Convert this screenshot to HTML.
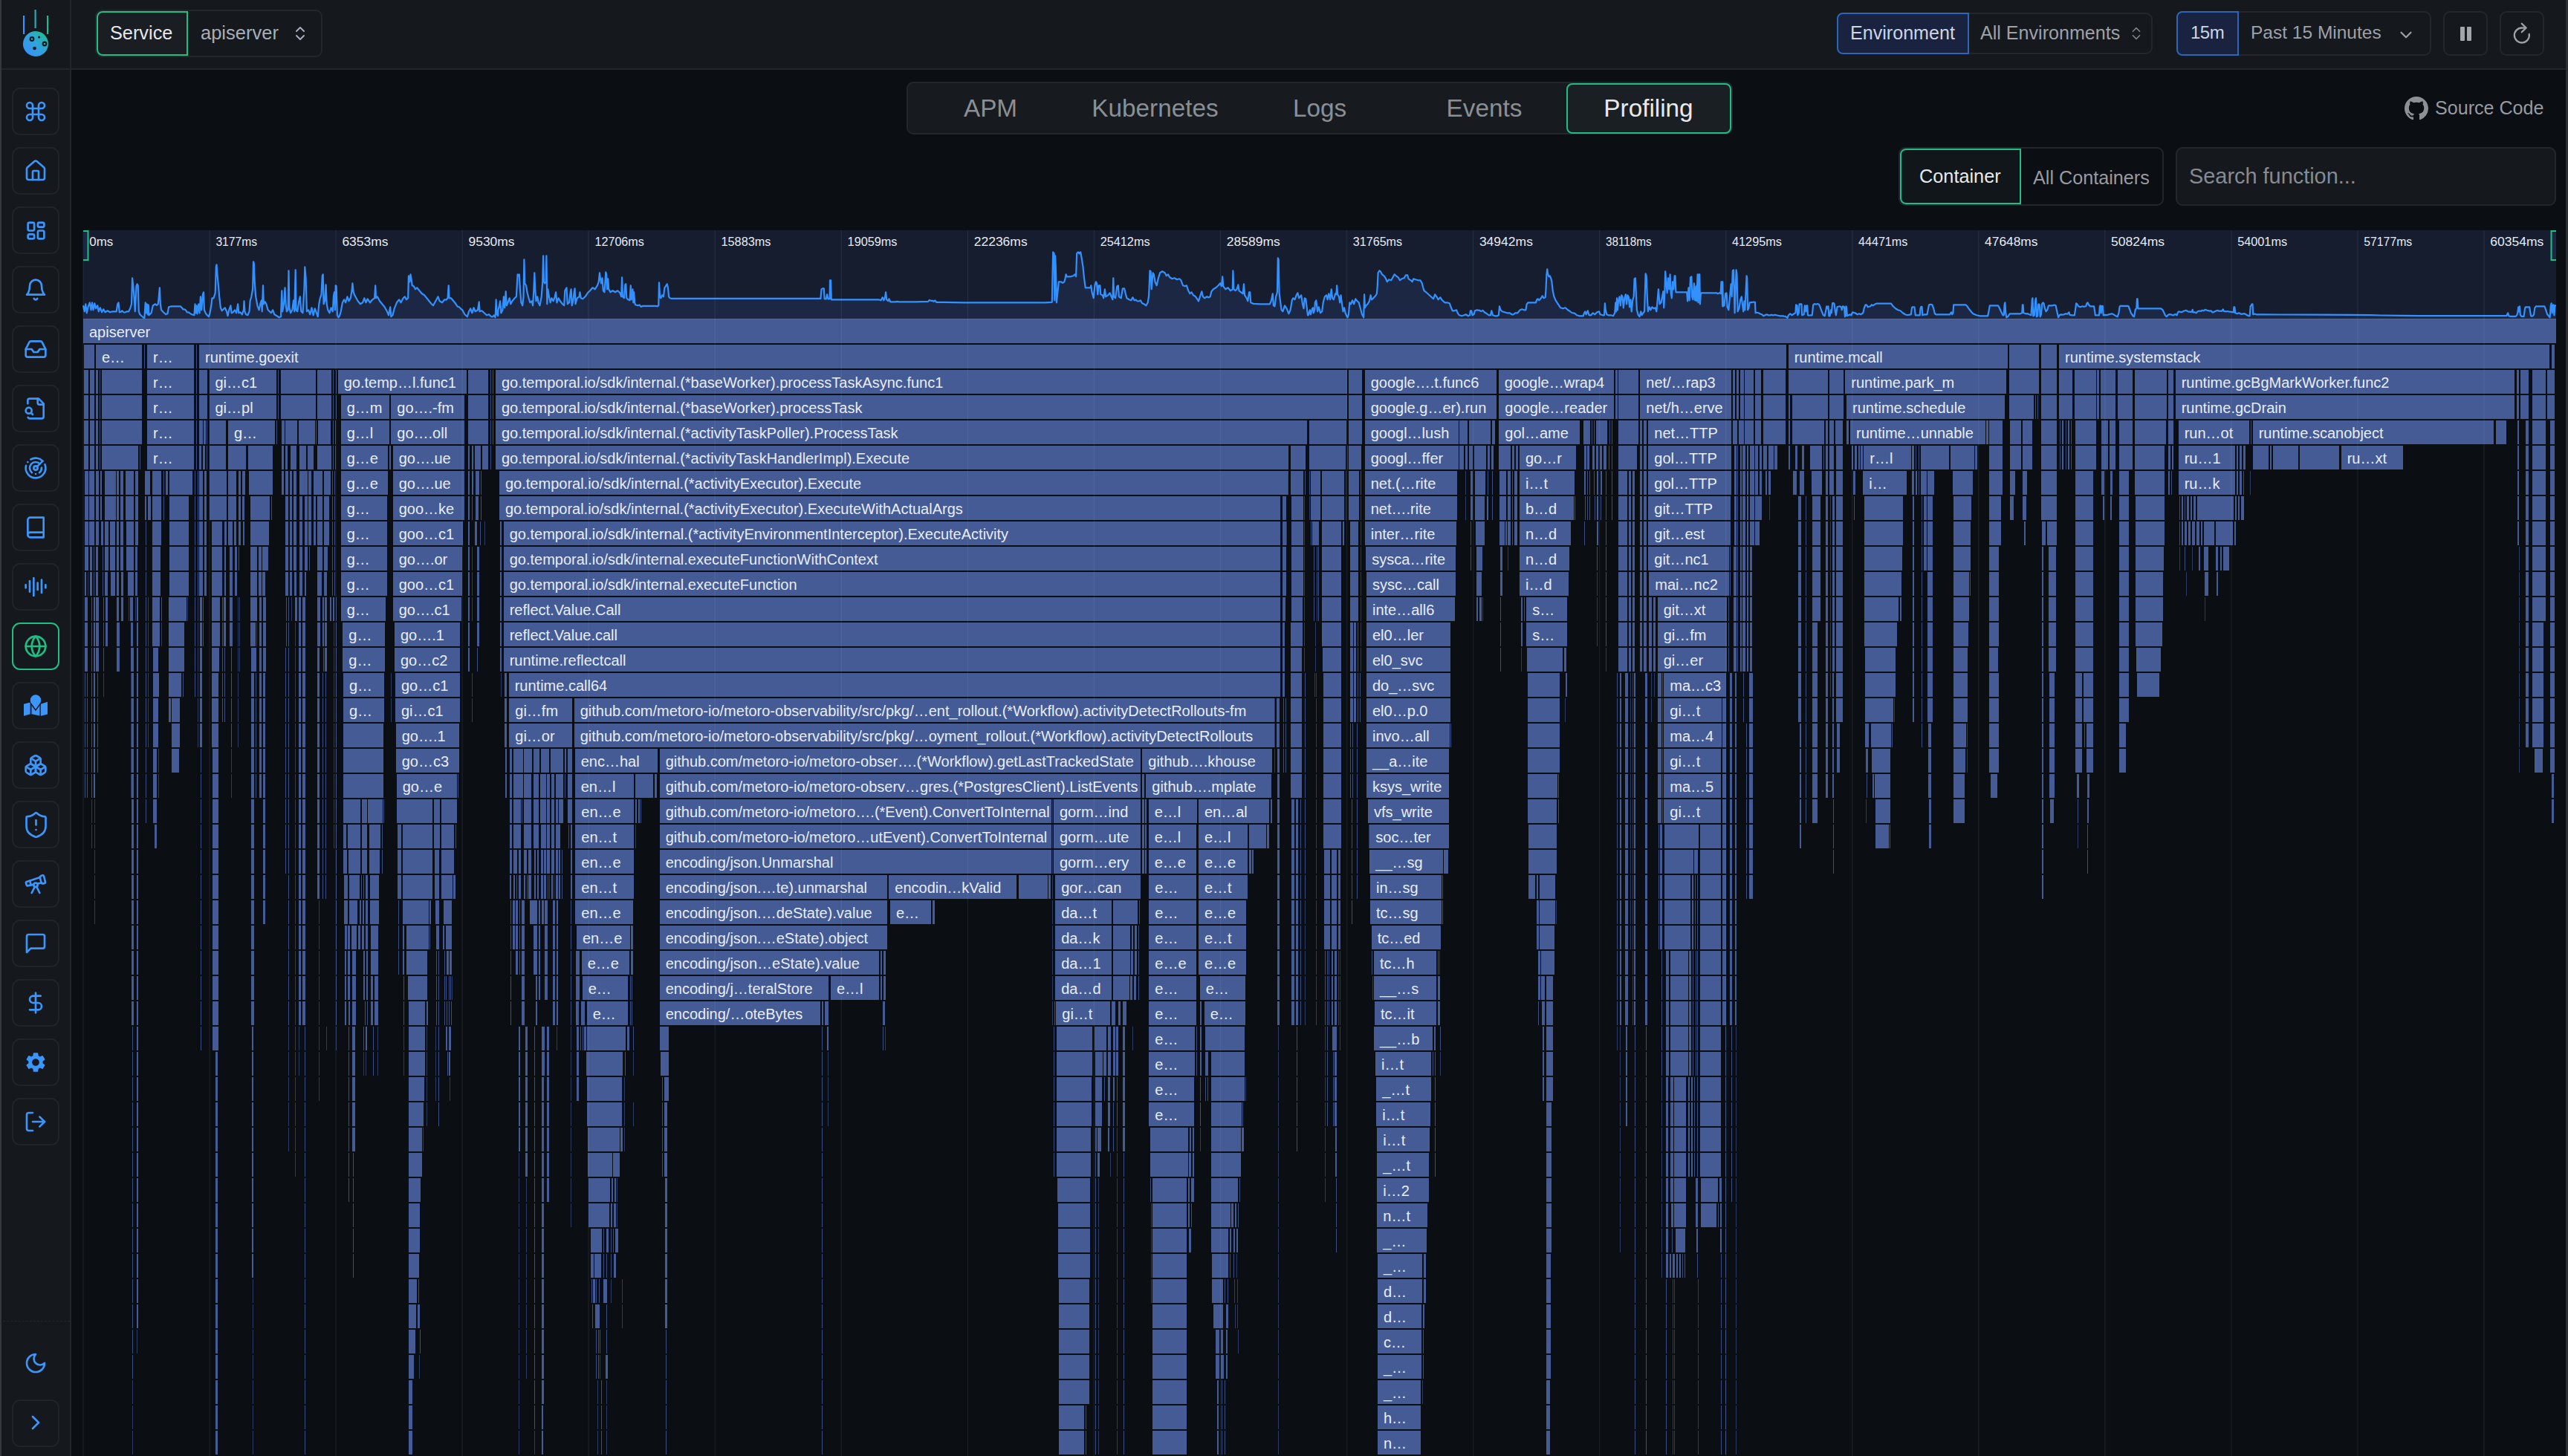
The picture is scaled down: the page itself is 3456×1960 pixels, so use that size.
<!DOCTYPE html><html><head><meta charset="utf-8"><title>Profiling</title><style>

*{box-sizing:border-box;margin:0;padding:0}
html,body{width:3456px;height:1960px;overflow:hidden;background:#0b0e12;font-family:"Liberation Sans",sans-serif;color:#e6e9ee}
#root{position:relative;width:3456px;height:1960px;overflow:hidden}
.ab{position:absolute}
.ic{position:absolute;overflow:visible}
#sb{position:absolute;left:0;top:0;width:96px;height:1960px;background:#15181d;border-right:2px solid #22252a}
#sbl{position:absolute;left:0;top:0;width:2px;height:1960px;background:#34373c}
#tb{position:absolute;left:96px;top:0;width:3360px;height:94px;background:#15181d;border-bottom:2px solid #22252a}
.sbb{position:absolute;left:16px;width:64px;height:64px;border:2px solid #202329;border-radius:11px;background:#15181d}
.sbb.act{border-color:#1fbe83}
.box{position:absolute;border:2px solid #23262c;border-radius:9px}
.t{position:absolute;white-space:nowrap;line-height:1}

</style></head><body><div id="root">
<svg class="ab" style="left:0;top:0" width="3456" height="1960" viewBox="0 0 3456 1960">
<rect x="112" y="310" width="3328" height="120" fill="#151d2f"/>
<path d="M112 411.3 L112 411.3 L113.7 419.3 L115.3 409.3 L116.8 421.3 L118.5 413.3 L120.7 407.3 L122.5 417.3 L124 407.3 L125.5 417.3 L127.3 408.3 L129 415.3 L131.2 411.3 L132.7 419.3 L134.9 414.3 L137.1 420.3 L139.3 416.3 L141.4 420.3 L144.7 418.3 L148 420.3 L151.2 419.3 L156.7 419.3 L158.2 409.3 L159.5 407.3 L160.8 420.3 L162.6 419.9 L164.3 418.3 L166.5 420.5 L168.7 420.3 L170.9 419.3 L173.1 419.3 L175.2 415.3 L177 409.3 L178.1 374.3 L179.2 384.3 L180.5 399.3 L181.8 419.3 L183.5 385.3 L184.6 382.3 L185.7 384.3 L186.8 419.3 L188.3 423.3 L191.6 426.3 L194.4 428.3 L195.7 407.3 L196.6 421.3 L197.7 409.3 L198.8 423.3 L199.7 410.3 L200.5 424.3 L203.6 421.3 L205.8 411.3 L209 409.3 L210.9 410.8 L212.7 409.3 L213.6 401.3 L214.9 387.3 L215.8 409.3 L217.1 417.3 L219.9 420.3 L223.2 423.3 L225.4 422.3 L227.1 413.3 L229 412.7 L230.8 412.3 L237.4 412.3 L242.8 412.3 L244.7 414.1 L246.5 416.5 L248.3 416.3 L250.1 417.6 L251.9 420.5 L253.7 420.3 L255.9 421.9 L258.1 423.3 L261.4 424.3 L262.5 409.3 L263.3 421.3 L264.6 411.3 L265.5 422.3 L267.3 409.3 L268.6 421.3 L269.9 399.3 L271.2 417.3 L272.9 396.3 L274 393.3 L274.9 417.3 L276.6 421.3 L278.8 424.3 L281 426.3 L282.5 421.3 L284.3 411.3 L285.4 401.3 L287.5 401.3 L289.7 394.3 L290.8 359.3 L291.5 356.3 L292.5 369.3 L293.9 384.3 L295.2 399.3 L296.9 414.3 L298.7 418.3 L300.6 416.3 L302.8 414.3 L305 419.3 L306.5 425.3 L308.2 417.3 L310.4 411.3 L311.7 421.3 L313.7 420.3 L315.9 417.3 L318.1 421.3 L320.2 409.3 L321.3 421.3 L323.5 420.3 L325.7 423.3 L327.9 417.3 L328.5 405.3 L329.4 419.3 L331.1 423.3 L333.3 424.3 L335.5 419.3 L336.6 405.3 L338.3 399.3 L340.1 389.3 L341 352.3 L341.8 354.3 L342.7 379.3 L344.2 399.3 L346.4 411.3 L348.6 417.3 L350.8 407.3 L351.9 404.3 L352.7 419.3 L354 384.3 L354.9 409.3 L356.7 406.3 L358.4 409.3 L360.6 417.3 L362.8 419.3 L364.9 421.3 L367.1 417.3 L369.3 423.3 L372.6 425.3 L375.8 427.3 L378 426.3 L379.3 391.3 L380.2 419.3 L382 409.3 L383.5 387.3 L384.6 409.3 L385.9 419.3 L387.6 417.3 L388.5 364.3 L389.4 414.3 L391.1 421.3 L393.3 417.3 L395 404.3 L396.3 419.3 L397.7 363.3 L398.5 417.3 L400.3 419.3 L402 407.3 L403.8 399.3 L405.3 419.3 L407.5 421.3 L409.4 389.3 L410.3 359.3 L411.6 374.3 L412.9 419.3 L415.1 417.3 L417.3 423.3 L419.5 414.3 L421.6 424.3 L423.8 415.3 L426 421.3 L427.7 426.3 L429.3 409.3 L430.8 401.3 L432.5 396.3 L433.8 371.3 L434.7 369.3 L435.6 409.3 L437.3 404.3 L438.6 383.3 L439.7 409.3 L441.3 417.3 L443.4 421.3 L445.6 414.3 L447.8 419.3 L448.9 399.3 L450 393.3 L450.9 417.3 L451.7 384.3 L452.6 385.3 L453.9 424.3 L455.4 427.3 L457 425.3 L458.7 419.3 L460.9 407.3 L463.1 403.3 L465.2 407.3 L467.4 399.3 L469.6 405.3 L471.8 401.3 L473.5 391.3 L474.4 381.3 L475.7 393.3 L477.2 397.3 L479.4 401.3 L481.6 405.3 L484.9 409.3 L488.1 407.3 L490.3 401.3 L492.5 407.3 L494.7 402.3 L498 407.3 L501.2 403.3 L504.1 401.3 L505.2 384.3 L506 401.3 L507.8 399.3 L511 405.3 L514.3 409.3 L517.6 413.3 L520.9 419.3 L523 424.3 L525.2 413.3 L526.3 426.3 L528.5 424.3 L530.7 415.3 L533.9 407.3 L537.2 403.3 L539.4 407.3 L542.7 401.3 L544.8 399.3 L547 403.3 L549.2 401.3 L549.9 371.3 L551.4 379.3 L552.5 369.3 L553.8 377.3 L554.7 384.3 L556.8 385.3 L559 389.3 L561.2 387.3 L564.5 391.3 L567.7 395.3 L571 397.3 L574.3 401.3 L577.5 405.3 L580.8 409.3 L583 411.3 L586.3 405.3 L589.5 399.3 L591.7 405.3 L595 407.3 L598.3 403.3 L600.4 403.8 L602.6 401.3 L603.7 384.3 L604.6 401.3 L607 401.3 L610.3 405.3 L613.5 409.3 L615.7 412.7 L617.9 413.3 L620.1 415.6 L622.2 417.3 L625.5 423.3 L628.8 426.3 L631 419.3 L633.2 415.3 L635.3 421.3 L637.5 414.3 L639.7 419.3 L643 417.3 L644.7 406.3 L645.6 419.3 L648.4 418.3 L651.7 421.3 L655 424.3 L658.2 423.3 L660 425.3 L661.5 426.3 L663.3 426.3 L664.8 424.3 L666.5 427.3 L666.9 421.3 L667.6 404.3 L667.6 403.3 L668.5 423.3 L668.5 421.3 L670.2 425.3 L670.5 417.3 L672 411.3 L673.1 405.3 L674.4 421.3 L676.4 417.3 L677.9 399.3 L679.2 414.3 L680.7 392.3 L681.8 411.3 L683.5 407.3 L685.7 401.3 L687.3 409.3 L689.4 405.3 L692.7 401.3 L694.9 399.3 L696.6 369.3 L697.5 371.3 L698.8 369.3 L699.9 389.3 L701.4 407.3 L703.2 411.3 L704.5 399.3 L705.4 349.3 L706.2 381.3 L708 384.3 L709.7 394.3 L711.5 401.3 L713.4 407.3 L715.6 405.3 L717.1 411.3 L718.4 389.3 L719.3 367.3 L720.2 389.3 L721.5 405.3 L723.2 399.3 L724.5 407.3 L726.5 411.3 L728.7 399.3 L730.2 379.3 L731.1 344.3 L732 379.3 L733.3 381.3 L734.6 379.3 L735.4 344.3 L736.3 409.3 L737.4 389.3 L738.5 397.3 L740.7 407.3 L742.4 401.3 L744.6 405.3 L746.8 399.3 L748.1 393.3 L749.4 407.3 L751.6 401.3 L753.8 405.3 L757 409.3 L759.2 411.3 L760.3 391.3 L762.5 387.3 L763.8 409.3 L766 407.3 L767.7 393.3 L768.6 389.3 L769.7 411.3 L771.2 405.3 L772.7 393.3 L773.6 388.3 L774.5 409.3 L776.7 401.3 L779.5 399.3 L780.4 393.3 L781.7 401.3 L784.3 402.3 L787.6 399.3 L790.8 394.3 L794.1 391.3 L797.4 387.3 L800.6 389.3 L803.9 384.3 L805.7 379.3 L807 367.3 L807.8 374.3 L809.1 381.3 L810.5 374.3 L811.8 391.3 L813.5 393.3 L815.3 366.3 L816.1 369.3 L817 389.3 L818.3 375.3 L819.2 389.3 L821.4 393.3 L824.6 391.3 L827.9 393.3 L831.2 391.3 L834.4 394.3 L836.2 399.3 L837.1 373.3 L837.9 399.3 L839.9 401.3 L841.4 383.3 L842.3 382.3 L843.2 401.3 L845.3 403.3 L847.5 404.3 L848.8 384.3 L849.7 403.3 L851.5 389.3 L852.3 407.3 L853.2 393.3 L854.1 407.3 L855.2 410.3 L858.4 411.3 L860.6 410.4 L862.8 412.9 L865 411.8 L873.7 411.8 L882.4 411.8 L884.4 412.5 L886.3 411.3 L887 380.3 L888.1 399.3 L889.4 401.3 L891.1 397.3 L892.9 399.3 L894.4 387.3 L895.9 385.3 L897.7 382.3 L899 387.3 L900.1 399.3 L901.6 401.3 L903.1 401.8 L965.3 401.8 L1052.5 401.8 L1104.4 401.8 L1105.5 389.3 L1107 388.3 L1108.8 388.3 L1109.6 402.3 L1111.8 402.3 L1113.1 396.3 L1114.4 402.3 L1116.6 402.3 L1117 377.3 L1118.1 377.3 L1118.8 403.3 L1139.7 403.3 L1161.5 403.3 L1182.2 403.3 L1185.5 404.3 L1187.7 400.3 L1189.4 404.3 L1191.2 399.3 L1192.1 393.3 L1193.1 403.3 L1195.3 405.3 L1196.4 402.3 L1198.2 406.3 L1205.1 406.3 L1207.6 405.9 L1210 406.3 L1220 406.3 L1231.8 406.3 L1249.2 405.8 L1251.1 403.9 L1252.9 404.9 L1254.7 404.8 L1256.5 405.8 L1258.3 404.5 L1260.2 406.8 L1297.2 407.3 L1362.6 407.3 L1406.2 407.3 L1415.8 406.8 L1416.5 369.3 L1417.2 339.3 L1418.7 341.3 L1419.3 404.3 L1420.2 344.3 L1421.1 369.3 L1421.9 407.3 L1423.3 394.3 L1424.8 379.3 L1428.1 379.3 L1430.2 380.8 L1432.4 379.3 L1433.7 374.3 L1434.6 369.3 L1435.7 372.3 L1441.1 372.3 L1444.4 371.3 L1446.6 369.3 L1448.1 372.3 L1449.2 341.3 L1451 339.3 L1452.5 341.3 L1454.2 339.3 L1456 349.3 L1457.5 359.3 L1459 374.3 L1460.8 387.3 L1464 387.3 L1467.3 387.3 L1468.4 384.3 L1469.5 393.3 L1471.7 401.3 L1473.4 384.3 L1474.9 379.3 L1476 381.3 L1477.3 396.3 L1478.6 384.3 L1480.4 384.3 L1481.3 396.3 L1483.7 397.3 L1485.2 401.3 L1486.9 389.3 L1488.2 399.3 L1491.3 397.3 L1493.5 394.3 L1495.7 399.3 L1497.4 403.3 L1498.3 374.3 L1499.1 399.3 L1501.1 401.3 L1503.3 385.3 L1504.8 384.3 L1505.9 399.3 L1508.7 401.3 L1510.9 388.3 L1513.1 388.3 L1514.8 395.3 L1516.4 401.3 L1519.6 403.3 L1522.3 404.3 L1524.4 400.3 L1526.6 404.3 L1528.6 403.6 L1530.5 405.3 L1532.7 405.5 L1534.9 404.3 L1537.1 408.3 L1539.7 409.3 L1542.5 411.3 L1544.7 407.3 L1546.2 397.3 L1547.5 364.3 L1548.6 365.3 L1549.7 389.3 L1551.5 367.3 L1552.8 369.3 L1554.5 379.3 L1556.7 384.3 L1558.9 374.3 L1561.1 367.3 L1564.3 365.3 L1567.6 367.3 L1569.8 371.3 L1572 369.3 L1574.2 373.3 L1577.4 375.3 L1580.7 374.3 L1584 376.3 L1587.2 375.3 L1589.4 377.3 L1592 384.3 L1594.9 385.3 L1597 384.3 L1599.2 391.3 L1601.4 395.3 L1603.6 393.3 L1605.8 397.3 L1609 399.3 L1611.7 403.3 L1613 405.3 L1615.6 397.3 L1617.3 392.3 L1618.9 399.3 L1621 401.3 L1624.3 399.3 L1626.5 400.5 L1628.7 399.3 L1630.4 392.3 L1633 389.3 L1636.3 387.3 L1639.6 384.3 L1642.2 381.3 L1643.9 385.3 L1645.2 372.3 L1646.3 385.3 L1649.4 389.3 L1652.7 387.3 L1655.9 391.3 L1658.8 389.3 L1659.4 364.3 L1660.3 389.3 L1662.5 391.3 L1664.6 389.3 L1666.4 383.3 L1667.5 391.3 L1670.1 393.3 L1672.7 395.3 L1674 382.3 L1675.1 397.3 L1677.7 401.3 L1679.3 405.3 L1681 393.3 L1682.3 393.3 L1683.2 407.3 L1686.5 408.8 L1696.3 409.3 L1708.9 409.3 L1710.7 405.3 L1712.8 395.3 L1713.9 411.3 L1715.5 412.3 L1717.2 399.3 L1718.9 393.3 L1719.8 347.3 L1720.7 349.3 L1721.6 394.3 L1722.9 404.3 L1724.6 417.3 L1726.4 419.3 L1729 411.3 L1731.6 415.3 L1734.4 422.3 L1736.6 417.3 L1738.8 404.3 L1740.3 401.3 L1742.5 403.3 L1744.7 397.3 L1746.4 394.3 L1748.2 401.3 L1749.7 399.3 L1751.2 397.3 L1753 409.3 L1754.5 415.3 L1755.8 401.3 L1757.3 402.3 L1759.1 417.3 L1760 424.3 L1760.8 424.3 L1762.2 419.3 L1762.8 417.3 L1763.9 423.3 L1764.9 419.3 L1766.1 415.3 L1767.1 414.3 L1767.6 421.3 L1769.3 417.3 L1769.8 407.3 L1771.3 404.3 L1773.1 419.3 L1774.8 413.3 L1777 421.3 L1779.2 419.3 L1780.7 407.3 L1782.9 399.3 L1785.1 397.3 L1786.6 403.3 L1788.3 395.3 L1790.1 403.3 L1791.8 389.3 L1793.1 401.3 L1794.9 403.3 L1797.1 395.3 L1798.4 396.3 L1799.2 384.3 L1800.1 396.3 L1801.9 399.3 L1803.2 407.3 L1804.5 397.3 L1805.8 407.3 L1807.5 419.3 L1809.1 414.3 L1810.6 421.3 L1812.3 425.3 L1813.6 427.3 L1814.9 423.3 L1816.3 407.3 L1818 409.3 L1820 404.3 L1822.1 409.3 L1824.3 402.3 L1826.5 405.3 L1828.7 407.3 L1830.9 415.3 L1833 423.3 L1835.2 427.3 L1836.1 396.3 L1837 414.3 L1838.5 411.3 L1840.7 409.3 L1842.9 405.3 L1844.6 397.3 L1845.9 403.3 L1848.3 401.3 L1851.1 398.3 L1852.9 395.3 L1853.8 384.3 L1854.6 367.3 L1856.4 364.3 L1857.7 365.3 L1859.9 369.3 L1862.5 371.3 L1864.7 374.3 L1866.8 379.3 L1869 376.3 L1872.3 377.3 L1874.5 373.3 L1876.7 369.3 L1878.8 371.3 L1881.7 373.3 L1883.9 377.3 L1886.5 375.3 L1889.7 374.3 L1891.9 370.3 L1894.1 370.3 L1895.6 375.3 L1898.5 377.3 L1900.6 379.3 L1902.2 375.3 L1905 376.3 L1908.3 377.3 L1911.5 377.3 L1913.7 381.3 L1915.3 387.3 L1916.6 391.3 L1919.2 393.3 L1922.5 396.3 L1925.7 399.3 L1929 402.3 L1931.2 396.3 L1933.4 399.3 L1935.5 403.3 L1938.4 400.3 L1941 404.3 L1944.3 407.3 L1947.5 407.3 L1950.8 408.3 L1953 414.3 L1954.7 418.3 L1957.3 418.3 L1960.2 417.3 L1961.7 421.3 L1963.9 424.3 L1967.2 425.3 L1970.4 424.3 L1972.6 423.3 L1975.9 425.3 L1978.1 424.3 L1978.9 418.3 L1980.2 418.3 L1981.5 424.3 L1983.5 423.3 L1985 418.3 L1987.9 417.3 L1991.1 417.8 L1993.3 419.1 L1995.5 417.8 L1997.7 420.3 L2001 422.3 L2003.8 424.3 L2006 424.3 L2007.3 418.3 L2009 424.3 L2011.9 425.3 L2015.1 425.3 L2016.9 424.3 L2018 412.3 L2019.5 417.3 L2021.7 419.3 L2024.9 420.3 L2028.2 421.3 L2031.5 421.3 L2034.7 423.3 L2036.9 423.3 L2039.1 421.3 L2042.4 421.3 L2045.7 417.3 L2048.3 416.3 L2051.1 417.3 L2053.3 417.3 L2054.8 409.3 L2056.6 407.3 L2062 407.3 L2067 407.3 L2068.3 403.3 L2069.6 402.3 L2071.4 404.3 L2074 401.3 L2075.7 398.3 L2077.5 401.3 L2079.7 400.3 L2080.5 389.3 L2081.4 369.3 L2082.3 362.3 L2083.2 369.3 L2084.5 372.3 L2085.8 371.3 L2087.1 374.3 L2088.4 379.3 L2089.7 391.3 L2091.4 399.3 L2093.6 404.3 L2096.9 409.3 L2100.2 414.3 L2103.4 415.3 L2106.7 414.3 L2110 417.3 L2113.2 419.3 L2115.4 421 L2117.6 421.3 L2119.8 422.2 L2122 424.3 L2125.2 425.3 L2130.7 425.3 L2132 421.3 L2133.3 419.3 L2134.6 423.3 L2136.8 418.3 L2138.5 424.3 L2141.2 424.3 L2143.8 421.3 L2146.4 423.3 L2149.2 420.3 L2152.1 419.3 L2153.6 423.3 L2156.9 424.3 L2159 424.3 L2159.9 408.3 L2160.8 417.3 L2162.3 423.3 L2164.5 424.3 L2167.8 424.3 L2171 425.3 L2173.2 421.3 L2174.3 407.3 L2175.2 419.3 L2176 401.3 L2176.9 417.3 L2178.2 404.3 L2179.5 399.3 L2180.8 411.3 L2182.2 397.3 L2183.5 399.3 L2184.8 414.3 L2186.3 401.3 L2187.8 396.3 L2189.1 409.3 L2190.4 397.3 L2191.7 399.3 L2193.1 413.3 L2194.4 403.3 L2195.7 419.3 L2197.2 404.3 L2198.7 399.3 L2199.6 375.3 L2200.9 374.3 L2202 399.3 L2202.9 417.3 L2204.8 424.3 L2206.6 426.3 L2208.3 419.3 L2209.6 424.3 L2211.4 421.3 L2213.1 419.3 L2214 389.3 L2214.6 368.3 L2215.7 371.3 L2216.8 399.3 L2217.9 419.3 L2219.7 413.3 L2221.4 417.3 L2223.4 413.3 L2225.5 415.3 L2227.7 414.3 L2229.3 419.3 L2230.6 404.3 L2231.9 389.3 L2232.7 399.3 L2233.6 409.3 L2235.4 407.3 L2237.1 399.3 L2238.4 392.3 L2239.3 414.3 L2240.4 393.3 L2241.2 365.3 L2242.3 379.3 L2243.6 394.3 L2245 374.3 L2246.3 389.3 L2247.6 369.3 L2248.7 394.3 L2249.8 401.3 L2251.1 379.3 L2252.4 389.3 L2253.7 371.3 L2254.5 371.3 L2255.4 393.3 L2257.2 393.3 L2270.2 393.3 L2271.1 405.3 L2272.4 387.3 L2273.7 404.3 L2275 373.3 L2276.4 372.3 L2277.2 399.3 L2278.5 403.3 L2279.8 381.3 L2281.2 404.3 L2282.5 385.3 L2283.3 405.3 L2284.6 369.3 L2285.5 407.3 L2286.4 369.3 L2287.3 369.3 L2287.9 409.3 L2289 394.3 L2300.8 394.3 L2310 394.3 L2311.9 395.4 L2313.9 394.3 L2314.8 394.3 L2315.6 395.3 L2316.5 379.3 L2316.5 391.3 L2317.3 381.3 L2317.4 379.3 L2318.2 412.3 L2318.3 379.3 L2318.9 412.3 L2320.5 411.3 L2322 395.3 L2323.5 394.3 L2324.6 413.3 L2326.4 417.3 L2328.5 394.3 L2329.6 382.3 L2330.7 399.3 L2331.8 364.3 L2333.1 363.3 L2334 399.3 L2334.6 421.3 L2335.7 389.3 L2336.6 363.3 L2337.5 369.3 L2338.6 419.3 L2340.5 415.3 L2342.3 403.3 L2343.8 399.3 L2344.9 409.3 L2346.2 419.3 L2347.5 405.3 L2348.4 417.3 L2349.7 389.3 L2350.6 371.3 L2351.2 374.3 L2352.1 417.3 L2353.2 415.3 L2354.7 407.3 L2358 406.8 L2359.9 406.5 L2361.9 406.8 L2362.6 421.3 L2364.6 420.8 L2366.7 421.3 L2368.9 422.5 L2371.1 423.3 L2373.2 425.3 L2375.4 424.2 L2377.6 423.3 L2379.8 424.3 L2382 424.4 L2384.1 423.8 L2386.3 424.5 L2388.5 423.8 L2390.7 424.3 L2392.9 424.8 L2395 425.3 L2397.2 425.3 L2399 425.3 L2400.9 425.7 L2402.7 425.8 L2405.5 427.8 L2407 424.3 L2409.2 422.3 L2411.4 424.3 L2414.2 422.3 L2416.4 421.3 L2417.1 410.3 L2418.6 411.3 L2419.2 424.3 L2420.8 421.3 L2421.6 409.3 L2424.5 409.3 L2425.1 424.3 L2427.7 423.3 L2428.8 411.3 L2430.4 419.3 L2431.2 411.3 L2432.3 411.3 L2433 424.3 L2434.7 424.7 L2436.5 424.3 L2438.7 424.3 L2440.2 410.3 L2442.1 409 L2444.1 409.7 L2446.1 409 L2448 409.7 L2449.6 413.3 L2451.7 419.3 L2453.9 424.3 L2455.7 425.3 L2457.4 417.3 L2458.3 412.3 L2459.6 415.3 L2460.5 412.3 L2461.3 425.3 L2462.6 425.3 L2463.7 417.3 L2464.8 421.3 L2466.1 408.3 L2467.4 407.8 L2468.7 409.3 L2469.8 419.3 L2470.9 424.3 L2472.5 413.3 L2475.7 412.3 L2477.9 413.3 L2478.8 417.3 L2480.1 412.3 L2482 413.3 L2482.9 426.3 L2484 424.3 L2484.4 412.3 L2485.1 413.3 L2485.8 425.3 L2487.7 424.3 L2489.9 423.3 L2491.4 424.3 L2493.2 420.3 L2496.4 421.3 L2499.7 423.3 L2501.9 422.3 L2504.1 423.3 L2507.3 421.3 L2508.9 414.3 L2510.6 410.3 L2511.9 410.3 L2513.9 413.3 L2517.2 412.3 L2518.9 410.3 L2520.6 411.3 L2523.7 409.3 L2525.9 408.6 L2536.8 408.6 L2545.1 408.6 L2547.7 412.3 L2551 415.3 L2554.2 417.3 L2557.5 418.3 L2560.8 421.3 L2564 423.3 L2566.2 424 L2568.4 423.8 L2571.7 423.3 L2573 414.3 L2573.8 413.3 L2576.5 413.3 L2577.8 424.3 L2580.4 424.3 L2583.7 424.3 L2584.5 415.3 L2585.4 412.8 L2586.5 412.8 L2587.4 424.3 L2590.2 423.3 L2593.5 423.3 L2595 415.3 L2596.1 410.3 L2598.3 409.7 L2600.4 410.3 L2602.2 415.3 L2603.9 422.3 L2605.5 423.3 L2615.3 423.3 L2624 423.3 L2625.3 421.3 L2626.2 420.3 L2627.1 423.3 L2628.4 421.3 L2629.2 410.3 L2637.1 410.3 L2645.4 410.3 L2647.5 412.3 L2650.2 416.3 L2653.4 420.3 L2656.3 422.8 L2658.1 423.4 L2660 424.3 L2662.2 424.8 L2664.3 425.3 L2669.8 425.3 L2675.2 425.3 L2676.8 417.3 L2677.9 411.3 L2683.3 411.3 L2689 411.3 L2690.7 414.3 L2692.9 419.3 L2695.5 424.3 L2696.8 424.3 L2697.7 409.3 L2698.4 407.3 L2699.2 421.3 L2700.3 427.3 L2702.1 426.3 L2704.7 422.3 L2711.2 422.3 L2718.9 422.3 L2721.3 421.3 L2721.9 410.3 L2722.6 410.3 L2723.2 421.3 L2726.5 422.3 L2728.7 422.1 L2730.8 423.3 L2733.5 424.3 L2734.8 403.3 L2735.4 401.3 L2736.3 425.3 L2737.8 424.3 L2739.4 403.3 L2740 401.3 L2740.9 426.3 L2742.2 425.3 L2743.1 410.3 L2743.9 409.3 L2744.8 410.3 L2745.7 426.3 L2747 423.3 L2748.1 409.3 L2749.4 407.3 L2750.5 408.3 L2751.8 414.3 L2753.5 419.3 L2755.3 417.3 L2756.6 412.3 L2757.4 411.3 L2762.5 411.3 L2764.5 410.5 L2766.6 411.3 L2767.9 417.3 L2769.2 423.3 L2770.1 427.3 L2771.8 424.3 L2773.4 423.3 L2775.5 423.7 L2777.7 423.3 L2779.9 422.2 L2782.1 422.8 L2783.6 421.3 L2784.5 420.3 L2785.4 423.8 L2788.6 424.3 L2791.9 424.3 L2793.2 415.3 L2794.1 408.3 L2795.4 409.3 L2797.1 412.3 L2799.5 413.3 L2802.4 412.3 L2805 412.8 L2807.2 412.3 L2808.5 408.3 L2809.6 407.3 L2811.1 410.3 L2812.8 412.3 L2815.5 412.3 L2818.1 412.3 L2819.2 419.3 L2819.8 424.3 L2822.4 424.3 L2825 424.3 L2825.9 412.3 L2826.8 411.3 L2827.7 421.3 L2828.5 412.3 L2829.8 411.8 L2830.7 424.3 L2833.3 423.8 L2835.5 424.2 L2837.7 423.3 L2839.9 422.9 L2842.1 422.3 L2845.3 423.8 L2847.5 425.3 L2849.7 426.3 L2851.4 421.3 L2852.5 413.3 L2853.4 411.8 L2859.5 411.8 L2862.3 411.8 L2863.9 411.8 L2864.6 412.3 L2865.6 415.3 L2866.5 417.3 L2867.8 421.3 L2868.4 422.3 L2870 424.3 L2870.2 425.3 L2872.1 426.3 L2873.2 420.3 L2873.9 416.3 L2875.3 415.3 L2876 402.3 L2876.7 402.3 L2877.4 415.3 L2887.9 415.3 L2899.5 415.3 L2908.3 415.3 L2910.6 417.3 L2912.5 421.3 L2913.8 424.3 L2915.7 426.3 L2918 423.8 L2919.8 423.1 L2921.5 423.3 L2923.8 424.3 L2925.6 424.2 L2927.3 422.8 L2929.6 424.3 L2931 420.3 L2932.4 419.3 L2935.4 420.3 L2937.2 419.6 L2938.9 418.8 L2941.7 417.8 L2944.7 419.3 L2947.7 419.8 L2950.1 419.3 L2950.7 416.8 L2951.4 420.3 L2954 420.3 L2955.7 421.4 L2957.5 419.3 L2959.8 418.5 L2962.1 418.8 L2963.9 417.7 L2965.6 418.3 L2967.7 416.8 L2970.2 417.8 L2972 418.1 L2973.7 418.8 L2975.5 418.3 L2977.2 420.3 L2978.9 420.4 L2980.7 419.3 L2983 418.3 L2984.7 417.9 L2986.5 418.8 L2988.2 418.5 L2990 418.8 L2991.8 416.3 L2992.8 418.8 L2995.8 419.3 L2997.5 419 L2999.3 419.3 L3001 419.7 L3002.7 419.8 L3005.8 420.3 L3006.4 413.3 L3007.4 413.3 L3008.1 421.3 L3010.9 422.3 L3013.2 421.3 L3016 422.8 L3019 422.3 L3020.7 422.2 L3022.5 423.3 L3025.2 424.8 L3027.6 425.3 L3028.7 412.3 L3029.7 411.3 L3030.6 409.3 L3031.5 409.3 L3032.2 423.3 L3034.3 422.5 L3036.4 423.3 L3068.9 423.5 L3115.3 423.7 L3161.7 423.9 L3189.6 424.1 L3203.5 424.5 L3231.3 424.8 L3254.6 425.1 L3301 425.1 L3347.4 425.1 L3373.4 425.1 L3374.5 422.3 L3375.2 421.3 L3376.2 425.3 L3378.7 425.8 L3385.7 425.8 L3387.3 424.3 L3388.2 421.3 L3389.2 413.3 L3390.1 419.3 L3391 412.3 L3391.9 424.3 L3393.3 425.8 L3396.6 425.8 L3398 415.3 L3398.9 413.3 L3404.2 413.3 L3405.4 421.3 L3406.1 425.3 L3407.3 425.8 L3408.7 425.3 L3410 423.3 L3411.4 414.3 L3412.8 412.3 L3419.3 412.3 L3424.4 412.3 L3426.3 417.3 L3428.2 423.3 L3430 425.3 L3431.6 427.3 L3432.8 411.3 L3433.7 408.3 L3434.7 421.3 L3435.6 411.3 L3436.5 410.3 L3437.4 424.3 L3438.4 411.3 L3439.3 411.3 L3440 411.3 L3440 430 L112 430 Z" fill="#1c2743" stroke="none"/>
<path d="M112 411.3 L112 411.3 L113.7 419.3 L115.3 409.3 L116.8 421.3 L118.5 413.3 L120.7 407.3 L122.5 417.3 L124 407.3 L125.5 417.3 L127.3 408.3 L129 415.3 L131.2 411.3 L132.7 419.3 L134.9 414.3 L137.1 420.3 L139.3 416.3 L141.4 420.3 L144.7 418.3 L148 420.3 L151.2 419.3 L156.7 419.3 L158.2 409.3 L159.5 407.3 L160.8 420.3 L162.6 419.9 L164.3 418.3 L166.5 420.5 L168.7 420.3 L170.9 419.3 L173.1 419.3 L175.2 415.3 L177 409.3 L178.1 374.3 L179.2 384.3 L180.5 399.3 L181.8 419.3 L183.5 385.3 L184.6 382.3 L185.7 384.3 L186.8 419.3 L188.3 423.3 L191.6 426.3 L194.4 428.3 L195.7 407.3 L196.6 421.3 L197.7 409.3 L198.8 423.3 L199.7 410.3 L200.5 424.3 L203.6 421.3 L205.8 411.3 L209 409.3 L210.9 410.8 L212.7 409.3 L213.6 401.3 L214.9 387.3 L215.8 409.3 L217.1 417.3 L219.9 420.3 L223.2 423.3 L225.4 422.3 L227.1 413.3 L229 412.7 L230.8 412.3 L237.4 412.3 L242.8 412.3 L244.7 414.1 L246.5 416.5 L248.3 416.3 L250.1 417.6 L251.9 420.5 L253.7 420.3 L255.9 421.9 L258.1 423.3 L261.4 424.3 L262.5 409.3 L263.3 421.3 L264.6 411.3 L265.5 422.3 L267.3 409.3 L268.6 421.3 L269.9 399.3 L271.2 417.3 L272.9 396.3 L274 393.3 L274.9 417.3 L276.6 421.3 L278.8 424.3 L281 426.3 L282.5 421.3 L284.3 411.3 L285.4 401.3 L287.5 401.3 L289.7 394.3 L290.8 359.3 L291.5 356.3 L292.5 369.3 L293.9 384.3 L295.2 399.3 L296.9 414.3 L298.7 418.3 L300.6 416.3 L302.8 414.3 L305 419.3 L306.5 425.3 L308.2 417.3 L310.4 411.3 L311.7 421.3 L313.7 420.3 L315.9 417.3 L318.1 421.3 L320.2 409.3 L321.3 421.3 L323.5 420.3 L325.7 423.3 L327.9 417.3 L328.5 405.3 L329.4 419.3 L331.1 423.3 L333.3 424.3 L335.5 419.3 L336.6 405.3 L338.3 399.3 L340.1 389.3 L341 352.3 L341.8 354.3 L342.7 379.3 L344.2 399.3 L346.4 411.3 L348.6 417.3 L350.8 407.3 L351.9 404.3 L352.7 419.3 L354 384.3 L354.9 409.3 L356.7 406.3 L358.4 409.3 L360.6 417.3 L362.8 419.3 L364.9 421.3 L367.1 417.3 L369.3 423.3 L372.6 425.3 L375.8 427.3 L378 426.3 L379.3 391.3 L380.2 419.3 L382 409.3 L383.5 387.3 L384.6 409.3 L385.9 419.3 L387.6 417.3 L388.5 364.3 L389.4 414.3 L391.1 421.3 L393.3 417.3 L395 404.3 L396.3 419.3 L397.7 363.3 L398.5 417.3 L400.3 419.3 L402 407.3 L403.8 399.3 L405.3 419.3 L407.5 421.3 L409.4 389.3 L410.3 359.3 L411.6 374.3 L412.9 419.3 L415.1 417.3 L417.3 423.3 L419.5 414.3 L421.6 424.3 L423.8 415.3 L426 421.3 L427.7 426.3 L429.3 409.3 L430.8 401.3 L432.5 396.3 L433.8 371.3 L434.7 369.3 L435.6 409.3 L437.3 404.3 L438.6 383.3 L439.7 409.3 L441.3 417.3 L443.4 421.3 L445.6 414.3 L447.8 419.3 L448.9 399.3 L450 393.3 L450.9 417.3 L451.7 384.3 L452.6 385.3 L453.9 424.3 L455.4 427.3 L457 425.3 L458.7 419.3 L460.9 407.3 L463.1 403.3 L465.2 407.3 L467.4 399.3 L469.6 405.3 L471.8 401.3 L473.5 391.3 L474.4 381.3 L475.7 393.3 L477.2 397.3 L479.4 401.3 L481.6 405.3 L484.9 409.3 L488.1 407.3 L490.3 401.3 L492.5 407.3 L494.7 402.3 L498 407.3 L501.2 403.3 L504.1 401.3 L505.2 384.3 L506 401.3 L507.8 399.3 L511 405.3 L514.3 409.3 L517.6 413.3 L520.9 419.3 L523 424.3 L525.2 413.3 L526.3 426.3 L528.5 424.3 L530.7 415.3 L533.9 407.3 L537.2 403.3 L539.4 407.3 L542.7 401.3 L544.8 399.3 L547 403.3 L549.2 401.3 L549.9 371.3 L551.4 379.3 L552.5 369.3 L553.8 377.3 L554.7 384.3 L556.8 385.3 L559 389.3 L561.2 387.3 L564.5 391.3 L567.7 395.3 L571 397.3 L574.3 401.3 L577.5 405.3 L580.8 409.3 L583 411.3 L586.3 405.3 L589.5 399.3 L591.7 405.3 L595 407.3 L598.3 403.3 L600.4 403.8 L602.6 401.3 L603.7 384.3 L604.6 401.3 L607 401.3 L610.3 405.3 L613.5 409.3 L615.7 412.7 L617.9 413.3 L620.1 415.6 L622.2 417.3 L625.5 423.3 L628.8 426.3 L631 419.3 L633.2 415.3 L635.3 421.3 L637.5 414.3 L639.7 419.3 L643 417.3 L644.7 406.3 L645.6 419.3 L648.4 418.3 L651.7 421.3 L655 424.3 L658.2 423.3 L660 425.3 L661.5 426.3 L663.3 426.3 L664.8 424.3 L666.5 427.3 L666.9 421.3 L667.6 404.3 L667.6 403.3 L668.5 423.3 L668.5 421.3 L670.2 425.3 L670.5 417.3 L672 411.3 L673.1 405.3 L674.4 421.3 L676.4 417.3 L677.9 399.3 L679.2 414.3 L680.7 392.3 L681.8 411.3 L683.5 407.3 L685.7 401.3 L687.3 409.3 L689.4 405.3 L692.7 401.3 L694.9 399.3 L696.6 369.3 L697.5 371.3 L698.8 369.3 L699.9 389.3 L701.4 407.3 L703.2 411.3 L704.5 399.3 L705.4 349.3 L706.2 381.3 L708 384.3 L709.7 394.3 L711.5 401.3 L713.4 407.3 L715.6 405.3 L717.1 411.3 L718.4 389.3 L719.3 367.3 L720.2 389.3 L721.5 405.3 L723.2 399.3 L724.5 407.3 L726.5 411.3 L728.7 399.3 L730.2 379.3 L731.1 344.3 L732 379.3 L733.3 381.3 L734.6 379.3 L735.4 344.3 L736.3 409.3 L737.4 389.3 L738.5 397.3 L740.7 407.3 L742.4 401.3 L744.6 405.3 L746.8 399.3 L748.1 393.3 L749.4 407.3 L751.6 401.3 L753.8 405.3 L757 409.3 L759.2 411.3 L760.3 391.3 L762.5 387.3 L763.8 409.3 L766 407.3 L767.7 393.3 L768.6 389.3 L769.7 411.3 L771.2 405.3 L772.7 393.3 L773.6 388.3 L774.5 409.3 L776.7 401.3 L779.5 399.3 L780.4 393.3 L781.7 401.3 L784.3 402.3 L787.6 399.3 L790.8 394.3 L794.1 391.3 L797.4 387.3 L800.6 389.3 L803.9 384.3 L805.7 379.3 L807 367.3 L807.8 374.3 L809.1 381.3 L810.5 374.3 L811.8 391.3 L813.5 393.3 L815.3 366.3 L816.1 369.3 L817 389.3 L818.3 375.3 L819.2 389.3 L821.4 393.3 L824.6 391.3 L827.9 393.3 L831.2 391.3 L834.4 394.3 L836.2 399.3 L837.1 373.3 L837.9 399.3 L839.9 401.3 L841.4 383.3 L842.3 382.3 L843.2 401.3 L845.3 403.3 L847.5 404.3 L848.8 384.3 L849.7 403.3 L851.5 389.3 L852.3 407.3 L853.2 393.3 L854.1 407.3 L855.2 410.3 L858.4 411.3 L860.6 410.4 L862.8 412.9 L865 411.8 L873.7 411.8 L882.4 411.8 L884.4 412.5 L886.3 411.3 L887 380.3 L888.1 399.3 L889.4 401.3 L891.1 397.3 L892.9 399.3 L894.4 387.3 L895.9 385.3 L897.7 382.3 L899 387.3 L900.1 399.3 L901.6 401.3 L903.1 401.8 L965.3 401.8 L1052.5 401.8 L1104.4 401.8 L1105.5 389.3 L1107 388.3 L1108.8 388.3 L1109.6 402.3 L1111.8 402.3 L1113.1 396.3 L1114.4 402.3 L1116.6 402.3 L1117 377.3 L1118.1 377.3 L1118.8 403.3 L1139.7 403.3 L1161.5 403.3 L1182.2 403.3 L1185.5 404.3 L1187.7 400.3 L1189.4 404.3 L1191.2 399.3 L1192.1 393.3 L1193.1 403.3 L1195.3 405.3 L1196.4 402.3 L1198.2 406.3 L1205.1 406.3 L1207.6 405.9 L1210 406.3 L1220 406.3 L1231.8 406.3 L1249.2 405.8 L1251.1 403.9 L1252.9 404.9 L1254.7 404.8 L1256.5 405.8 L1258.3 404.5 L1260.2 406.8 L1297.2 407.3 L1362.6 407.3 L1406.2 407.3 L1415.8 406.8 L1416.5 369.3 L1417.2 339.3 L1418.7 341.3 L1419.3 404.3 L1420.2 344.3 L1421.1 369.3 L1421.9 407.3 L1423.3 394.3 L1424.8 379.3 L1428.1 379.3 L1430.2 380.8 L1432.4 379.3 L1433.7 374.3 L1434.6 369.3 L1435.7 372.3 L1441.1 372.3 L1444.4 371.3 L1446.6 369.3 L1448.1 372.3 L1449.2 341.3 L1451 339.3 L1452.5 341.3 L1454.2 339.3 L1456 349.3 L1457.5 359.3 L1459 374.3 L1460.8 387.3 L1464 387.3 L1467.3 387.3 L1468.4 384.3 L1469.5 393.3 L1471.7 401.3 L1473.4 384.3 L1474.9 379.3 L1476 381.3 L1477.3 396.3 L1478.6 384.3 L1480.4 384.3 L1481.3 396.3 L1483.7 397.3 L1485.2 401.3 L1486.9 389.3 L1488.2 399.3 L1491.3 397.3 L1493.5 394.3 L1495.7 399.3 L1497.4 403.3 L1498.3 374.3 L1499.1 399.3 L1501.1 401.3 L1503.3 385.3 L1504.8 384.3 L1505.9 399.3 L1508.7 401.3 L1510.9 388.3 L1513.1 388.3 L1514.8 395.3 L1516.4 401.3 L1519.6 403.3 L1522.3 404.3 L1524.4 400.3 L1526.6 404.3 L1528.6 403.6 L1530.5 405.3 L1532.7 405.5 L1534.9 404.3 L1537.1 408.3 L1539.7 409.3 L1542.5 411.3 L1544.7 407.3 L1546.2 397.3 L1547.5 364.3 L1548.6 365.3 L1549.7 389.3 L1551.5 367.3 L1552.8 369.3 L1554.5 379.3 L1556.7 384.3 L1558.9 374.3 L1561.1 367.3 L1564.3 365.3 L1567.6 367.3 L1569.8 371.3 L1572 369.3 L1574.2 373.3 L1577.4 375.3 L1580.7 374.3 L1584 376.3 L1587.2 375.3 L1589.4 377.3 L1592 384.3 L1594.9 385.3 L1597 384.3 L1599.2 391.3 L1601.4 395.3 L1603.6 393.3 L1605.8 397.3 L1609 399.3 L1611.7 403.3 L1613 405.3 L1615.6 397.3 L1617.3 392.3 L1618.9 399.3 L1621 401.3 L1624.3 399.3 L1626.5 400.5 L1628.7 399.3 L1630.4 392.3 L1633 389.3 L1636.3 387.3 L1639.6 384.3 L1642.2 381.3 L1643.9 385.3 L1645.2 372.3 L1646.3 385.3 L1649.4 389.3 L1652.7 387.3 L1655.9 391.3 L1658.8 389.3 L1659.4 364.3 L1660.3 389.3 L1662.5 391.3 L1664.6 389.3 L1666.4 383.3 L1667.5 391.3 L1670.1 393.3 L1672.7 395.3 L1674 382.3 L1675.1 397.3 L1677.7 401.3 L1679.3 405.3 L1681 393.3 L1682.3 393.3 L1683.2 407.3 L1686.5 408.8 L1696.3 409.3 L1708.9 409.3 L1710.7 405.3 L1712.8 395.3 L1713.9 411.3 L1715.5 412.3 L1717.2 399.3 L1718.9 393.3 L1719.8 347.3 L1720.7 349.3 L1721.6 394.3 L1722.9 404.3 L1724.6 417.3 L1726.4 419.3 L1729 411.3 L1731.6 415.3 L1734.4 422.3 L1736.6 417.3 L1738.8 404.3 L1740.3 401.3 L1742.5 403.3 L1744.7 397.3 L1746.4 394.3 L1748.2 401.3 L1749.7 399.3 L1751.2 397.3 L1753 409.3 L1754.5 415.3 L1755.8 401.3 L1757.3 402.3 L1759.1 417.3 L1760 424.3 L1760.8 424.3 L1762.2 419.3 L1762.8 417.3 L1763.9 423.3 L1764.9 419.3 L1766.1 415.3 L1767.1 414.3 L1767.6 421.3 L1769.3 417.3 L1769.8 407.3 L1771.3 404.3 L1773.1 419.3 L1774.8 413.3 L1777 421.3 L1779.2 419.3 L1780.7 407.3 L1782.9 399.3 L1785.1 397.3 L1786.6 403.3 L1788.3 395.3 L1790.1 403.3 L1791.8 389.3 L1793.1 401.3 L1794.9 403.3 L1797.1 395.3 L1798.4 396.3 L1799.2 384.3 L1800.1 396.3 L1801.9 399.3 L1803.2 407.3 L1804.5 397.3 L1805.8 407.3 L1807.5 419.3 L1809.1 414.3 L1810.6 421.3 L1812.3 425.3 L1813.6 427.3 L1814.9 423.3 L1816.3 407.3 L1818 409.3 L1820 404.3 L1822.1 409.3 L1824.3 402.3 L1826.5 405.3 L1828.7 407.3 L1830.9 415.3 L1833 423.3 L1835.2 427.3 L1836.1 396.3 L1837 414.3 L1838.5 411.3 L1840.7 409.3 L1842.9 405.3 L1844.6 397.3 L1845.9 403.3 L1848.3 401.3 L1851.1 398.3 L1852.9 395.3 L1853.8 384.3 L1854.6 367.3 L1856.4 364.3 L1857.7 365.3 L1859.9 369.3 L1862.5 371.3 L1864.7 374.3 L1866.8 379.3 L1869 376.3 L1872.3 377.3 L1874.5 373.3 L1876.7 369.3 L1878.8 371.3 L1881.7 373.3 L1883.9 377.3 L1886.5 375.3 L1889.7 374.3 L1891.9 370.3 L1894.1 370.3 L1895.6 375.3 L1898.5 377.3 L1900.6 379.3 L1902.2 375.3 L1905 376.3 L1908.3 377.3 L1911.5 377.3 L1913.7 381.3 L1915.3 387.3 L1916.6 391.3 L1919.2 393.3 L1922.5 396.3 L1925.7 399.3 L1929 402.3 L1931.2 396.3 L1933.4 399.3 L1935.5 403.3 L1938.4 400.3 L1941 404.3 L1944.3 407.3 L1947.5 407.3 L1950.8 408.3 L1953 414.3 L1954.7 418.3 L1957.3 418.3 L1960.2 417.3 L1961.7 421.3 L1963.9 424.3 L1967.2 425.3 L1970.4 424.3 L1972.6 423.3 L1975.9 425.3 L1978.1 424.3 L1978.9 418.3 L1980.2 418.3 L1981.5 424.3 L1983.5 423.3 L1985 418.3 L1987.9 417.3 L1991.1 417.8 L1993.3 419.1 L1995.5 417.8 L1997.7 420.3 L2001 422.3 L2003.8 424.3 L2006 424.3 L2007.3 418.3 L2009 424.3 L2011.9 425.3 L2015.1 425.3 L2016.9 424.3 L2018 412.3 L2019.5 417.3 L2021.7 419.3 L2024.9 420.3 L2028.2 421.3 L2031.5 421.3 L2034.7 423.3 L2036.9 423.3 L2039.1 421.3 L2042.4 421.3 L2045.7 417.3 L2048.3 416.3 L2051.1 417.3 L2053.3 417.3 L2054.8 409.3 L2056.6 407.3 L2062 407.3 L2067 407.3 L2068.3 403.3 L2069.6 402.3 L2071.4 404.3 L2074 401.3 L2075.7 398.3 L2077.5 401.3 L2079.7 400.3 L2080.5 389.3 L2081.4 369.3 L2082.3 362.3 L2083.2 369.3 L2084.5 372.3 L2085.8 371.3 L2087.1 374.3 L2088.4 379.3 L2089.7 391.3 L2091.4 399.3 L2093.6 404.3 L2096.9 409.3 L2100.2 414.3 L2103.4 415.3 L2106.7 414.3 L2110 417.3 L2113.2 419.3 L2115.4 421 L2117.6 421.3 L2119.8 422.2 L2122 424.3 L2125.2 425.3 L2130.7 425.3 L2132 421.3 L2133.3 419.3 L2134.6 423.3 L2136.8 418.3 L2138.5 424.3 L2141.2 424.3 L2143.8 421.3 L2146.4 423.3 L2149.2 420.3 L2152.1 419.3 L2153.6 423.3 L2156.9 424.3 L2159 424.3 L2159.9 408.3 L2160.8 417.3 L2162.3 423.3 L2164.5 424.3 L2167.8 424.3 L2171 425.3 L2173.2 421.3 L2174.3 407.3 L2175.2 419.3 L2176 401.3 L2176.9 417.3 L2178.2 404.3 L2179.5 399.3 L2180.8 411.3 L2182.2 397.3 L2183.5 399.3 L2184.8 414.3 L2186.3 401.3 L2187.8 396.3 L2189.1 409.3 L2190.4 397.3 L2191.7 399.3 L2193.1 413.3 L2194.4 403.3 L2195.7 419.3 L2197.2 404.3 L2198.7 399.3 L2199.6 375.3 L2200.9 374.3 L2202 399.3 L2202.9 417.3 L2204.8 424.3 L2206.6 426.3 L2208.3 419.3 L2209.6 424.3 L2211.4 421.3 L2213.1 419.3 L2214 389.3 L2214.6 368.3 L2215.7 371.3 L2216.8 399.3 L2217.9 419.3 L2219.7 413.3 L2221.4 417.3 L2223.4 413.3 L2225.5 415.3 L2227.7 414.3 L2229.3 419.3 L2230.6 404.3 L2231.9 389.3 L2232.7 399.3 L2233.6 409.3 L2235.4 407.3 L2237.1 399.3 L2238.4 392.3 L2239.3 414.3 L2240.4 393.3 L2241.2 365.3 L2242.3 379.3 L2243.6 394.3 L2245 374.3 L2246.3 389.3 L2247.6 369.3 L2248.7 394.3 L2249.8 401.3 L2251.1 379.3 L2252.4 389.3 L2253.7 371.3 L2254.5 371.3 L2255.4 393.3 L2257.2 393.3 L2270.2 393.3 L2271.1 405.3 L2272.4 387.3 L2273.7 404.3 L2275 373.3 L2276.4 372.3 L2277.2 399.3 L2278.5 403.3 L2279.8 381.3 L2281.2 404.3 L2282.5 385.3 L2283.3 405.3 L2284.6 369.3 L2285.5 407.3 L2286.4 369.3 L2287.3 369.3 L2287.9 409.3 L2289 394.3 L2300.8 394.3 L2310 394.3 L2311.9 395.4 L2313.9 394.3 L2314.8 394.3 L2315.6 395.3 L2316.5 379.3 L2316.5 391.3 L2317.3 381.3 L2317.4 379.3 L2318.2 412.3 L2318.3 379.3 L2318.9 412.3 L2320.5 411.3 L2322 395.3 L2323.5 394.3 L2324.6 413.3 L2326.4 417.3 L2328.5 394.3 L2329.6 382.3 L2330.7 399.3 L2331.8 364.3 L2333.1 363.3 L2334 399.3 L2334.6 421.3 L2335.7 389.3 L2336.6 363.3 L2337.5 369.3 L2338.6 419.3 L2340.5 415.3 L2342.3 403.3 L2343.8 399.3 L2344.9 409.3 L2346.2 419.3 L2347.5 405.3 L2348.4 417.3 L2349.7 389.3 L2350.6 371.3 L2351.2 374.3 L2352.1 417.3 L2353.2 415.3 L2354.7 407.3 L2358 406.8 L2359.9 406.5 L2361.9 406.8 L2362.6 421.3 L2364.6 420.8 L2366.7 421.3 L2368.9 422.5 L2371.1 423.3 L2373.2 425.3 L2375.4 424.2 L2377.6 423.3 L2379.8 424.3 L2382 424.4 L2384.1 423.8 L2386.3 424.5 L2388.5 423.8 L2390.7 424.3 L2392.9 424.8 L2395 425.3 L2397.2 425.3 L2399 425.3 L2400.9 425.7 L2402.7 425.8 L2405.5 427.8 L2407 424.3 L2409.2 422.3 L2411.4 424.3 L2414.2 422.3 L2416.4 421.3 L2417.1 410.3 L2418.6 411.3 L2419.2 424.3 L2420.8 421.3 L2421.6 409.3 L2424.5 409.3 L2425.1 424.3 L2427.7 423.3 L2428.8 411.3 L2430.4 419.3 L2431.2 411.3 L2432.3 411.3 L2433 424.3 L2434.7 424.7 L2436.5 424.3 L2438.7 424.3 L2440.2 410.3 L2442.1 409 L2444.1 409.7 L2446.1 409 L2448 409.7 L2449.6 413.3 L2451.7 419.3 L2453.9 424.3 L2455.7 425.3 L2457.4 417.3 L2458.3 412.3 L2459.6 415.3 L2460.5 412.3 L2461.3 425.3 L2462.6 425.3 L2463.7 417.3 L2464.8 421.3 L2466.1 408.3 L2467.4 407.8 L2468.7 409.3 L2469.8 419.3 L2470.9 424.3 L2472.5 413.3 L2475.7 412.3 L2477.9 413.3 L2478.8 417.3 L2480.1 412.3 L2482 413.3 L2482.9 426.3 L2484 424.3 L2484.4 412.3 L2485.1 413.3 L2485.8 425.3 L2487.7 424.3 L2489.9 423.3 L2491.4 424.3 L2493.2 420.3 L2496.4 421.3 L2499.7 423.3 L2501.9 422.3 L2504.1 423.3 L2507.3 421.3 L2508.9 414.3 L2510.6 410.3 L2511.9 410.3 L2513.9 413.3 L2517.2 412.3 L2518.9 410.3 L2520.6 411.3 L2523.7 409.3 L2525.9 408.6 L2536.8 408.6 L2545.1 408.6 L2547.7 412.3 L2551 415.3 L2554.2 417.3 L2557.5 418.3 L2560.8 421.3 L2564 423.3 L2566.2 424 L2568.4 423.8 L2571.7 423.3 L2573 414.3 L2573.8 413.3 L2576.5 413.3 L2577.8 424.3 L2580.4 424.3 L2583.7 424.3 L2584.5 415.3 L2585.4 412.8 L2586.5 412.8 L2587.4 424.3 L2590.2 423.3 L2593.5 423.3 L2595 415.3 L2596.1 410.3 L2598.3 409.7 L2600.4 410.3 L2602.2 415.3 L2603.9 422.3 L2605.5 423.3 L2615.3 423.3 L2624 423.3 L2625.3 421.3 L2626.2 420.3 L2627.1 423.3 L2628.4 421.3 L2629.2 410.3 L2637.1 410.3 L2645.4 410.3 L2647.5 412.3 L2650.2 416.3 L2653.4 420.3 L2656.3 422.8 L2658.1 423.4 L2660 424.3 L2662.2 424.8 L2664.3 425.3 L2669.8 425.3 L2675.2 425.3 L2676.8 417.3 L2677.9 411.3 L2683.3 411.3 L2689 411.3 L2690.7 414.3 L2692.9 419.3 L2695.5 424.3 L2696.8 424.3 L2697.7 409.3 L2698.4 407.3 L2699.2 421.3 L2700.3 427.3 L2702.1 426.3 L2704.7 422.3 L2711.2 422.3 L2718.9 422.3 L2721.3 421.3 L2721.9 410.3 L2722.6 410.3 L2723.2 421.3 L2726.5 422.3 L2728.7 422.1 L2730.8 423.3 L2733.5 424.3 L2734.8 403.3 L2735.4 401.3 L2736.3 425.3 L2737.8 424.3 L2739.4 403.3 L2740 401.3 L2740.9 426.3 L2742.2 425.3 L2743.1 410.3 L2743.9 409.3 L2744.8 410.3 L2745.7 426.3 L2747 423.3 L2748.1 409.3 L2749.4 407.3 L2750.5 408.3 L2751.8 414.3 L2753.5 419.3 L2755.3 417.3 L2756.6 412.3 L2757.4 411.3 L2762.5 411.3 L2764.5 410.5 L2766.6 411.3 L2767.9 417.3 L2769.2 423.3 L2770.1 427.3 L2771.8 424.3 L2773.4 423.3 L2775.5 423.7 L2777.7 423.3 L2779.9 422.2 L2782.1 422.8 L2783.6 421.3 L2784.5 420.3 L2785.4 423.8 L2788.6 424.3 L2791.9 424.3 L2793.2 415.3 L2794.1 408.3 L2795.4 409.3 L2797.1 412.3 L2799.5 413.3 L2802.4 412.3 L2805 412.8 L2807.2 412.3 L2808.5 408.3 L2809.6 407.3 L2811.1 410.3 L2812.8 412.3 L2815.5 412.3 L2818.1 412.3 L2819.2 419.3 L2819.8 424.3 L2822.4 424.3 L2825 424.3 L2825.9 412.3 L2826.8 411.3 L2827.7 421.3 L2828.5 412.3 L2829.8 411.8 L2830.7 424.3 L2833.3 423.8 L2835.5 424.2 L2837.7 423.3 L2839.9 422.9 L2842.1 422.3 L2845.3 423.8 L2847.5 425.3 L2849.7 426.3 L2851.4 421.3 L2852.5 413.3 L2853.4 411.8 L2859.5 411.8 L2862.3 411.8 L2863.9 411.8 L2864.6 412.3 L2865.6 415.3 L2866.5 417.3 L2867.8 421.3 L2868.4 422.3 L2870 424.3 L2870.2 425.3 L2872.1 426.3 L2873.2 420.3 L2873.9 416.3 L2875.3 415.3 L2876 402.3 L2876.7 402.3 L2877.4 415.3 L2887.9 415.3 L2899.5 415.3 L2908.3 415.3 L2910.6 417.3 L2912.5 421.3 L2913.8 424.3 L2915.7 426.3 L2918 423.8 L2919.8 423.1 L2921.5 423.3 L2923.8 424.3 L2925.6 424.2 L2927.3 422.8 L2929.6 424.3 L2931 420.3 L2932.4 419.3 L2935.4 420.3 L2937.2 419.6 L2938.9 418.8 L2941.7 417.8 L2944.7 419.3 L2947.7 419.8 L2950.1 419.3 L2950.7 416.8 L2951.4 420.3 L2954 420.3 L2955.7 421.4 L2957.5 419.3 L2959.8 418.5 L2962.1 418.8 L2963.9 417.7 L2965.6 418.3 L2967.7 416.8 L2970.2 417.8 L2972 418.1 L2973.7 418.8 L2975.5 418.3 L2977.2 420.3 L2978.9 420.4 L2980.7 419.3 L2983 418.3 L2984.7 417.9 L2986.5 418.8 L2988.2 418.5 L2990 418.8 L2991.8 416.3 L2992.8 418.8 L2995.8 419.3 L2997.5 419 L2999.3 419.3 L3001 419.7 L3002.7 419.8 L3005.8 420.3 L3006.4 413.3 L3007.4 413.3 L3008.1 421.3 L3010.9 422.3 L3013.2 421.3 L3016 422.8 L3019 422.3 L3020.7 422.2 L3022.5 423.3 L3025.2 424.8 L3027.6 425.3 L3028.7 412.3 L3029.7 411.3 L3030.6 409.3 L3031.5 409.3 L3032.2 423.3 L3034.3 422.5 L3036.4 423.3 L3068.9 423.5 L3115.3 423.7 L3161.7 423.9 L3189.6 424.1 L3203.5 424.5 L3231.3 424.8 L3254.6 425.1 L3301 425.1 L3347.4 425.1 L3373.4 425.1 L3374.5 422.3 L3375.2 421.3 L3376.2 425.3 L3378.7 425.8 L3385.7 425.8 L3387.3 424.3 L3388.2 421.3 L3389.2 413.3 L3390.1 419.3 L3391 412.3 L3391.9 424.3 L3393.3 425.8 L3396.6 425.8 L3398 415.3 L3398.9 413.3 L3404.2 413.3 L3405.4 421.3 L3406.1 425.3 L3407.3 425.8 L3408.7 425.3 L3410 423.3 L3411.4 414.3 L3412.8 412.3 L3419.3 412.3 L3424.4 412.3 L3426.3 417.3 L3428.2 423.3 L3430 425.3 L3431.6 427.3 L3432.8 411.3 L3433.7 408.3 L3434.7 421.3 L3435.6 411.3 L3436.5 410.3 L3437.4 424.3 L3438.4 411.3 L3439.3 411.3 L3440 411.3" fill="none" stroke="#3391ff" stroke-width="2.2" stroke-linejoin="round"/>
<rect x="112" y="429" width="3328" height="1" fill="#2f74d0"/>
<g fill="#445b96" shape-rendering="crispEdges">
<path d="M112 430h3328v32h-3328z"/>
<path d="M113 464h14v32h-14zM129 464h62v32h-62zM198 464h63v32h-63zM268 464h2136v32h-2136zM2407 464h295v32h-295zM2704 464h40v32h-40zM2747 464h21v32h-21zM2771 464h660v32h-660zM3434 464h4v32h-4z"/>
<path d="M113 498h6v32h-6zM121 498h6v32h-6zM129 498h3v32h-3zM137 498h54v32h-54zM198 498h63v32h-63zM268 498h11v32h-11zM282 498h90v32h-90zM378 498h47v32h-47zM427 498h19v32h-19zM455 498h173v32h-173zM630 498h27v32h-27zM667 498h1146v32h-1146zM1815 498h18v32h-18zM1837 498h177v32h-177zM2017 498h155v32h-155zM2174 498h3v32h-3zM2178 498h27v32h-27zM2207 498h123v32h-123zM2332 498h3v32h-3zM2337 498h3v32h-3zM2342 498h5v32h-5zM2348 498h12v32h-12zM2362 498h8v32h-8zM2373 498h30v32h-30zM2407 498h53v32h-53zM2462 498h19v32h-19zM2483 498h217v32h-217zM2704 498h40v32h-40zM2747 498h21v32h-21zM2771 498h18v32h-18zM2792 498h29v32h-29zM2822 498h3v32h-3zM2827 498h20v32h-20zM2850 498h20v32h-20zM2873 498h43v32h-43zM2918 498h7v32h-7zM2928 498h456v32h-456zM3387 498h3v32h-3zM3392 498h11v32h-11zM3408 498h18v32h-18zM3428 498h10v32h-10z"/>
<path d="M113 532h6v32h-6zM121 532h6v32h-6zM129 532h3v32h-3zM137 532h54v32h-54zM198 532h63v32h-63zM268 532h11v32h-11zM282 532h90v32h-90zM378 532h47v32h-47zM427 532h19v32h-19zM459 532h65v32h-65zM526 532h99v32h-99zM630 532h27v32h-27zM667 532h1146v32h-1146zM1815 532h18v32h-18zM1837 532h177v32h-177zM2017 532h155v32h-155zM2174 532h3v32h-3zM2178 532h27v32h-27zM2207 532h123v32h-123zM2332 532h3v32h-3zM2337 532h3v32h-3zM2342 532h5v32h-5zM2348 532h12v32h-12zM2362 532h8v32h-8zM2373 532h30v32h-30zM2407 532h2v32h-2zM2412 532h48v32h-48zM2462 532h19v32h-19zM2485 532h213v32h-213zM2704 532h33v32h-33zM2747 532h21v32h-21zM2771 532h18v32h-18zM2792 532h29v32h-29zM2822 532h3v32h-3zM2827 532h20v32h-20zM2850 532h20v32h-20zM2873 532h43v32h-43zM2918 532h7v32h-7zM2928 532h456v32h-456zM3387 532h3v32h-3zM3392 532h11v32h-11zM3408 532h18v32h-18zM3428 532h10v32h-10z"/>
<path d="M113 566h6v32h-6zM121 566h6v32h-6zM129 566h3v32h-3zM137 566h54v32h-54zM198 566h63v32h-63zM268 566h5v32h-5zM274 566h3v32h-3zM282 566h22v32h-22zM307 566h63v32h-63zM379 566h4v32h-4zM384 566h16v32h-16zM402 566h22v32h-22zM428 566h17v32h-17zM459 566h65v32h-65zM526 566h99v32h-99zM630 566h27v32h-27zM667 566h1092v32h-1092zM1762 566h50v32h-50zM1815 566h18v32h-18zM1837 566h126v32h-126zM1964 566h11v32h-11zM1977 566h29v32h-29zM2008 566h4v32h-4zM2017 566h109v32h-109zM2131 566h9v32h-9zM2148 566h15v32h-15zM2178 566h27v32h-27zM2218 566h112v32h-112zM2207 566h3v32h-3zM2212 566h4v32h-4zM2332 566h6v32h-6zM2340 566h7v32h-7zM2348 566h12v32h-12zM2362 566h8v32h-8zM2373 566h30v32h-30zM2407 566h2v32h-2zM2412 566h43v32h-43zM2457 566h3v32h-3zM2462 566h6v32h-6zM2470 566h10v32h-10zM2485 566h3v32h-3zM2490 566h182v32h-182zM2673 566h3v32h-3zM2677 566h18v32h-18zM2705 566h15v32h-15zM2722 566h13v32h-13zM2747 566h21v32h-21zM2775 566h2v32h-2zM2783 566h2v32h-2zM2793 566h28v32h-28zM2828 566h9v32h-9zM2839 566h8v32h-8zM2852 566h18v32h-18zM2873 566h42v32h-42zM2918 566h7v32h-7zM2932 566h95v32h-95zM3032 566h324v32h-324zM3359 566h14v32h-14zM3388 566h2v32h-2zM3399 566h4v32h-4zM3408 566h18v32h-18zM3432 566h6v32h-6zM2830 566h2v32h-2z"/>
<path d="M113 600h6v32h-6zM121 600h6v32h-6zM129 600h3v32h-3zM137 600h49v32h-49zM198 600h63v32h-63zM268 600h3v32h-3zM273 600h3v32h-3zM282 600h22v32h-22zM307 600h24v32h-24zM334 600h33v32h-33zM379 600h3v32h-3zM384 600h3v32h-3zM391 600h8v32h-8zM403 600h9v32h-9zM414 600h8v32h-8zM427 600h19v32h-19zM459 600h63v32h-63zM524 600h2v32h-2zM529 600h96v32h-96zM630 600h2v32h-2zM635 600h2v32h-2zM639 600h8v32h-8zM649 600h8v32h-8zM667 600h1067v32h-1067zM1737 600h20v32h-20zM1762 600h49v32h-49zM1815 600h17v32h-17zM1837 600h126v32h-126zM1964 600h6v32h-6zM1972 600h3v32h-3zM1977 600h5v32h-5zM1984 600h16v32h-16zM2002 600h3v32h-3zM2007 600h3v32h-3zM2017 600h16v32h-16zM2035 600h3v32h-3zM2040 600h3v32h-3zM2045 600h76v32h-76zM2132 600h3v32h-3zM2136 600h3v32h-3zM2143 600h3v32h-3zM2148 600h3v32h-3zM2153 600h3v32h-3zM2158 600h4v32h-4zM2178 600h25v32h-25zM2218 600h112v32h-112zM2207 600h3v32h-3zM2212 600h4v32h-4zM2334 600h3v32h-3zM2342 600h2v32h-2zM2345 600h4v32h-4zM2351 600h2v32h-2zM2355 600h6v32h-6zM2362 600h4v32h-4zM2368 600h3v32h-3zM2373 600h5v32h-5zM2380 600h7v32h-7zM2388 600h4v32h-4zM2436 600h16v32h-16zM2457 600h3v32h-3zM2462 600h6v32h-6zM2471 600h9v32h-9zM2492 600h2v32h-2zM2496 600h3v32h-3zM2501 600h2v32h-2zM2504 600h3v32h-3zM2508 600h64v32h-64zM2573 600h3v32h-3zM2585 600h38v32h-38zM2625 600h32v32h-32zM2658 600h3v32h-3zM2677 600h18v32h-18zM2705 600h15v32h-15zM2722 600h13v32h-13zM2747 600h21v32h-21zM2407 600h2v32h-2zM2416 600h3v32h-3zM2425 600h3v32h-3zM2775 600h2v32h-2zM2783 600h2v32h-2zM2793 600h28v32h-28zM2828 600h9v32h-9zM2839 600h8v32h-8zM2852 600h18v32h-18zM2873 600h40v32h-40zM2918 600h3v32h-3zM2923 600h2v32h-2zM2932 600h76v32h-76zM3010 600h2v32h-2zM3014 600h3v32h-3zM3019 600h3v32h-3zM3032 600h21v32h-21zM3055 600h2v32h-2zM3059 600h34v32h-34zM3095 600h53v32h-53zM3151 600h83v32h-83zM3388 600h2v32h-2zM3399 600h4v32h-4zM3408 600h18v32h-18zM3432 600h6v32h-6zM2830 600h2v32h-2z"/>
<path d="M114 634h5v32h-5zM120 634h7v32h-7zM129 634h4v32h-4zM135 634h2v32h-2zM141 634h15v32h-15zM157 634h3v32h-3zM162 634h4v32h-4zM169 634h11v32h-11zM182 634h4v32h-4zM195 634h7v32h-7zM205 634h12v32h-12zM223 634h3v32h-3zM228 634h31v32h-31zM268 634h5v32h-5zM275 634h3v32h-3zM282 634h23v32h-23zM307 634h11v32h-11zM321 634h3v32h-3zM326 634h4v32h-4zM335 634h32v32h-32zM379 634h3v32h-3zM384 634h4v32h-4zM390 634h3v32h-3zM395 634h4v32h-4zM403 634h11v32h-11zM415 634h4v32h-4zM422 634h12v32h-12zM436 634h9v32h-9zM459 634h63v32h-63zM529 634h96v32h-96zM630 634h2v32h-2zM635 634h2v32h-2zM640 634h5v32h-5zM672 634h1061v32h-1061zM1737 634h17v32h-17zM1764 634h13v32h-13zM1779 634h30v32h-30zM1815 634h14v32h-14zM1837 634h124v32h-124zM1979 634h3v32h-3zM1985 634h14v32h-14zM2018 634h9v32h-9zM2029 634h4v32h-4zM2038 634h4v32h-4zM2045 634h74v32h-74zM2132 634h2v32h-2zM2149 634h2v32h-2zM2154 634h2v32h-2zM2178 634h12v32h-12zM2192 634h3v32h-3zM2197 634h3v32h-3zM2218 634h112v32h-112zM2207 634h3v32h-3zM2212 634h4v32h-4zM2334 634h3v32h-3zM2342 634h2v32h-2zM2345 634h4v32h-4zM2351 634h2v32h-2zM2355 634h6v32h-6zM2362 634h4v32h-4zM2368 634h3v32h-3zM2376 634h2v32h-2zM2380 634h3v32h-3zM2413 634h5v32h-5zM2422 634h6v32h-6zM2438 634h14v32h-14zM2457 634h3v32h-3zM2462 634h6v32h-6zM2471 634h9v32h-9zM2494 634h3v32h-3zM2507 634h59v32h-59zM2573 634h3v32h-3zM2578 634h2v32h-2zM2585 634h8v32h-8zM2594 634h9v32h-9zM2628 634h27v32h-27zM2677 634h18v32h-18zM2705 634h7v32h-7zM2722 634h6v32h-6zM2747 634h21v32h-21zM2793 634h24v32h-24zM2828 634h4v32h-4zM2840 634h3v32h-3zM2852 634h13v32h-13zM2873 634h40v32h-40zM2918 634h2v32h-2zM2932 634h76v32h-76zM3010 634h2v32h-2zM3014 634h3v32h-3zM2830 634h2v32h-2zM3388 634h2v32h-2zM3399 634h4v32h-4zM3408 634h18v32h-18zM3432 634h6v32h-6z"/>
<path d="M114 668h5v32h-5zM120 668h7v32h-7zM129 668h4v32h-4zM135 668h2v32h-2zM141 668h15v32h-15zM157 668h3v32h-3zM162 668h4v32h-4zM169 668h11v32h-11zM182 668h4v32h-4zM195 668h2v32h-2zM199 668h4v32h-4zM205 668h12v32h-12zM228 668h26v32h-26zM268 668h5v32h-5zM275 668h3v32h-3zM282 668h23v32h-23zM307 668h11v32h-11zM321 668h3v32h-3zM326 668h3v32h-3zM337 668h26v32h-26zM384 668h4v32h-4zM390 668h3v32h-3zM395 668h4v32h-4zM403 668h4v32h-4zM410 668h4v32h-4zM415 668h4v32h-4zM422 668h3v32h-3zM427 668h7v32h-7zM436 668h7v32h-7zM459 668h62v32h-62zM529 668h96v32h-96zM630 668h2v32h-2zM640 668h4v32h-4zM672 668h1051v32h-1051zM1726 668h5v32h-5zM1738 668h16v32h-16zM1764 668h13v32h-13zM1779 668h30v32h-30zM1815 668h14v32h-14zM1837 668h124v32h-124zM1979 668h3v32h-3zM1985 668h13v32h-13zM2001 668h2v32h-2zM2018 668h9v32h-9zM2029 668h4v32h-4zM2038 668h4v32h-4zM2045 668h73v32h-73zM2149 668h2v32h-2zM2178 668h12v32h-12zM2192 668h3v32h-3zM2197 668h3v32h-3zM2218 668h111v32h-111zM2207 668h3v32h-3zM2212 668h4v32h-4zM2334 668h3v32h-3zM2342 668h2v32h-2zM2345 668h4v32h-4zM2351 668h2v32h-2zM2355 668h6v32h-6zM2362 668h9v32h-9zM2420 668h4v32h-4zM2439 668h11v32h-11zM2457 668h3v32h-3zM2466 668h3v32h-3zM2471 668h9v32h-9zM2509 668h52v32h-52zM2574 668h2v32h-2zM2594 668h7v32h-7zM2589 668h4v32h-4zM2629 668h24v32h-24zM2677 668h16v32h-16zM2705 668h5v32h-5zM2722 668h5v32h-5zM2747 668h21v32h-21zM2793 668h24v32h-24zM2830 668h2v32h-2zM2840 668h2v32h-2zM2852 668h13v32h-13zM2874 668h39v32h-39zM2936 668h2v32h-2zM2943 668h3v32h-3zM2948 668h2v32h-2zM2952 668h3v32h-3zM2957 668h49v32h-49zM3008 668h2v32h-2zM3012 668h2v32h-2zM3016 668h4v32h-4zM3388 668h2v32h-2zM3399 668h4v32h-4zM3408 668h18v32h-18zM3432 668h6v32h-6z"/>
<path d="M114 702h5v32h-5zM120 702h7v32h-7zM129 702h4v32h-4zM136 702h3v32h-3zM141 702h5v32h-5zM148 702h7v32h-7zM157 702h3v32h-3zM162 702h4v32h-4zM170 702h10v32h-10zM182 702h4v32h-4zM205 702h12v32h-12zM228 702h26v32h-26zM268 702h5v32h-5zM275 702h3v32h-3zM285 702h14v32h-14zM302 702h3v32h-3zM307 702h6v32h-6zM315 702h3v32h-3zM321 702h3v32h-3zM327 702h2v32h-2zM337 702h25v32h-25zM384 702h4v32h-4zM390 702h3v32h-3zM395 702h4v32h-4zM403 702h4v32h-4zM410 702h4v32h-4zM415 702h4v32h-4zM422 702h3v32h-3zM427 702h7v32h-7zM436 702h7v32h-7zM459 702h62v32h-62zM529 702h94v32h-94zM630 702h2v32h-2zM639 702h3v32h-3zM678 702h1045v32h-1045zM673 702h2v32h-2zM1726 702h5v32h-5zM1738 702h16v32h-16zM1766 702h9v32h-9zM1779 702h26v32h-26zM1807 702h2v32h-2zM1817 702h11v32h-11zM1837 702h123v32h-123zM1986 702h12v32h-12zM2018 702h7v32h-7zM2026 702h2v32h-2zM2029 702h4v32h-4zM2038 702h4v32h-4zM2045 702h69v32h-69zM2149 702h2v32h-2zM2178 702h12v32h-12zM2192 702h3v32h-3zM2197 702h3v32h-3zM2218 702h111v32h-111zM2207 702h3v32h-3zM2212 702h4v32h-4zM2334 702h3v32h-3zM2342 702h2v32h-2zM2345 702h4v32h-4zM2351 702h2v32h-2zM2355 702h6v32h-6zM2362 702h6v32h-6zM2420 702h4v32h-4zM2439 702h11v32h-11zM2457 702h3v32h-3zM2466 702h3v32h-3zM2471 702h9v32h-9zM2509 702h52v32h-52zM2574 702h2v32h-2zM2594 702h7v32h-7zM2589 702h4v32h-4zM2629 702h23v32h-23zM2677 702h16v32h-16zM2724 702h2v32h-2zM2748 702h5v32h-5zM2755 702h13v32h-13zM2793 702h24v32h-24zM2852 702h13v32h-13zM2874 702h39v32h-39zM2936 702h2v32h-2zM2940 702h3v32h-3zM2945 702h3v32h-3zM2950 702h4v32h-4zM2956 702h4v32h-4zM2962 702h2v32h-2zM2966 702h14v32h-14zM2982 702h23v32h-23zM3007 702h2v32h-2zM3388 702h2v32h-2zM3399 702h4v32h-4zM3408 702h18v32h-18zM3432 702h6v32h-6z"/>
<path d="M114 736h5v32h-5zM121 736h3v32h-3zM129 736h3v32h-3zM141 736h5v32h-5zM148 736h7v32h-7zM157 736h3v32h-3zM162 736h4v32h-4zM170 736h10v32h-10zM182 736h3v32h-3zM205 736h11v32h-11zM228 736h26v32h-26zM268 736h5v32h-5zM275 736h3v32h-3zM285 736h14v32h-14zM302 736h2v32h-2zM309 736h4v32h-4zM316 736h3v32h-3zM337 736h9v32h-9zM348 736h4v32h-4zM353 736h8v32h-8zM384 736h4v32h-4zM390 736h3v32h-3zM395 736h4v32h-4zM403 736h4v32h-4zM410 736h4v32h-4zM427 736h7v32h-7zM436 736h5v32h-5zM459 736h62v32h-62zM529 736h93v32h-93zM630 736h2v32h-2zM642 736h3v32h-3zM678 736h1045v32h-1045zM673 736h2v32h-2zM1726 736h5v32h-5zM1738 736h16v32h-16zM1779 736h26v32h-26zM1817 736h11v32h-11zM1838 736h121v32h-121zM1987 736h8v32h-8zM2019 736h3v32h-3zM2045 736h67v32h-67zM2178 736h12v32h-12zM2192 736h3v32h-3zM2197 736h3v32h-3zM2218 736h109v32h-109zM2207 736h3v32h-3zM2212 736h4v32h-4zM2333 736h4v32h-4zM2342 736h2v32h-2zM2345 736h4v32h-4zM2351 736h2v32h-2zM2355 736h3v32h-3zM2420 736h4v32h-4zM2439 736h11v32h-11zM2457 736h3v32h-3zM2466 736h3v32h-3zM2471 736h9v32h-9zM2509 736h51v32h-51zM2574 736h2v32h-2zM2594 736h7v32h-7zM2589 736h4v32h-4zM2629 736h23v32h-23zM2677 736h13v32h-13zM2748 736h2v32h-2zM2757 736h10v32h-10zM2793 736h24v32h-24zM2852 736h13v32h-13zM2874 736h38v32h-38zM2959 736h2v32h-2zM2966 736h6v32h-6zM2982 736h3v32h-3zM2988 736h2v32h-2zM2992 736h8v32h-8zM3399 736h4v32h-4zM3408 736h18v32h-18zM3432 736h6v32h-6z"/>
<path d="M114 770h2v32h-2zM121 770h3v32h-3zM129 770h3v32h-3zM141 770h4v32h-4zM149 770h6v32h-6zM157 770h3v32h-3zM163 770h3v32h-3zM172 770h8v32h-8zM182 770h3v32h-3zM205 770h11v32h-11zM228 770h26v32h-26zM268 770h5v32h-5zM275 770h3v32h-3zM285 770h14v32h-14zM302 770h2v32h-2zM309 770h4v32h-4zM316 770h3v32h-3zM337 770h9v32h-9zM348 770h4v32h-4zM353 770h4v32h-4zM384 770h4v32h-4zM390 770h3v32h-3zM396 770h3v32h-3zM403 770h4v32h-4zM410 770h2v32h-2zM427 770h6v32h-6zM436 770h4v32h-4zM459 770h62v32h-62zM529 770h93v32h-93zM630 770h2v32h-2zM642 770h3v32h-3zM678 770h1045v32h-1045zM673 770h2v32h-2zM1726 770h5v32h-5zM1738 770h16v32h-16zM1779 770h26v32h-26zM1817 770h11v32h-11zM1839 770h120v32h-120zM1987 770h7v32h-7zM2019 770h3v32h-3zM2045 770h66v32h-66zM2178 770h12v32h-12zM2192 770h3v32h-3zM2197 770h3v32h-3zM2219 770h108v32h-108zM2207 770h3v32h-3zM2212 770h4v32h-4zM2333 770h4v32h-4zM2342 770h2v32h-2zM2345 770h4v32h-4zM2351 770h2v32h-2zM2355 770h3v32h-3zM2420 770h4v32h-4zM2439 770h11v32h-11zM2457 770h3v32h-3zM2466 770h3v32h-3zM2471 770h9v32h-9zM2509 770h50v32h-50zM2574 770h2v32h-2zM2594 770h7v32h-7zM2629 770h21v32h-21zM2677 770h13v32h-13zM2748 770h2v32h-2zM2757 770h10v32h-10zM2793 770h24v32h-24zM2852 770h13v32h-13zM2874 770h37v32h-37zM2967 770h5v32h-5zM2983 770h2v32h-2zM3399 770h4v32h-4zM3408 770h18v32h-18zM3432 770h6v32h-6z"/>
<path d="M114 804h4v32h-4zM126 804h2v32h-2zM129 804h4v32h-4zM142 804h3v32h-3zM157 804h3v32h-3zM163 804h3v32h-3zM175 804h4v32h-4zM184 804h2v32h-2zM205 804h10v32h-10zM227 804h24v32h-24zM269 804h3v32h-3zM285 804h11v32h-11zM301 804h3v32h-3zM309 804h4v32h-4zM337 804h9v32h-9zM349 804h3v32h-3zM354 804h4v32h-4zM397 804h3v32h-3zM402 804h3v32h-3zM407 804h4v32h-4zM427 804h4v32h-4zM434 804h2v32h-2zM437 804h3v32h-3zM444 804h2v32h-2zM448 804h2v32h-2zM459 804h60v32h-60zM529 804h92v32h-92zM630 804h2v32h-2zM642 804h3v32h-3zM678 804h1045v32h-1045zM673 804h2v32h-2zM1726 804h4v32h-4zM1738 804h15v32h-15zM1779 804h26v32h-26zM1817 804h11v32h-11zM1839 804h119v32h-119zM1987 804h2v32h-2zM1991 804h3v32h-3zM2047 804h2v32h-2zM2054 804h55v32h-55zM2178 804h12v32h-12zM2192 804h3v32h-3zM2197 804h3v32h-3zM2231 804h93v32h-93zM2207 804h3v32h-3zM2212 804h4v32h-4zM2219 804h4v32h-4zM2225 804h3v32h-3zM2333 804h4v32h-4zM2342 804h2v32h-2zM2345 804h4v32h-4zM2351 804h2v32h-2zM2355 804h3v32h-3zM2420 804h4v32h-4zM2439 804h11v32h-11zM2457 804h3v32h-3zM2466 804h3v32h-3zM2471 804h9v32h-9zM2509 804h46v32h-46zM2557 804h2v32h-2zM2574 804h2v32h-2zM2594 804h7v32h-7zM2629 804h21v32h-21zM2677 804h13v32h-13zM2748 804h2v32h-2zM2757 804h10v32h-10zM2793 804h24v32h-24zM2852 804h13v32h-13zM2874 804h37v32h-37zM3399 804h4v32h-4zM3408 804h18v32h-18zM3432 804h6v32h-6z"/>
<path d="M114 838h4v32h-4zM126 838h2v32h-2zM129 838h4v32h-4zM142 838h3v32h-3zM157 838h4v32h-4zM176 838h3v32h-3zM184 838h2v32h-2zM205 838h10v32h-10zM227 838h21v32h-21zM269 838h3v32h-3zM285 838h11v32h-11zM301 838h3v32h-3zM309 838h4v32h-4zM337 838h7v32h-7zM349 838h3v32h-3zM354 838h4v32h-4zM402 838h3v32h-3zM407 838h4v32h-4zM427 838h4v32h-4zM434 838h2v32h-2zM437 838h3v32h-3zM461 838h57v32h-57zM531 838h88v32h-88zM630 838h2v32h-2zM642 838h3v32h-3zM678 838h1045v32h-1045zM673 838h2v32h-2zM1726 838h3v32h-3zM1737 838h16v32h-16zM1779 838h26v32h-26zM1817 838h4v32h-4zM1822 838h3v32h-3zM1839 838h113v32h-113zM2047 838h2v32h-2zM2054 838h55v32h-55zM2178 838h12v32h-12zM2192 838h3v32h-3zM2197 838h3v32h-3zM2231 838h93v32h-93zM2207 838h3v32h-3zM2212 838h4v32h-4zM2219 838h4v32h-4zM2225 838h3v32h-3zM2333 838h4v32h-4zM2342 838h2v32h-2zM2345 838h4v32h-4zM2351 838h2v32h-2zM2355 838h3v32h-3zM2420 838h4v32h-4zM2439 838h7v32h-7zM2457 838h3v32h-3zM2466 838h3v32h-3zM2471 838h9v32h-9zM2509 838h44v32h-44zM2574 838h2v32h-2zM2594 838h7v32h-7zM2629 838h20v32h-20zM2677 838h13v32h-13zM2748 838h2v32h-2zM2757 838h10v32h-10zM2793 838h24v32h-24zM2852 838h13v32h-13zM2874 838h36v32h-36zM3399 838h4v32h-4zM3408 838h15v32h-15zM3432 838h6v32h-6z"/>
<path d="M114 872h4v32h-4zM126 872h2v32h-2zM129 872h4v32h-4zM157 872h4v32h-4zM176 872h4v32h-4zM184 872h2v32h-2zM206 872h7v32h-7zM227 872h21v32h-21zM269 872h3v32h-3zM285 872h10v32h-10zM338 872h7v32h-7zM349 872h3v32h-3zM354 872h4v32h-4zM402 872h3v32h-3zM407 872h4v32h-4zM427 872h3v32h-3zM437 872h3v32h-3zM461 872h57v32h-57zM531 872h88v32h-88zM630 872h2v32h-2zM678 872h1045v32h-1045zM673 872h2v32h-2zM1726 872h3v32h-3zM1737 872h15v32h-15zM1780 872h25v32h-25zM1817 872h4v32h-4zM1822 872h3v32h-3zM1839 872h113v32h-113zM2055 872h48v32h-48zM2105 872h3v32h-3zM2178 872h12v32h-12zM2192 872h3v32h-3zM2197 872h3v32h-3zM2231 872h93v32h-93zM2207 872h3v32h-3zM2212 872h4v32h-4zM2219 872h4v32h-4zM2225 872h3v32h-3zM2333 872h4v32h-4zM2342 872h2v32h-2zM2345 872h4v32h-4zM2351 872h2v32h-2zM2355 872h3v32h-3zM2420 872h4v32h-4zM2439 872h7v32h-7zM2457 872h3v32h-3zM2466 872h3v32h-3zM2471 872h9v32h-9zM2510 872h41v32h-41zM2574 872h2v32h-2zM2594 872h7v32h-7zM2629 872h19v32h-19zM2677 872h12v32h-12zM2748 872h2v32h-2zM2757 872h10v32h-10zM2793 872h24v32h-24zM2852 872h13v32h-13zM2875 872h33v32h-33zM3399 872h4v32h-4zM3408 872h15v32h-15zM3432 872h6v32h-6z"/>
<path d="M126 906h2v32h-2zM177 906h3v32h-3zM184 906h2v32h-2zM206 906h8v32h-8zM227 906h17v32h-17zM269 906h3v32h-3zM285 906h9v32h-9zM338 906h4v32h-4zM349 906h3v32h-3zM354 906h3v32h-3zM402 906h3v32h-3zM407 906h4v32h-4zM427 906h3v32h-3zM462 906h55v32h-55zM532 906h87v32h-87zM685 906h1038v32h-1038zM679 906h3v32h-3zM1726 906h3v32h-3zM1737 906h15v32h-15zM1781 906h24v32h-24zM1817 906h4v32h-4zM1822 906h3v32h-3zM1839 906h113v32h-113zM2056 906h43v32h-43zM2107 906h2v32h-2zM2180 906h2v32h-2zM2187 906h4v32h-4zM2199 906h2v32h-2zM2239 906h84v32h-84zM2214 906h3v32h-3zM2231 906h5v32h-5zM2328 906h3v32h-3zM2335 906h2v32h-2zM2354 906h5v32h-5zM2420 906h4v32h-4zM2439 906h7v32h-7zM2457 906h3v32h-3zM2466 906h2v32h-2zM2471 906h9v32h-9zM2510 906h41v32h-41zM2574 906h2v32h-2zM2594 906h7v32h-7zM2629 906h19v32h-19zM2677 906h13v32h-13zM2748 906h2v32h-2zM2758 906h7v32h-7zM2793 906h9v32h-9zM2804 906h13v32h-13zM2852 906h13v32h-13zM2876 906h30v32h-30zM3399 906h4v32h-4zM3408 906h15v32h-15zM3432 906h6v32h-6z"/>
<path d="M126 940h2v32h-2zM177 940h3v32h-3zM184 940h2v32h-2zM206 940h7v32h-7zM227 940h3v32h-3zM231 940h11v32h-11zM269 940h3v32h-3zM285 940h9v32h-9zM338 940h4v32h-4zM349 940h3v32h-3zM354 940h3v32h-3zM402 940h3v32h-3zM407 940h4v32h-4zM427 940h3v32h-3zM462 940h55v32h-55zM532 940h87v32h-87zM679 940h3v32h-3zM685 940h85v32h-85zM773 940h942v32h-942zM1718 940h4v32h-4zM1737 940h15v32h-15zM1781 940h24v32h-24zM1817 940h4v32h-4zM1822 940h3v32h-3zM1839 940h113v32h-113zM2056 940h43v32h-43zM2180 940h2v32h-2zM2187 940h4v32h-4zM2199 940h2v32h-2zM2239 940h78v32h-78zM2214 940h3v32h-3zM2231 940h5v32h-5zM2318 940h5v32h-5zM2328 940h3v32h-3zM2335 940h2v32h-2zM2354 940h5v32h-5zM2420 940h4v32h-4zM2439 940h7v32h-7zM2457 940h3v32h-3zM2466 940h2v32h-2zM2471 940h9v32h-9zM2510 940h38v32h-38zM2574 940h2v32h-2zM2594 940h7v32h-7zM2629 940h19v32h-19zM2677 940h13v32h-13zM2748 940h2v32h-2zM2758 940h7v32h-7zM2793 940h9v32h-9zM2804 940h13v32h-13zM2852 940h13v32h-13zM3399 940h4v32h-4zM3408 940h15v32h-15zM3432 940h6v32h-6z"/>
<path d="M126 974h2v32h-2zM177 974h3v32h-3zM184 974h2v32h-2zM206 974h7v32h-7zM231 974h11v32h-11zM269 974h3v32h-3zM285 974h9v32h-9zM338 974h4v32h-4zM349 974h3v32h-3zM354 974h3v32h-3zM402 974h3v32h-3zM407 974h4v32h-4zM427 974h3v32h-3zM462 974h54v32h-54zM533 974h85v32h-85zM679 974h3v32h-3zM685 974h85v32h-85zM773 974h942v32h-942zM1718 974h4v32h-4zM1737 974h15v32h-15zM1781 974h24v32h-24zM1839 974h112v32h-112zM2056 974h43v32h-43zM2180 974h2v32h-2zM2187 974h4v32h-4zM2199 974h2v32h-2zM2239 974h78v32h-78zM2214 974h3v32h-3zM2231 974h5v32h-5zM2318 974h5v32h-5zM2328 974h3v32h-3zM2335 974h2v32h-2zM2354 974h5v32h-5zM2422 974h2v32h-2zM2439 974h7v32h-7zM2457 974h3v32h-3zM2466 974h2v32h-2zM2472 974h4v32h-4zM2518 974h27v32h-27zM2510 974h5v32h-5zM2595 974h4v32h-4zM2629 974h17v32h-17zM2677 974h13v32h-13zM2748 974h2v32h-2zM2758 974h7v32h-7zM2793 974h9v32h-9zM2808 974h9v32h-9zM2852 974h9v32h-9zM3399 974h4v32h-4zM3408 974h15v32h-15zM3432 974h6v32h-6z"/>
<path d="M126 1008h2v32h-2zM177 1008h3v32h-3zM184 1008h2v32h-2zM206 1008h5v32h-5zM231 1008h10v32h-10zM286 1008h8v32h-8zM338 1008h4v32h-4zM349 1008h3v32h-3zM354 1008h3v32h-3zM402 1008h3v32h-3zM407 1008h4v32h-4zM427 1008h3v32h-3zM462 1008h54v32h-54zM533 1008h85v32h-85zM680 1008h2v32h-2zM686 1008h3v32h-3zM691 1008h13v32h-13zM705 1008h11v32h-11zM718 1008h8v32h-8zM728 1008h11v32h-11zM741 1008h17v32h-17zM760 1008h2v32h-2zM764 1008h6v32h-6zM774 1008h111v32h-111zM888 1008h647v32h-647zM1537 1008h175v32h-175zM1719 1008h3v32h-3zM1737 1008h15v32h-15zM1781 1008h24v32h-24zM1839 1008h111v32h-111zM2056 1008h43v32h-43zM2180 1008h2v32h-2zM2187 1008h4v32h-4zM2199 1008h2v32h-2zM2239 1008h77v32h-77zM2214 1008h3v32h-3zM2231 1008h5v32h-5zM2318 1008h5v32h-5zM2328 1008h3v32h-3zM2335 1008h2v32h-2zM2354 1008h5v32h-5zM2422 1008h2v32h-2zM2439 1008h7v32h-7zM2457 1008h3v32h-3zM2466 1008h2v32h-2zM2472 1008h4v32h-4zM2519 1008h25v32h-25zM2511 1008h3v32h-3zM2595 1008h4v32h-4zM2629 1008h16v32h-16zM2677 1008h13v32h-13zM2748 1008h2v32h-2zM2758 1008h7v32h-7zM2793 1008h9v32h-9zM2808 1008h9v32h-9zM2852 1008h9v32h-9zM3411 1008h11v32h-11zM3432 1008h6v32h-6z"/>
<path d="M126 1042h2v32h-2zM177 1042h3v32h-3zM184 1042h2v32h-2zM206 1042h5v32h-5zM286 1042h8v32h-8zM338 1042h4v32h-4zM349 1042h3v32h-3zM354 1042h3v32h-3zM402 1042h3v32h-3zM407 1042h4v32h-4zM427 1042h3v32h-3zM462 1042h54v32h-54zM534 1042h81v32h-81zM680 1042h2v32h-2zM774 1042h79v32h-79zM855 1042h24v32h-24zM881 1042h3v32h-3zM888 1042h647v32h-647zM1537 1042h3v32h-3zM1542 1042h169v32h-169zM686 1042h3v32h-3zM691 1042h13v32h-13zM705 1042h10v32h-10zM718 1042h7v32h-7zM727 1042h8v32h-8zM736 1042h4v32h-4zM742 1042h4v32h-4zM748 1042h10v32h-10zM764 1042h6v32h-6zM1719 1042h3v32h-3zM1737 1042h15v32h-15zM1781 1042h24v32h-24zM1839 1042h111v32h-111zM2056 1042h40v32h-40zM2180 1042h2v32h-2zM2187 1042h4v32h-4zM2199 1042h2v32h-2zM2239 1042h77v32h-77zM2214 1042h3v32h-3zM2231 1042h5v32h-5zM2318 1042h5v32h-5zM2328 1042h3v32h-3zM2335 1042h2v32h-2zM2354 1042h5v32h-5zM2422 1042h2v32h-2zM2439 1042h7v32h-7zM2457 1042h3v32h-3zM2466 1042h2v32h-2zM2523 1042h21v32h-21zM2520 1042h2v32h-2zM2595 1042h4v32h-4zM2629 1042h15v32h-15zM2679 1042h9v32h-9zM2748 1042h2v32h-2zM2758 1042h7v32h-7zM2795 1042h3v32h-3zM2809 1042h3v32h-3zM3434 1042h3v32h-3z"/>
<path d="M177 1076h3v32h-3zM184 1076h2v32h-2zM206 1076h5v32h-5zM286 1076h8v32h-8zM338 1076h4v32h-4zM354 1076h3v32h-3zM402 1076h3v32h-3zM407 1076h4v32h-4zM427 1076h3v32h-3zM462 1076h23v32h-23zM487 1076h7v32h-7zM495 1076h20v32h-20zM534 1076h48v32h-48zM584 1076h8v32h-8zM594 1076h21v32h-21zM774 1076h79v32h-79zM855 1076h2v32h-2zM859 1076h2v32h-2zM888 1076h527v32h-527zM1418 1076h117v32h-117zM1537 1076h3v32h-3zM1541 1076h2v32h-2zM1546 1076h65v32h-65zM1613 1076h95v32h-95zM1710 1076h2v32h-2zM686 1076h3v32h-3zM691 1076h10v32h-10zM705 1076h10v32h-10zM718 1076h7v32h-7zM727 1076h8v32h-8zM736 1076h4v32h-4zM742 1076h4v32h-4zM748 1076h3v32h-3zM752 1076h6v32h-6zM764 1076h6v32h-6zM1719 1076h3v32h-3zM1738 1076h4v32h-4zM1744 1076h3v32h-3zM1781 1076h24v32h-24zM1841 1076h109v32h-109zM2056 1076h39v32h-39zM2180 1076h2v32h-2zM2187 1076h4v32h-4zM2199 1076h2v32h-2zM2239 1076h77v32h-77zM2214 1076h3v32h-3zM2231 1076h5v32h-5zM2318 1076h5v32h-5zM2328 1076h3v32h-3zM2335 1076h2v32h-2zM2354 1076h5v32h-5zM2422 1076h2v32h-2zM2439 1076h7v32h-7zM2524 1076h20v32h-20zM2596 1076h3v32h-3zM2629 1076h15v32h-15zM2748 1076h2v32h-2zM2759 1076h5v32h-5zM2809 1076h2v32h-2zM3434 1076h3v32h-3z"/>
<path d="M177 1110h3v32h-3zM184 1110h2v32h-2zM208 1110h3v32h-3zM286 1110h8v32h-8zM338 1110h4v32h-4zM354 1110h3v32h-3zM402 1110h3v32h-3zM407 1110h4v32h-4zM427 1110h3v32h-3zM462 1110h4v32h-4zM468 1110h17v32h-17zM487 1110h7v32h-7zM497 1110h15v32h-15zM535 1110h5v32h-5zM542 1110h40v32h-40zM584 1110h8v32h-8zM594 1110h17v32h-17zM774 1110h79v32h-79zM888 1110h527v32h-527zM1418 1110h117v32h-117zM1537 1110h3v32h-3zM1541 1110h2v32h-2zM1546 1110h64v32h-64zM1613 1110h66v32h-66zM1681 1110h23v32h-23zM1705 1110h3v32h-3zM686 1110h3v32h-3zM691 1110h10v32h-10zM705 1110h10v32h-10zM718 1110h7v32h-7zM728 1110h7v32h-7zM736 1110h4v32h-4zM742 1110h4v32h-4zM748 1110h6v32h-6zM768 1110h2v32h-2zM1719 1110h3v32h-3zM1738 1110h4v32h-4zM1744 1110h3v32h-3zM1781 1110h24v32h-24zM1843 1110h107v32h-107zM2057 1110h38v32h-38zM2180 1110h2v32h-2zM2187 1110h4v32h-4zM2199 1110h2v32h-2zM2214 1110h3v32h-3zM2318 1110h5v32h-5zM2328 1110h3v32h-3zM2335 1110h2v32h-2zM2354 1110h5v32h-5zM2234 1110h3v32h-3zM2240 1110h46v32h-46zM2288 1110h28v32h-28zM2422 1110h2v32h-2zM2524 1110h18v32h-18zM2596 1110h3v32h-3zM2748 1110h2v32h-2z"/>
<path d="M177 1144h3v32h-3zM184 1144h2v32h-2zM286 1144h8v32h-8zM338 1144h4v32h-4zM354 1144h3v32h-3zM402 1144h3v32h-3zM407 1144h4v32h-4zM427 1144h3v32h-3zM462 1144h5v32h-5zM469 1144h16v32h-16zM487 1144h7v32h-7zM497 1144h14v32h-14zM535 1144h5v32h-5zM542 1144h40v32h-40zM585 1144h6v32h-6zM594 1144h17v32h-17zM774 1144h79v32h-79zM888 1144h527v32h-527zM1418 1144h117v32h-117zM1537 1144h3v32h-3zM1541 1144h2v32h-2zM1546 1144h64v32h-64zM1613 1144h66v32h-66zM1681 1144h3v32h-3zM1685 1144h2v32h-2zM686 1144h3v32h-3zM691 1144h5v32h-5zM698 1144h3v32h-3zM705 1144h4v32h-4zM711 1144h4v32h-4zM719 1144h2v32h-2zM723 1144h2v32h-2zM728 1144h3v32h-3zM732 1144h3v32h-3zM736 1144h4v32h-4zM742 1144h4v32h-4zM748 1144h3v32h-3zM752 1144h2v32h-2zM768 1144h2v32h-2zM1719 1144h3v32h-3zM1738 1144h4v32h-4zM1744 1144h3v32h-3zM1782 1144h8v32h-8zM1792 1144h7v32h-7zM1801 1144h3v32h-3zM1843 1144h99v32h-99zM1943 1144h6v32h-6zM2057 1144h38v32h-38zM2180 1144h2v32h-2zM2187 1144h4v32h-4zM2199 1144h2v32h-2zM2214 1144h3v32h-3zM2318 1144h5v32h-5zM2328 1144h3v32h-3zM2335 1144h2v32h-2zM2354 1144h5v32h-5zM2234 1144h3v32h-3zM2240 1144h39v32h-39zM2280 1144h5v32h-5zM2288 1144h28v32h-28zM2748 1144h2v32h-2z"/>
<path d="M177 1178h3v32h-3zM184 1178h2v32h-2zM286 1178h8v32h-8zM338 1178h4v32h-4zM354 1178h3v32h-3zM402 1178h3v32h-3zM407 1178h4v32h-4zM427 1178h3v32h-3zM463 1178h5v32h-5zM470 1178h14v32h-14zM492 1178h3v32h-3zM498 1178h12v32h-12zM535 1178h5v32h-5zM542 1178h40v32h-40zM585 1178h6v32h-6zM594 1178h15v32h-15zM610 1178h3v32h-3zM774 1178h79v32h-79zM888 1178h306v32h-306zM1196 1178h172v32h-172zM1371 1178h39v32h-39zM1411 1178h3v32h-3zM1420 1178h115v32h-115zM1546 1178h64v32h-64zM1613 1178h66v32h-66zM686 1178h2v32h-2zM691 1178h2v32h-2zM698 1178h3v32h-3zM705 1178h2v32h-2zM711 1178h4v32h-4zM719 1178h2v32h-2zM723 1178h2v32h-2zM728 1178h3v32h-3zM732 1178h3v32h-3zM742 1178h2v32h-2zM748 1178h3v32h-3zM752 1178h2v32h-2zM768 1178h2v32h-2zM1719 1178h3v32h-3zM1738 1178h4v32h-4zM1744 1178h3v32h-3zM1782 1178h8v32h-8zM1792 1178h7v32h-7zM1801 1178h3v32h-3zM1844 1178h96v32h-96zM2057 1178h9v32h-9zM2068 1178h2v32h-2zM2072 1178h21v32h-21zM2180 1178h2v32h-2zM2187 1178h4v32h-4zM2199 1178h2v32h-2zM2214 1178h3v32h-3zM2318 1178h5v32h-5zM2328 1178h3v32h-3zM2335 1178h2v32h-2zM2354 1178h5v32h-5zM2234 1178h3v32h-3zM2240 1178h35v32h-35zM2277 1178h2v32h-2zM2288 1178h28v32h-28zM2748 1178h2v32h-2z"/>
<path d="M177 1212h3v32h-3zM184 1212h2v32h-2zM286 1212h8v32h-8zM338 1212h4v32h-4zM354 1212h3v32h-3zM402 1212h3v32h-3zM407 1212h4v32h-4zM463 1212h5v32h-5zM470 1212h11v32h-11zM484 1212h2v32h-2zM488 1212h2v32h-2zM492 1212h3v32h-3zM498 1212h12v32h-12zM542 1212h35v32h-35zM578 1212h2v32h-2zM586 1212h5v32h-5zM597 1212h11v32h-11zM774 1212h78v32h-78zM888 1212h306v32h-306zM1198 1212h55v32h-55zM1255 1212h3v32h-3zM1420 1212h76v32h-76zM1498 1212h33v32h-33zM1546 1212h64v32h-64zM1613 1212h64v32h-64zM690 1212h3v32h-3zM694 1212h3v32h-3zM702 1212h4v32h-4zM713 1212h10v32h-10zM725 1212h2v32h-2zM729 1212h3v32h-3zM733 1212h4v32h-4zM744 1212h3v32h-3zM749 1212h2v32h-2zM1719 1212h3v32h-3zM1738 1212h4v32h-4zM1744 1212h3v32h-3zM1782 1212h8v32h-8zM1792 1212h7v32h-7zM1801 1212h3v32h-3zM1844 1212h96v32h-96zM2068 1212h3v32h-3zM2072 1212h21v32h-21zM2180 1212h2v32h-2zM2187 1212h4v32h-4zM2199 1212h2v32h-2zM2214 1212h3v32h-3zM2318 1212h5v32h-5zM2328 1212h3v32h-3zM2335 1212h2v32h-2zM2234 1212h3v32h-3zM2240 1212h35v32h-35zM2277 1212h2v32h-2zM2288 1212h28v32h-28z"/>
<path d="M177 1246h3v32h-3zM184 1246h2v32h-2zM286 1246h8v32h-8zM338 1246h4v32h-4zM402 1246h3v32h-3zM407 1246h4v32h-4zM464 1246h3v32h-3zM468 1246h3v32h-3zM473 1246h7v32h-7zM482 1246h3v32h-3zM487 1246h3v32h-3zM492 1246h3v32h-3zM499 1246h10v32h-10zM542 1246h2v32h-2zM547 1246h30v32h-30zM587 1246h4v32h-4zM596 1246h2v32h-2zM600 1246h8v32h-8zM776 1246h72v32h-72zM849 1246h3v32h-3zM888 1246h306v32h-306zM1420 1246h76v32h-76zM1498 1246h23v32h-23zM1523 1246h2v32h-2zM1527 1246h3v32h-3zM1546 1246h64v32h-64zM1613 1246h64v32h-64zM690 1246h3v32h-3zM694 1246h3v32h-3zM702 1246h4v32h-4zM718 1246h5v32h-5zM725 1246h2v32h-2zM733 1246h4v32h-4zM744 1246h3v32h-3zM749 1246h2v32h-2zM1719 1246h3v32h-3zM1738 1246h4v32h-4zM1744 1246h3v32h-3zM1782 1246h8v32h-8zM1792 1246h7v32h-7zM1801 1246h3v32h-3zM1846 1246h93v32h-93zM2068 1246h3v32h-3zM2072 1246h20v32h-20zM2180 1246h2v32h-2zM2187 1246h4v32h-4zM2199 1246h2v32h-2zM2214 1246h3v32h-3zM2318 1246h5v32h-5zM2328 1246h3v32h-3zM2335 1246h2v32h-2zM2234 1246h3v32h-3zM2240 1246h35v32h-35zM2277 1246h2v32h-2zM2288 1246h28v32h-28z"/>
<path d="M177 1280h3v32h-3zM184 1280h2v32h-2zM286 1280h8v32h-8zM338 1280h4v32h-4zM402 1280h3v32h-3zM407 1280h4v32h-4zM464 1280h2v32h-2zM468 1280h3v32h-3zM474 1280h5v32h-5zM489 1280h2v32h-2zM493 1280h2v32h-2zM499 1280h10v32h-10zM542 1280h2v32h-2zM547 1280h28v32h-28zM601 1280h3v32h-3zM605 1280h3v32h-3zM775 1280h5v32h-5zM783 1280h64v32h-64zM849 1280h3v32h-3zM888 1280h295v32h-295zM1185 1280h2v32h-2zM1189 1280h3v32h-3zM1420 1280h76v32h-76zM1498 1280h23v32h-23zM1522 1280h3v32h-3zM1527 1280h3v32h-3zM1546 1280h64v32h-64zM1613 1280h64v32h-64zM694 1280h3v32h-3zM702 1280h4v32h-4zM718 1280h5v32h-5zM725 1280h2v32h-2zM733 1280h4v32h-4zM744 1280h3v32h-3zM749 1280h2v32h-2zM1719 1280h3v32h-3zM1738 1280h4v32h-4zM1744 1280h3v32h-3zM1792 1280h2v32h-2zM1796 1280h3v32h-3zM1849 1280h84v32h-84zM2070 1280h3v32h-3zM2074 1280h18v32h-18zM2180 1280h2v32h-2zM2187 1280h4v32h-4zM2199 1280h2v32h-2zM2214 1280h3v32h-3zM2318 1280h5v32h-5zM2328 1280h3v32h-3zM2335 1280h2v32h-2zM2242 1280h4v32h-4zM2248 1280h24v32h-24zM2273 1280h3v32h-3zM2288 1280h28v32h-28z"/>
<path d="M177 1314h3v32h-3zM184 1314h2v32h-2zM286 1314h8v32h-8zM338 1314h4v32h-4zM402 1314h3v32h-3zM407 1314h4v32h-4zM464 1314h2v32h-2zM468 1314h3v32h-3zM474 1314h5v32h-5zM489 1314h2v32h-2zM493 1314h2v32h-2zM499 1314h3v32h-3zM504 1314h5v32h-5zM549 1314h26v32h-26zM775 1314h5v32h-5zM784 1314h61v32h-61zM888 1314h227v32h-227zM1118 1314h65v32h-65zM1185 1314h2v32h-2zM1189 1314h3v32h-3zM1420 1314h76v32h-76zM1498 1314h22v32h-22zM1521 1314h3v32h-3zM1526 1314h3v32h-3zM1546 1314h64v32h-64zM1615 1314h61v32h-61zM702 1314h4v32h-4zM721 1314h2v32h-2zM725 1314h2v32h-2zM733 1314h4v32h-4zM744 1314h3v32h-3zM749 1314h2v32h-2zM1719 1314h3v32h-3zM1738 1314h4v32h-4zM1744 1314h3v32h-3zM1792 1314h2v32h-2zM1796 1314h3v32h-3zM1849 1314h84v32h-84zM1935 1314h3v32h-3zM2070 1314h3v32h-3zM2074 1314h5v32h-5zM2081 1314h9v32h-9zM2180 1314h2v32h-2zM2187 1314h4v32h-4zM2199 1314h2v32h-2zM2214 1314h3v32h-3zM2318 1314h5v32h-5zM2328 1314h3v32h-3zM2335 1314h2v32h-2zM2242 1314h4v32h-4zM2248 1314h24v32h-24zM2273 1314h3v32h-3zM2288 1314h28v32h-28z"/>
<path d="M177 1348h3v32h-3zM184 1348h2v32h-2zM286 1348h8v32h-8zM338 1348h4v32h-4zM402 1348h3v32h-3zM407 1348h4v32h-4zM464 1348h2v32h-2zM469 1348h2v32h-2zM474 1348h5v32h-5zM499 1348h3v32h-3zM504 1348h5v32h-5zM550 1348h22v32h-22zM574 1348h2v32h-2zM775 1348h4v32h-4zM782 1348h5v32h-5zM790 1348h55v32h-55zM888 1348h216v32h-216zM1106 1348h2v32h-2zM1110 1348h5v32h-5zM1188 1348h3v32h-3zM1421 1348h73v32h-73zM1496 1348h5v32h-5zM1505 1348h3v32h-3zM1511 1348h5v32h-5zM1546 1348h64v32h-64zM1615 1348h2v32h-2zM1621 1348h55v32h-55zM702 1348h4v32h-4zM721 1348h2v32h-2zM744 1348h3v32h-3zM749 1348h2v32h-2zM1719 1348h3v32h-3zM1738 1348h4v32h-4zM1744 1348h3v32h-3zM1792 1348h2v32h-2zM1796 1348h3v32h-3zM1850 1348h83v32h-83zM1935 1348h3v32h-3zM2075 1348h4v32h-4zM2081 1348h9v32h-9zM2180 1348h2v32h-2zM2187 1348h4v32h-4zM2199 1348h2v32h-2zM2214 1348h3v32h-3zM2318 1348h5v32h-5zM2328 1348h3v32h-3zM2335 1348h2v32h-2zM2242 1348h4v32h-4zM2248 1348h24v32h-24zM2273 1348h3v32h-3zM2288 1348h28v32h-28z"/>
<path d="M184 1382h2v32h-2zM286 1382h8v32h-8zM339 1382h2v32h-2zM474 1382h4v32h-4zM492 1382h2v32h-2zM550 1382h22v32h-22zM600 1382h2v32h-2zM604 1382h3v32h-3zM698 1382h2v32h-2zM707 1382h3v32h-3zM729 1382h4v32h-4zM736 1382h3v32h-3zM776 1382h3v32h-3zM786 1382h3v32h-3zM790 1382h52v32h-52zM844 1382h3v32h-3zM889 1382h11v32h-11zM888 1382h12v32h-12zM1113 1382h2v32h-2zM1422 1382h48v32h-48zM1473 1382h16v32h-16zM1491 1382h4v32h-4zM1498 1382h3v32h-3zM1502 1382h3v32h-3zM1511 1382h3v32h-3zM1546 1382h62v32h-62zM1615 1382h2v32h-2zM1622 1382h53v32h-53zM1793 1382h6v32h-6zM1849 1382h79v32h-79zM1930 1382h2v32h-2zM2076 1382h2v32h-2zM2081 1382h9v32h-9zM2188 1382h2v32h-2zM2242 1382h4v32h-4zM2248 1382h24v32h-24zM2273 1382h3v32h-3zM2288 1382h28v32h-28z"/>
<path d="M184 1416h2v32h-2zM290 1416h3v32h-3zM339 1416h2v32h-2zM474 1416h4v32h-4zM550 1416h22v32h-22zM604 1416h2v32h-2zM698 1416h2v32h-2zM707 1416h3v32h-3zM729 1416h4v32h-4zM736 1416h3v32h-3zM776 1416h3v32h-3zM789 1416h49v32h-49zM889 1416h11v32h-11zM1422 1416h48v32h-48zM1474 1416h10v32h-10zM1485 1416h4v32h-4zM1491 1416h4v32h-4zM1498 1416h3v32h-3zM1502 1416h3v32h-3zM1511 1416h3v32h-3zM1546 1416h62v32h-62zM1615 1416h2v32h-2zM1622 1416h4v32h-4zM1630 1416h45v32h-45zM1796 1416h3v32h-3zM1851 1416h75v32h-75zM2076 1416h2v32h-2zM2081 1416h9v32h-9zM2188 1416h2v32h-2zM2242 1416h4v32h-4zM2248 1416h24v32h-24zM2273 1416h3v32h-3zM2288 1416h28v32h-28z"/>
<path d="M184 1450h2v32h-2zM290 1450h3v32h-3zM339 1450h2v32h-2zM474 1450h4v32h-4zM550 1450h21v32h-21zM698 1450h2v32h-2zM707 1450h3v32h-3zM729 1450h3v32h-3zM736 1450h3v32h-3zM776 1450h3v32h-3zM790 1450h47v32h-47zM894 1450h6v32h-6zM1422 1450h47v32h-47zM1474 1450h9v32h-9zM1491 1450h3v32h-3zM1498 1450h2v32h-2zM1511 1450h3v32h-3zM1546 1450h61v32h-61zM1630 1450h45v32h-45zM1796 1450h3v32h-3zM1852 1450h74v32h-74zM2076 1450h2v32h-2zM2081 1450h9v32h-9zM2188 1450h2v32h-2zM2242 1450h3v32h-3zM2248 1450h4v32h-4zM2253 1450h16v32h-16zM2272 1450h2v32h-2zM2276 1450h2v32h-2zM2288 1450h28v32h-28z"/>
<path d="M184 1484h2v32h-2zM290 1484h3v32h-3zM339 1484h2v32h-2zM474 1484h4v32h-4zM550 1484h20v32h-20zM698 1484h2v32h-2zM707 1484h3v32h-3zM729 1484h3v32h-3zM736 1484h3v32h-3zM790 1484h47v32h-47zM894 1484h4v32h-4zM1422 1484h47v32h-47zM1474 1484h9v32h-9zM1491 1484h3v32h-3zM1511 1484h3v32h-3zM1546 1484h61v32h-61zM1630 1484h41v32h-41zM1796 1484h3v32h-3zM1852 1484h73v32h-73zM2081 1484h7v32h-7zM2188 1484h2v32h-2zM2242 1484h3v32h-3zM2248 1484h4v32h-4zM2253 1484h16v32h-16zM2272 1484h2v32h-2zM2276 1484h2v32h-2zM2288 1484h28v32h-28z"/>
<path d="M184 1518h2v32h-2zM290 1518h3v32h-3zM339 1518h2v32h-2zM474 1518h4v32h-4zM550 1518h18v32h-18zM698 1518h2v32h-2zM707 1518h3v32h-3zM729 1518h3v32h-3zM736 1518h3v32h-3zM791 1518h43v32h-43zM835 1518h3v32h-3zM894 1518h4v32h-4zM1422 1518h46v32h-46zM1474 1518h2v32h-2zM1477 1518h5v32h-5zM1491 1518h2v32h-2zM1511 1518h3v32h-3zM1548 1518h51v32h-51zM1601 1518h2v32h-2zM1605 1518h2v32h-2zM1630 1518h40v32h-40zM1671 1518h3v32h-3zM1797 1518h2v32h-2zM1853 1518h71v32h-71zM2081 1518h7v32h-7zM2242 1518h3v32h-3zM2248 1518h4v32h-4zM2253 1518h16v32h-16zM2272 1518h2v32h-2zM2276 1518h2v32h-2zM2288 1518h28v32h-28z"/>
<path d="M184 1552h2v32h-2zM290 1552h3v32h-3zM339 1552h2v32h-2zM550 1552h18v32h-18zM707 1552h3v32h-3zM729 1552h3v32h-3zM736 1552h3v32h-3zM791 1552h33v32h-33zM825 1552h9v32h-9zM894 1552h4v32h-4zM1422 1552h46v32h-46zM1477 1552h3v32h-3zM1548 1552h51v32h-51zM1600 1552h3v32h-3zM1605 1552h2v32h-2zM1630 1552h40v32h-40zM1797 1552h2v32h-2zM1853 1552h70v32h-70zM2081 1552h7v32h-7zM2242 1552h3v32h-3zM2248 1552h4v32h-4zM2253 1552h16v32h-16zM2272 1552h2v32h-2zM2276 1552h2v32h-2zM2288 1552h28v32h-28z"/>
<path d="M184 1586h2v32h-2zM290 1586h3v32h-3zM339 1586h2v32h-2zM550 1586h16v32h-16zM729 1586h3v32h-3zM736 1586h3v32h-3zM792 1586h29v32h-29zM823 1586h2v32h-2zM827 1586h2v32h-2zM895 1586h3v32h-3zM1423 1586h44v32h-44zM1551 1586h46v32h-46zM1599 1586h2v32h-2zM1603 1586h4v32h-4zM1630 1586h36v32h-36zM1853 1586h70v32h-70zM2081 1586h7v32h-7zM2242 1586h3v32h-3zM2248 1586h4v32h-4zM2253 1586h16v32h-16zM2282 1586h3v32h-3zM2289 1586h23v32h-23zM2314 1586h3v32h-3z"/>
<path d="M184 1620h2v32h-2zM290 1620h3v32h-3zM339 1620h2v32h-2zM550 1620h15v32h-15zM729 1620h3v32h-3zM792 1620h28v32h-28zM822 1620h2v32h-2zM826 1620h3v32h-3zM895 1620h3v32h-3zM1424 1620h43v32h-43zM1551 1620h46v32h-46zM1599 1620h2v32h-2zM1630 1620h26v32h-26zM1657 1620h3v32h-3zM1662 1620h2v32h-2zM1853 1620h68v32h-68zM2081 1620h7v32h-7zM2242 1620h3v32h-3zM2249 1620h3v32h-3zM2253 1620h16v32h-16zM2282 1620h3v32h-3zM2289 1620h21v32h-21zM2315 1620h2v32h-2z"/>
<path d="M184 1654h2v32h-2zM290 1654h3v32h-3zM339 1654h2v32h-2zM550 1654h15v32h-15zM729 1654h3v32h-3zM795 1654h15v32h-15zM816 1654h3v32h-3zM828 1654h4v32h-4zM895 1654h3v32h-3zM1424 1654h43v32h-43zM1551 1654h46v32h-46zM1600 1654h3v32h-3zM1630 1654h23v32h-23zM1655 1654h2v32h-2zM1660 1654h2v32h-2zM1664 1654h2v32h-2zM1853 1654h67v32h-67zM2081 1654h7v32h-7zM2242 1654h3v32h-3zM2255 1654h13v32h-13zM2283 1654h2v32h-2zM2315 1654h2v32h-2z"/>
<path d="M184 1688h2v32h-2zM290 1688h3v32h-3zM339 1688h2v32h-2zM550 1688h14v32h-14zM729 1688h3v32h-3zM795 1688h4v32h-4zM800 1688h9v32h-9zM826 1688h3v32h-3zM895 1688h3v32h-3zM1424 1688h43v32h-43zM1551 1688h46v32h-46zM1631 1688h22v32h-22zM1854 1688h60v32h-60zM1916 1688h3v32h-3zM2081 1688h6v32h-6zM2242 1688h3v32h-3zM2247 1688h2v32h-2zM2251 1688h3v32h-3zM2256 1688h2v32h-2zM2260 1688h2v32h-2z"/>
<path d="M184 1722h2v32h-2zM290 1722h3v32h-3zM550 1722h11v32h-11zM729 1722h3v32h-3zM798 1722h3v32h-3zM812 1722h5v32h-5zM895 1722h3v32h-3zM1425 1722h41v32h-41zM1551 1722h46v32h-46zM1631 1722h15v32h-15zM1854 1722h60v32h-60zM1916 1722h3v32h-3zM2081 1722h6v32h-6z"/>
<path d="M184 1756h2v32h-2zM290 1756h3v32h-3zM550 1756h10v32h-10zM562 1756h3v32h-3zM729 1756h3v32h-3zM801 1756h6v32h-6zM895 1756h3v32h-3zM1425 1756h41v32h-41zM1551 1756h46v32h-46zM1633 1756h13v32h-13zM1650 1756h3v32h-3zM1854 1756h59v32h-59zM1915 1756h2v32h-2zM2081 1756h6v32h-6z"/>
<path d="M290 1790h3v32h-3zM550 1790h9v32h-9zM729 1790h3v32h-3zM1425 1790h41v32h-41zM1551 1790h46v32h-46zM1636 1790h5v32h-5zM1643 1790h3v32h-3zM1650 1790h2v32h-2zM1854 1790h59v32h-59zM2081 1790h6v32h-6z"/>
<path d="M290 1824h3v32h-3zM550 1824h7v32h-7zM729 1824h3v32h-3zM815 1824h3v32h-3zM1425 1824h41v32h-41zM1551 1824h46v32h-46zM1636 1824h5v32h-5zM1643 1824h4v32h-4zM1650 1824h2v32h-2zM1854 1824h59v32h-59zM2081 1824h6v32h-6z"/>
<path d="M290 1858h3v32h-3zM550 1858h5v32h-5zM729 1858h3v32h-3zM1425 1858h41v32h-41zM1551 1858h46v32h-46zM1638 1858h2v32h-2zM1854 1858h58v32h-58zM2081 1858h5v32h-5z"/>
<path d="M290 1892h3v32h-3zM550 1892h5v32h-5zM729 1892h2v32h-2zM1425 1892h23v32h-23zM1425 1892h34v32h-34zM1551 1892h46v32h-46zM1638 1892h2v32h-2zM1854 1892h58v32h-58zM2081 1892h5v32h-5z"/>
<path d="M290 1926h3v32h-3zM550 1926h5v32h-5zM729 1926h2v32h-2zM1425 1926h23v32h-23zM1425 1926h34v32h-34zM1551 1926h46v32h-46zM1638 1926h2v32h-2zM1551 1926h4v32h-4zM1854 1926h58v32h-58zM2081 1926h5v32h-5z"/>
</g>
<g fill="#3a4e84" shape-rendering="crispEdges">
<path d="M194 464h1v32h-1zM264 464h1v32h-1z"/>
<path d="M134 498h1v32h-1zM264 498h1v32h-1zM374 498h1v32h-1zM448 498h1v32h-1zM452 498h1v32h-1zM660 498h1v32h-1zM663 498h1v32h-1z"/>
<path d="M134 532h1v32h-1zM264 532h1v32h-1zM374 532h1v32h-1zM448 532h1v32h-1zM452 532h1v32h-1zM660 532h1v32h-1zM663 532h1v32h-1zM2739 532h1v32h-1zM2742 532h1v32h-1z"/>
<path d="M134 566h1v32h-1zM264 566h1v32h-1zM278 566h1v32h-1zM372 566h1v32h-1zM425 566h1v32h-1zM448 566h1v32h-1zM451 566h1v32h-1zM660 566h1v32h-1zM663 566h1v32h-1zM2142 566h1v32h-1zM2145 566h1v32h-1zM2166 566h1v32h-1zM2169 566h1v32h-1zM2772 566h1v32h-1zM2780 566h1v32h-1zM2787 566h1v32h-1zM3029 566h1v32h-1z"/>
<path d="M134 600h1v32h-1zM188 600h1v32h-1zM264 600h1v32h-1zM278 600h1v32h-1zM448 600h1v32h-1zM451 600h1v32h-1zM660 600h1v32h-1zM2165 600h1v32h-1zM2169 600h1v32h-1zM2338 600h1v32h-1zM2454 600h1v32h-1zM2578 600h1v32h-1zM2582 600h1v32h-1zM2772 600h1v32h-1zM2780 600h1v32h-1zM2787 600h1v32h-1z"/>
<path d="M220 634h1v32h-1zM262 634h1v32h-1zM266 634h1v32h-1zM447 634h1v32h-1zM450 634h1v32h-1zM647 634h1v32h-1zM1733 634h1v32h-1zM1756 634h1v32h-1zM1762 634h1v32h-1zM1831 634h1v32h-1zM2002 634h1v32h-1zM2008 634h1v32h-1zM2035 634h1v32h-1zM2136 634h1v32h-1zM2139 634h1v32h-1zM2145 634h1v32h-1zM2161 634h1v32h-1zM2169 634h1v32h-1zM2338 634h1v32h-1zM2582 634h1v32h-1zM2922 634h1v32h-1zM3019 634h1v32h-1z"/>
<path d="M220 668h1v32h-1zM262 668h1v32h-1zM266 668h1v32h-1zM365 668h1v32h-1zM447 668h1v32h-1zM450 668h1v32h-1zM635 668h1v32h-1zM647 668h1v32h-1zM2008 668h1v32h-1zM2035 668h1v32h-1zM2119 668h1v32h-1zM2133 668h1v32h-1zM2136 668h1v32h-1zM2139 668h1v32h-1zM2146 668h1v32h-1zM2154 668h1v32h-1zM2161 668h1v32h-1zM2169 668h1v32h-1zM2338 668h1v32h-1zM2430 668h1v32h-1zM2495 668h1v32h-1zM2586 668h1v32h-1zM2933 668h1v32h-1zM2940 668h1v32h-1z"/>
<path d="M196 702h1v32h-1zM262 702h1v32h-1zM266 702h1v32h-1zM447 702h1v32h-1zM450 702h1v32h-1zM646 702h1v32h-1zM1764 702h1v32h-1zM1979 702h1v32h-1zM2035 702h1v32h-1zM2132 702h1v32h-1zM2161 702h1v32h-1zM2338 702h1v32h-1zM2430 702h1v32h-1zM2586 702h1v32h-1zM2933 702h1v32h-1z"/>
<path d="M126 736h1v32h-1zM138 736h1v32h-1zM196 736h1v32h-1zM262 736h1v32h-1zM266 736h1v32h-1zM321 736h1v32h-1zM416 736h1v32h-1zM447 736h1v32h-1zM450 736h1v32h-1zM1768 736h1v32h-1zM1772 736h1v32h-1zM1774 736h1v32h-1zM1979 736h1v32h-1zM2149 736h1v32h-1zM2161 736h1v32h-1zM2328 736h1v32h-1zM2338 736h1v32h-1zM2430 736h1v32h-1zM2586 736h1v32h-1zM2940 736h1v32h-1z"/>
<path d="M126 770h1v32h-1zM138 770h1v32h-1zM196 770h1v32h-1zM262 770h1v32h-1zM266 770h1v32h-1zM447 770h1v32h-1zM450 770h1v32h-1zM1768 770h1v32h-1zM1772 770h1v32h-1zM1774 770h1v32h-1zM2161 770h1v32h-1zM2328 770h1v32h-1zM2338 770h1v32h-1zM2430 770h1v32h-1zM2586 770h1v32h-1zM2651 770h1v32h-1z"/>
<path d="M123 804h1v32h-1zM139 804h1v32h-1zM196 804h1v32h-1zM217 804h1v32h-1zM262 804h1v32h-1zM273 804h1v32h-1zM299 804h1v32h-1zM385 804h1v32h-1zM388 804h1v32h-1zM452 804h1v32h-1zM1768 804h1v32h-1zM1774 804h1v32h-1zM2019 804h1v32h-1zM2051 804h1v32h-1zM2161 804h1v32h-1zM2326 804h1v32h-1zM2338 804h1v32h-1zM2430 804h1v32h-1zM2586 804h1v32h-1z"/>
<path d="M123 838h1v32h-1zM139 838h1v32h-1zM196 838h1v32h-1zM262 838h1v32h-1zM273 838h1v32h-1zM299 838h1v32h-1zM385 838h1v32h-1zM388 838h1v32h-1zM452 838h1v32h-1zM1827 838h1v32h-1zM2019 838h1v32h-1zM2161 838h1v32h-1zM2326 838h1v32h-1zM2338 838h1v32h-1zM2430 838h1v32h-1zM2586 838h1v32h-1z"/>
<path d="M123 872h1v32h-1zM139 872h1v32h-1zM196 872h1v32h-1zM262 872h1v32h-1zM299 872h1v32h-1zM302 872h1v32h-1zM311 872h1v32h-1zM384 872h1v32h-1zM388 872h1v32h-1zM435 872h1v32h-1zM452 872h1v32h-1zM642 872h1v32h-1zM1827 872h1v32h-1zM2019 872h1v32h-1zM2326 872h1v32h-1zM2338 872h1v32h-1zM2430 872h1v32h-1zM2586 872h1v32h-1z"/>
<path d="M114 906h1v32h-1zM117 906h1v32h-1zM123 906h1v32h-1zM131 906h1v32h-1zM196 906h1v32h-1zM246 906h1v32h-1zM262 906h1v32h-1zM299 906h1v32h-1zM302 906h1v32h-1zM311 906h1v32h-1zM344 906h1v32h-1zM384 906h1v32h-1zM388 906h1v32h-1zM434 906h1v32h-1zM438 906h1v32h-1zM452 906h1v32h-1zM1756 906h1v32h-1zM1827 906h1v32h-1zM1830 906h1v32h-1zM2176 906h1v32h-1zM2237 906h1v32h-1zM2346 906h1v32h-1zM2430 906h1v32h-1zM2586 906h1v32h-1z"/>
<path d="M114 940h1v32h-1zM117 940h1v32h-1zM123 940h1v32h-1zM131 940h1v32h-1zM196 940h1v32h-1zM299 940h1v32h-1zM302 940h1v32h-1zM311 940h1v32h-1zM344 940h1v32h-1zM384 940h1v32h-1zM388 940h1v32h-1zM434 940h1v32h-1zM438 940h1v32h-1zM452 940h1v32h-1zM1727 940h1v32h-1zM1730 940h1v32h-1zM1756 940h1v32h-1zM1827 940h1v32h-1zM1830 940h1v32h-1zM2176 940h1v32h-1zM2237 940h1v32h-1zM2346 940h1v32h-1zM2430 940h1v32h-1zM2586 940h1v32h-1z"/>
<path d="M114 974h1v32h-1zM117 974h1v32h-1zM123 974h1v32h-1zM131 974h1v32h-1zM196 974h1v32h-1zM311 974h1v32h-1zM344 974h1v32h-1zM384 974h1v32h-1zM388 974h1v32h-1zM434 974h1v32h-1zM438 974h1v32h-1zM452 974h1v32h-1zM1727 974h1v32h-1zM1730 974h1v32h-1zM1756 974h1v32h-1zM1817 974h1v32h-1zM1820 974h1v32h-1zM1826 974h1v32h-1zM1952 974h1v32h-1zM2176 974h1v32h-1zM2237 974h1v32h-1zM2350 974h1v32h-1zM2430 974h1v32h-1zM2546 974h1v32h-1zM2586 974h1v32h-1zM2805 974h1v32h-1z"/>
<path d="M114 1008h1v32h-1zM117 1008h1v32h-1zM123 1008h1v32h-1zM131 1008h1v32h-1zM196 1008h1v32h-1zM270 1008h1v32h-1zM344 1008h1v32h-1zM384 1008h1v32h-1zM388 1008h1v32h-1zM434 1008h1v32h-1zM438 1008h1v32h-1zM452 1008h1v32h-1zM1727 1008h1v32h-1zM1730 1008h1v32h-1zM1756 1008h1v32h-1zM1817 1008h1v32h-1zM1820 1008h1v32h-1zM1826 1008h1v32h-1zM2176 1008h1v32h-1zM2237 1008h1v32h-1zM2350 1008h1v32h-1zM2430 1008h1v32h-1z"/>
<path d="M114 1042h1v32h-1zM117 1042h1v32h-1zM123 1042h1v32h-1zM196 1042h1v32h-1zM270 1042h1v32h-1zM344 1042h1v32h-1zM384 1042h1v32h-1zM388 1042h1v32h-1zM434 1042h1v32h-1zM438 1042h1v32h-1zM452 1042h1v32h-1zM616 1042h1v32h-1zM760 1042h1v32h-1zM1756 1042h1v32h-1zM1817 1042h1v32h-1zM1820 1042h1v32h-1zM1826 1042h1v32h-1zM2097 1042h1v32h-1zM2176 1042h1v32h-1zM2237 1042h1v32h-1zM2350 1042h1v32h-1zM2430 1042h1v32h-1zM2512 1042h1v32h-1z"/>
<path d="M196 1076h1v32h-1zM270 1076h1v32h-1zM384 1076h1v32h-1zM388 1076h1v32h-1zM434 1076h1v32h-1zM438 1076h1v32h-1zM452 1076h1v32h-1zM516 1076h1v32h-1zM862 1076h1v32h-1zM702 1076h1v32h-1zM1750 1076h1v32h-1zM1756 1076h1v32h-1zM1819 1076h1v32h-1zM1826 1076h1v32h-1zM2097 1076h1v32h-1zM2176 1076h1v32h-1zM2237 1076h1v32h-1zM2350 1076h1v32h-1zM2430 1076h1v32h-1zM2467 1076h1v32h-1zM2796 1076h1v32h-1z"/>
<path d="M270 1110h1v32h-1zM384 1110h1v32h-1zM388 1110h1v32h-1zM434 1110h1v32h-1zM438 1110h1v32h-1zM452 1110h1v32h-1zM514 1110h1v32h-1zM613 1110h1v32h-1zM765 1110h1v32h-1zM1750 1110h1v32h-1zM1756 1110h1v32h-1zM1819 1110h1v32h-1zM1826 1110h1v32h-1zM2176 1110h1v32h-1zM2350 1110h1v32h-1zM2232 1110h1v32h-1zM2467 1110h1v32h-1zM2543 1110h1v32h-1zM2809 1110h1v32h-1z"/>
<path d="M270 1144h1v32h-1zM384 1144h1v32h-1zM388 1144h1v32h-1zM434 1144h1v32h-1zM438 1144h1v32h-1zM452 1144h1v32h-1zM514 1144h1v32h-1zM756 1144h1v32h-1zM1750 1144h1v32h-1zM1756 1144h1v32h-1zM1819 1144h1v32h-1zM1826 1144h1v32h-1zM2176 1144h1v32h-1zM2350 1144h1v32h-1zM2232 1144h1v32h-1zM2467 1144h1v32h-1zM2809 1144h1v32h-1z"/>
<path d="M270 1178h1v32h-1zM388 1178h1v32h-1zM434 1178h1v32h-1zM438 1178h1v32h-1zM452 1178h1v32h-1zM486 1178h1v32h-1zM489 1178h1v32h-1zM695 1178h1v32h-1zM709 1178h1v32h-1zM737 1178h1v32h-1zM756 1178h1v32h-1zM1750 1178h1v32h-1zM1756 1178h1v32h-1zM1819 1178h1v32h-1zM1826 1178h1v32h-1zM1941 1178h1v32h-1zM2176 1178h1v32h-1zM2350 1178h1v32h-1zM2232 1178h1v32h-1zM2281 1178h1v32h-1zM2284 1178h1v32h-1z"/>
<path d="M270 1212h1v32h-1zM388 1212h1v32h-1zM452 1212h1v32h-1zM536 1212h1v32h-1zM1533 1212h1v32h-1zM699 1212h1v32h-1zM687 1212h1v32h-1zM768 1212h1v32h-1zM1750 1212h1v32h-1zM1819 1212h1v32h-1zM1941 1212h1v32h-1zM2176 1212h1v32h-1zM2232 1212h1v32h-1zM2281 1212h1v32h-1zM2284 1212h1v32h-1z"/>
<path d="M270 1246h1v32h-1zM388 1246h1v32h-1zM452 1246h1v32h-1zM536 1246h1v32h-1zM578 1246h1v32h-1zM1532 1246h1v32h-1zM699 1246h1v32h-1zM687 1246h1v32h-1zM768 1246h1v32h-1zM1750 1246h1v32h-1zM2176 1246h1v32h-1zM2232 1246h1v32h-1zM2281 1246h1v32h-1zM2284 1246h1v32h-1z"/>
<path d="M270 1280h1v32h-1zM388 1280h1v32h-1zM452 1280h1v32h-1zM536 1280h1v32h-1zM587 1280h1v32h-1zM590 1280h1v32h-1zM598 1280h1v32h-1zM1532 1280h1v32h-1zM699 1280h1v32h-1zM687 1280h1v32h-1zM768 1280h1v32h-1zM1750 1280h1v32h-1zM1783 1280h1v32h-1zM1786 1280h1v32h-1zM1788 1280h1v32h-1zM1846 1280h1v32h-1zM1935 1280h1v32h-1zM2176 1280h1v32h-1zM2236 1280h1v32h-1zM2278 1280h1v32h-1zM2282 1280h1v32h-1zM2284 1280h1v32h-1z"/>
<path d="M270 1314h1v32h-1zM388 1314h1v32h-1zM452 1314h1v32h-1zM543 1314h1v32h-1zM587 1314h1v32h-1zM590 1314h1v32h-1zM598 1314h1v32h-1zM600 1314h1v32h-1zM604 1314h1v32h-1zM606 1314h1v32h-1zM848 1314h1v32h-1zM850 1314h1v32h-1zM1532 1314h1v32h-1zM687 1314h1v32h-1zM768 1314h1v32h-1zM1750 1314h1v32h-1zM1783 1314h1v32h-1zM1786 1314h1v32h-1zM1788 1314h1v32h-1zM2176 1314h1v32h-1zM2236 1314h1v32h-1zM2278 1314h1v32h-1zM2282 1314h1v32h-1zM2284 1314h1v32h-1z"/>
<path d="M270 1348h1v32h-1zM388 1348h1v32h-1zM452 1348h1v32h-1zM491 1348h1v32h-1zM494 1348h1v32h-1zM543 1348h1v32h-1zM587 1348h1v32h-1zM590 1348h1v32h-1zM598 1348h1v32h-1zM601 1348h1v32h-1zM604 1348h1v32h-1zM607 1348h1v32h-1zM848 1348h1v32h-1zM850 1348h1v32h-1zM1419 1348h1v32h-1zM687 1348h1v32h-1zM768 1348h1v32h-1zM1750 1348h1v32h-1zM1783 1348h1v32h-1zM1786 1348h1v32h-1zM1788 1348h1v32h-1zM2070 1348h1v32h-1zM2176 1348h1v32h-1zM2236 1348h1v32h-1zM2278 1348h1v32h-1zM2282 1348h1v32h-1zM2284 1348h1v32h-1z"/>
<path d="M178 1382h1v32h-1zM270 1382h1v32h-1zM410 1382h1v32h-1zM469 1382h1v32h-1zM489 1382h1v32h-1zM502 1382h1v32h-1zM590 1382h1v32h-1zM719 1382h1v32h-1zM781 1382h1v32h-1zM784 1382h1v32h-1zM852 1382h1v32h-1zM1106 1382h1v32h-1zM1188 1382h1v32h-1zM1418 1382h1v32h-1zM1610 1382h1v32h-1zM1745 1382h1v32h-1zM1786 1382h1v32h-1zM1938 1382h1v32h-1zM2200 1382h1v32h-1zM2215 1382h1v32h-1zM2322 1382h1v32h-1zM2330 1382h1v32h-1zM2236 1382h1v32h-1zM2278 1382h1v32h-1zM2282 1382h1v32h-1zM2284 1382h1v32h-1z"/>
<path d="M178 1416h1v32h-1zM410 1416h1v32h-1zM469 1416h1v32h-1zM502 1416h1v32h-1zM590 1416h1v32h-1zM602 1416h1v32h-1zM719 1416h1v32h-1zM841 1416h1v32h-1zM1106 1416h1v32h-1zM1418 1416h1v32h-1zM1610 1416h1v32h-1zM1745 1416h1v32h-1zM1786 1416h1v32h-1zM1794 1416h1v32h-1zM1928 1416h1v32h-1zM1931 1416h1v32h-1zM2200 1416h1v32h-1zM2215 1416h1v32h-1zM2322 1416h1v32h-1zM2330 1416h1v32h-1zM2236 1416h1v32h-1zM2278 1416h1v32h-1zM2282 1416h1v32h-1zM2284 1416h1v32h-1z"/>
<path d="M178 1450h1v32h-1zM410 1450h1v32h-1zM469 1450h1v32h-1zM590 1450h1v32h-1zM719 1450h1v32h-1zM891 1450h1v32h-1zM1106 1450h1v32h-1zM1418 1450h1v32h-1zM1486 1450h1v32h-1zM1503 1450h1v32h-1zM1615 1450h1v32h-1zM1622 1450h1v32h-1zM1625 1450h1v32h-1zM1745 1450h1v32h-1zM1786 1450h1v32h-1zM1794 1450h1v32h-1zM1931 1450h1v32h-1zM2200 1450h1v32h-1zM2215 1450h1v32h-1zM2322 1450h1v32h-1zM2330 1450h1v32h-1zM2280 1450h1v32h-1zM2284 1450h1v32h-1z"/>
<path d="M178 1484h1v32h-1zM410 1484h1v32h-1zM469 1484h1v32h-1zM590 1484h1v32h-1zM719 1484h1v32h-1zM891 1484h1v32h-1zM1106 1484h1v32h-1zM1418 1484h1v32h-1zM1498 1484h1v32h-1zM1503 1484h1v32h-1zM1615 1484h1v32h-1zM1672 1484h1v32h-1zM1745 1484h1v32h-1zM1786 1484h1v32h-1zM1794 1484h1v32h-1zM1931 1484h1v32h-1zM2200 1484h1v32h-1zM2215 1484h1v32h-1zM2322 1484h1v32h-1zM2330 1484h1v32h-1zM2280 1484h1v32h-1zM2284 1484h1v32h-1z"/>
<path d="M178 1518h1v32h-1zM410 1518h1v32h-1zM469 1518h1v32h-1zM719 1518h1v32h-1zM891 1518h1v32h-1zM1106 1518h1v32h-1zM1418 1518h1v32h-1zM1498 1518h1v32h-1zM1745 1518h1v32h-1zM1931 1518h1v32h-1zM2200 1518h1v32h-1zM2215 1518h1v32h-1zM2322 1518h1v32h-1zM2330 1518h1v32h-1zM2280 1518h1v32h-1zM2284 1518h1v32h-1z"/>
<path d="M178 1552h1v32h-1zM410 1552h1v32h-1zM469 1552h1v32h-1zM475 1552h1v32h-1zM719 1552h1v32h-1zM891 1552h1v32h-1zM1106 1552h1v32h-1zM1418 1552h1v32h-1zM1474 1552h1v32h-1zM1512 1552h1v32h-1zM1931 1552h1v32h-1zM2200 1552h1v32h-1zM2215 1552h1v32h-1zM2322 1552h1v32h-1zM2330 1552h1v32h-1zM2280 1552h1v32h-1zM2284 1552h1v32h-1z"/>
<path d="M178 1586h1v32h-1zM410 1586h1v32h-1zM469 1586h1v32h-1zM475 1586h1v32h-1zM719 1586h1v32h-1zM1106 1586h1v32h-1zM1474 1586h1v32h-1zM1512 1586h1v32h-1zM1548 1586h1v32h-1zM1668 1586h1v32h-1zM1798 1586h1v32h-1zM2200 1586h1v32h-1zM2215 1586h1v32h-1zM2322 1586h1v32h-1zM2330 1586h1v32h-1z"/>
<path d="M178 1620h1v32h-1zM410 1620h1v32h-1zM475 1620h1v32h-1zM719 1620h1v32h-1zM1106 1620h1v32h-1zM1474 1620h1v32h-1zM1512 1620h1v32h-1zM1603 1620h1v32h-1zM1666 1620h1v32h-1zM1798 1620h1v32h-1zM2200 1620h1v32h-1zM2215 1620h1v32h-1zM2322 1620h1v32h-1zM2312 1620h1v32h-1z"/>
<path d="M178 1654h1v32h-1zM410 1654h1v32h-1zM475 1654h1v32h-1zM719 1654h1v32h-1zM812 1654h1v32h-1zM822 1654h1v32h-1zM825 1654h1v32h-1zM1106 1654h1v32h-1zM1474 1654h1v32h-1zM1512 1654h1v32h-1zM1798 1654h1v32h-1zM2200 1654h1v32h-1zM2215 1654h1v32h-1zM2322 1654h1v32h-1zM2250 1654h1v32h-1z"/>
<path d="M178 1688h1v32h-1zM410 1688h1v32h-1zM475 1688h1v32h-1zM719 1688h1v32h-1zM812 1688h1v32h-1zM816 1688h1v32h-1zM822 1688h1v32h-1zM1106 1688h1v32h-1zM1474 1688h1v32h-1zM1512 1688h1v32h-1zM1655 1688h1v32h-1zM1660 1688h1v32h-1zM2200 1688h1v32h-1zM2215 1688h1v32h-1zM2322 1688h1v32h-1zM2264 1688h1v32h-1zM2267 1688h1v32h-1zM2284 1688h1v32h-1zM2316 1688h1v32h-1z"/>
<path d="M178 1722h1v32h-1zM410 1722h1v32h-1zM563 1722h1v32h-1zM719 1722h1v32h-1zM796 1722h1v32h-1zM802 1722h1v32h-1zM806 1722h1v32h-1zM1106 1722h1v32h-1zM1474 1722h1v32h-1zM1512 1722h1v32h-1zM1648 1722h1v32h-1zM1652 1722h1v32h-1zM2200 1722h1v32h-1zM2215 1722h1v32h-1zM2322 1722h1v32h-1zM2242 1722h1v32h-1zM2316 1722h1v32h-1z"/>
<path d="M178 1756h1v32h-1zM410 1756h1v32h-1zM719 1756h1v32h-1zM797 1756h1v32h-1zM816 1756h1v32h-1zM1106 1756h1v32h-1zM1474 1756h1v32h-1zM1512 1756h1v32h-1zM2200 1756h1v32h-1zM2215 1756h1v32h-1zM2322 1756h1v32h-1zM2242 1756h1v32h-1zM2316 1756h1v32h-1z"/>
<path d="M178 1790h1v32h-1zM410 1790h1v32h-1zM565 1790h1v32h-1zM719 1790h1v32h-1zM802 1790h1v32h-1zM805 1790h1v32h-1zM807 1790h1v32h-1zM816 1790h1v32h-1zM896 1790h1v32h-1zM1106 1790h1v32h-1zM1474 1790h1v32h-1zM1512 1790h1v32h-1zM1915 1790h1v32h-1zM2200 1790h1v32h-1zM2215 1790h1v32h-1zM2322 1790h1v32h-1zM2242 1790h1v32h-1zM2316 1790h1v32h-1z"/>
<path d="M178 1824h1v32h-1zM410 1824h1v32h-1zM719 1824h1v32h-1zM802 1824h1v32h-1zM805 1824h1v32h-1zM896 1824h1v32h-1zM1106 1824h1v32h-1zM1474 1824h1v32h-1zM1512 1824h1v32h-1zM1915 1824h1v32h-1zM2200 1824h1v32h-1zM2215 1824h1v32h-1zM2322 1824h1v32h-1zM2242 1824h1v32h-1zM2316 1824h1v32h-1z"/>
<path d="M410 1858h1v32h-1zM719 1858h1v32h-1zM809 1858h1v32h-1zM896 1858h1v32h-1zM1106 1858h1v32h-1zM1474 1858h1v32h-1zM1512 1858h1v32h-1zM1644 1858h1v32h-1zM1648 1858h1v32h-1zM2200 1858h1v32h-1zM2215 1858h1v32h-1zM2322 1858h1v32h-1zM2242 1858h1v32h-1zM2316 1858h1v32h-1z"/>
<path d="M410 1892h1v32h-1zM719 1892h1v32h-1zM809 1892h1v32h-1zM896 1892h1v32h-1zM1106 1892h1v32h-1zM1461 1892h1v32h-1zM1474 1892h1v32h-1zM1512 1892h1v32h-1zM1644 1892h1v32h-1zM1648 1892h1v32h-1zM2200 1892h1v32h-1zM2215 1892h1v32h-1zM2322 1892h1v32h-1zM2242 1892h1v32h-1zM2316 1892h1v32h-1z"/>
<path d="M410 1926h1v32h-1zM809 1926h1v32h-1zM896 1926h1v32h-1zM1106 1926h1v32h-1zM1461 1926h1v32h-1zM1474 1926h1v32h-1zM1512 1926h1v32h-1zM1644 1926h1v32h-1zM1648 1926h1v32h-1zM2200 1926h1v32h-1zM2215 1926h1v32h-1zM2322 1926h1v32h-1zM2242 1926h1v32h-1zM2316 1926h1v32h-1z"/>
</g>
<g fill="#2b3a62" shape-rendering="crispEdges">
<path d="M1813 600h1v32h-1z"/>
<path d="M1811 634h1v32h-1zM1972 634h1v32h-1zM3028 634h1v32h-1z"/>
<path d="M1755 668h1v32h-1zM1762 668h1v32h-1zM1811 668h1v32h-1zM1831 668h1v32h-1zM1972 668h1v32h-1zM2381 668h1v32h-1zM2463 668h1v32h-1z"/>
<path d="M652 702h1v32h-1zM1731 702h1v32h-1zM1755 702h1v32h-1zM1831 702h1v32h-1zM2463 702h1v32h-1z"/>
<path d="M635 736h1v32h-1zM1755 736h1v32h-1zM1831 736h1v32h-1zM2029 736h1v32h-1zM2463 736h1v32h-1zM2933 736h1v32h-1zM2950 736h1v32h-1zM3390 736h1v32h-1z"/>
<path d="M118 770h1v32h-1zM635 770h1v32h-1zM1755 770h1v32h-1zM1831 770h1v32h-1zM2149 770h1v32h-1zM2463 770h1v32h-1zM2942 770h1v32h-1zM3390 770h1v32h-1z"/>
<path d="M173 804h1v32h-1zM182 804h1v32h-1zM199 804h1v32h-1zM252 804h1v32h-1zM266 804h1v32h-1zM320 804h1v32h-1zM322 804h1v32h-1zM392 804h1v32h-1zM635 804h1v32h-1zM1755 804h1v32h-1zM1772 804h1v32h-1zM1831 804h1v32h-1zM1995 804h1v32h-1zM2149 804h1v32h-1zM2463 804h1v32h-1zM2967 804h1v32h-1zM3390 804h1v32h-1z"/>
<path d="M199 838h1v32h-1zM217 838h1v32h-1zM266 838h1v32h-1zM320 838h1v32h-1zM322 838h1v32h-1zM345 838h1v32h-1zM397 838h1v32h-1zM449 838h1v32h-1zM1755 838h1v32h-1zM1770 838h1v32h-1zM1831 838h1v32h-1zM2149 838h1v32h-1zM2463 838h1v32h-1zM3390 838h1v32h-1z"/>
<path d="M199 872h1v32h-1zM266 872h1v32h-1zM320 872h1v32h-1zM322 872h1v32h-1zM397 872h1v32h-1zM449 872h1v32h-1zM1755 872h1v32h-1zM1770 872h1v32h-1zM1831 872h1v32h-1zM2047 872h1v32h-1zM2161 872h1v32h-1zM2463 872h1v32h-1zM3390 872h1v32h-1z"/>
<path d="M176 906h1v32h-1zM139 906h1v32h-1zM199 906h1v32h-1zM266 906h1v32h-1zM320 906h1v32h-1zM397 906h1v32h-1zM449 906h1v32h-1zM526 906h1v32h-1zM635 906h1v32h-1zM674 906h1v32h-1zM1771 906h1v32h-1zM1769 906h1v32h-1zM2197 906h1v32h-1zM2194 906h1v32h-1zM2222 906h1v32h-1zM2226 906h1v32h-1zM2463 906h1v32h-1zM3390 906h1v32h-1z"/>
<path d="M176 940h1v32h-1zM199 940h1v32h-1zM266 940h1v32h-1zM320 940h1v32h-1zM397 940h1v32h-1zM449 940h1v32h-1zM526 940h1v32h-1zM635 940h1v32h-1zM1715 940h1v32h-1zM1771 940h1v32h-1zM2106 940h1v32h-1zM2197 940h1v32h-1zM2194 940h1v32h-1zM2222 940h1v32h-1zM2549 940h1v32h-1zM3390 940h1v32h-1z"/>
<path d="M176 974h1v32h-1zM199 974h1v32h-1zM266 974h1v32h-1zM320 974h1v32h-1zM397 974h1v32h-1zM449 974h1v32h-1zM1715 974h1v32h-1zM1771 974h1v32h-1zM2197 974h1v32h-1zM2194 974h1v32h-1zM2647 974h1v32h-1zM3390 974h1v32h-1z"/>
<path d="M176 1008h1v32h-1zM213 1008h1v32h-1zM311 1008h1v32h-1zM397 1008h1v32h-1zM449 1008h1v32h-1zM1715 1008h1v32h-1zM1771 1008h1v32h-1zM2197 1008h1v32h-1zM2194 1008h1v32h-1zM2647 1008h1v32h-1zM3390 1008h1v32h-1z"/>
<path d="M176 1042h1v32h-1zM213 1042h1v32h-1zM311 1042h1v32h-1zM397 1042h1v32h-1zM449 1042h1v32h-1zM1771 1042h1v32h-1zM2197 1042h1v32h-1zM2194 1042h1v32h-1z"/>
<path d="M123 1076h1v32h-1zM127 1076h1v32h-1zM397 1076h1v32h-1zM449 1076h1v32h-1zM1416 1076h1v32h-1zM1771 1076h1v32h-1zM2197 1076h1v32h-1zM2194 1076h1v32h-1zM2511 1076h1v32h-1z"/>
<path d="M123 1110h1v32h-1zM127 1110h1v32h-1zM397 1110h1v32h-1zM449 1110h1v32h-1zM855 1110h1v32h-1zM1416 1110h1v32h-1zM1771 1110h1v32h-1zM1842 1110h1v32h-1zM2197 1110h1v32h-1zM2194 1110h1v32h-1zM2796 1110h1v32h-1z"/>
<path d="M127 1144h1v32h-1zM397 1144h1v32h-1zM1416 1144h1v32h-1zM1771 1144h1v32h-1zM2197 1144h1v32h-1zM2194 1144h1v32h-1z"/>
<path d="M127 1178h1v32h-1zM397 1178h1v32h-1zM1416 1178h1v32h-1zM739 1178h1v32h-1zM745 1178h1v32h-1zM1771 1178h1v32h-1zM2197 1178h1v32h-1zM2194 1178h1v32h-1z"/>
<path d="M127 1212h1v32h-1zM397 1212h1v32h-1zM429 1212h1v32h-1zM1416 1212h1v32h-1zM1756 1212h1v32h-1zM1771 1212h1v32h-1zM2094 1212h1v32h-1zM2197 1212h1v32h-1zM2194 1212h1v32h-1z"/>
<path d="M397 1246h1v32h-1zM429 1246h1v32h-1zM1416 1246h1v32h-1zM1756 1246h1v32h-1zM1771 1246h1v32h-1zM2197 1246h1v32h-1zM2194 1246h1v32h-1z"/>
<path d="M397 1280h1v32h-1zM429 1280h1v32h-1zM1416 1280h1v32h-1zM1756 1280h1v32h-1zM1771 1280h1v32h-1zM1801 1280h1v32h-1zM1803 1280h1v32h-1zM1937 1280h1v32h-1zM2197 1280h1v32h-1z"/>
<path d="M397 1314h1v32h-1zM429 1314h1v32h-1zM608 1314h1v32h-1zM1416 1314h1v32h-1zM1756 1314h1v32h-1zM1771 1314h1v32h-1zM1801 1314h1v32h-1zM1803 1314h1v32h-1zM1847 1314h1v32h-1zM2197 1314h1v32h-1z"/>
<path d="M397 1348h1v32h-1zM429 1348h1v32h-1zM1416 1348h1v32h-1zM1756 1348h1v32h-1zM1771 1348h1v32h-1zM1801 1348h1v32h-1zM1803 1348h1v32h-1zM2197 1348h1v32h-1z"/>
<path d="M388 1382h1v32h-1zM397 1382h1v32h-1zM402 1382h1v32h-1zM429 1382h1v32h-1zM452 1382h1v32h-1zM439 1382h1v32h-1zM508 1382h1v32h-1zM543 1382h1v32h-1zM574 1382h1v32h-1zM586 1382h1v32h-1zM749 1382h1v32h-1zM768 1382h1v32h-1zM1191 1382h1v32h-1zM1524 1382h1v32h-1zM1720 1382h1v32h-1zM1783 1382h1v32h-1zM1803 1382h1v32h-1zM2176 1382h1v32h-1zM2180 1382h1v32h-1zM2336 1382h1v32h-1z"/>
<path d="M388 1416h1v32h-1zM397 1416h1v32h-1zM402 1416h1v32h-1zM429 1416h1v32h-1zM489 1416h1v32h-1zM492 1416h1v32h-1zM508 1416h1v32h-1zM543 1416h1v32h-1zM574 1416h1v32h-1zM586 1416h1v32h-1zM768 1416h1v32h-1zM852 1416h1v32h-1zM1114 1416h1v32h-1zM1720 1416h1v32h-1zM1783 1416h1v32h-1zM1938 1416h1v32h-1zM2180 1416h1v32h-1zM2336 1416h1v32h-1z"/>
<path d="M388 1450h1v32h-1zM397 1450h1v32h-1zM429 1450h1v32h-1zM574 1450h1v32h-1zM586 1450h1v32h-1zM605 1450h1v32h-1zM768 1450h1v32h-1zM840 1450h1v32h-1zM1114 1450h1v32h-1zM1676 1450h1v32h-1zM1720 1450h1v32h-1zM1783 1450h1v32h-1zM2180 1450h1v32h-1zM2336 1450h1v32h-1zM2236 1450h1v32h-1z"/>
<path d="M388 1484h1v32h-1zM397 1484h1v32h-1zM574 1484h1v32h-1zM768 1484h1v32h-1zM840 1484h1v32h-1zM852 1484h1v32h-1zM1114 1484h1v32h-1zM1720 1484h1v32h-1zM1783 1484h1v32h-1zM2180 1484h1v32h-1zM2336 1484h1v32h-1zM2236 1484h1v32h-1z"/>
<path d="M388 1518h1v32h-1zM397 1518h1v32h-1zM569 1518h1v32h-1zM768 1518h1v32h-1zM840 1518h1v32h-1zM1503 1518h1v32h-1zM1615 1518h1v32h-1zM1720 1518h1v32h-1zM1783 1518h1v32h-1zM2180 1518h1v32h-1zM2336 1518h1v32h-1zM2236 1518h1v32h-1z"/>
<path d="M397 1552h1v32h-1zM698 1552h1v32h-1zM768 1552h1v32h-1zM1494 1552h1v32h-1zM1503 1552h1v32h-1zM1720 1552h1v32h-1zM1783 1552h1v32h-1zM2180 1552h1v32h-1zM2336 1552h1v32h-1zM2236 1552h1v32h-1z"/>
<path d="M698 1586h1v32h-1zM708 1586h1v32h-1zM768 1586h1v32h-1zM830 1586h1v32h-1zM1478 1586h1v32h-1zM1503 1586h1v32h-1zM1720 1586h1v32h-1zM1783 1586h1v32h-1zM2180 1586h1v32h-1zM2336 1586h1v32h-1zM2236 1586h1v32h-1z"/>
<path d="M698 1620h1v32h-1zM708 1620h1v32h-1zM768 1620h1v32h-1zM830 1620h1v32h-1zM1478 1620h1v32h-1zM1503 1620h1v32h-1zM1549 1620h1v32h-1zM1720 1620h1v32h-1zM2180 1620h1v32h-1zM2336 1620h1v32h-1zM2236 1620h1v32h-1z"/>
<path d="M698 1654h1v32h-1zM708 1654h1v32h-1zM1478 1654h1v32h-1zM1503 1654h1v32h-1zM1549 1654h1v32h-1zM1720 1654h1v32h-1zM2180 1654h1v32h-1zM2336 1654h1v32h-1zM2236 1654h1v32h-1z"/>
<path d="M698 1688h1v32h-1zM708 1688h1v32h-1zM1478 1688h1v32h-1zM1503 1688h1v32h-1zM1549 1688h1v32h-1zM1664 1688h1v32h-1zM1720 1688h1v32h-1zM2336 1688h1v32h-1zM2236 1688h1v32h-1z"/>
<path d="M340 1722h1v32h-1zM698 1722h1v32h-1zM708 1722h1v32h-1zM822 1722h1v32h-1zM837 1722h1v32h-1zM1478 1722h1v32h-1zM1503 1722h1v32h-1zM1549 1722h1v32h-1zM1661 1722h1v32h-1zM1665 1722h1v32h-1zM1720 1722h1v32h-1zM2336 1722h1v32h-1zM2251 1722h1v32h-1zM2253 1722h1v32h-1zM2285 1722h1v32h-1z"/>
<path d="M340 1756h1v32h-1zM698 1756h1v32h-1zM708 1756h1v32h-1zM837 1756h1v32h-1zM1478 1756h1v32h-1zM1503 1756h1v32h-1zM1662 1756h1v32h-1zM1665 1756h1v32h-1zM1720 1756h1v32h-1zM2336 1756h1v32h-1zM2251 1756h1v32h-1zM2253 1756h1v32h-1zM2285 1756h1v32h-1z"/>
<path d="M184 1790h1v32h-1zM340 1790h1v32h-1zM698 1790h1v32h-1zM708 1790h1v32h-1zM1478 1790h1v32h-1zM1503 1790h1v32h-1zM1666 1790h1v32h-1zM1720 1790h1v32h-1zM2336 1790h1v32h-1zM2251 1790h1v32h-1zM2253 1790h1v32h-1zM2285 1790h1v32h-1z"/>
<path d="M340 1824h1v32h-1zM564 1824h1v32h-1zM698 1824h1v32h-1zM708 1824h1v32h-1zM807 1824h1v32h-1zM1478 1824h1v32h-1zM1503 1824h1v32h-1zM1720 1824h1v32h-1zM2336 1824h1v32h-1zM2251 1824h1v32h-1zM2253 1824h1v32h-1zM2285 1824h1v32h-1z"/>
<path d="M178 1858h1v32h-1zM340 1858h1v32h-1zM698 1858h1v32h-1zM804 1858h1v32h-1zM816 1858h1v32h-1zM1478 1858h1v32h-1zM1503 1858h1v32h-1zM1720 1858h1v32h-1zM1914 1858h1v32h-1zM2336 1858h1v32h-1zM2251 1858h1v32h-1zM2253 1858h1v32h-1zM2285 1858h1v32h-1z"/>
<path d="M178 1892h1v32h-1zM340 1892h1v32h-1zM698 1892h1v32h-1zM804 1892h1v32h-1zM816 1892h1v32h-1zM1478 1892h1v32h-1zM1503 1892h1v32h-1zM1720 1892h1v32h-1zM2336 1892h1v32h-1zM2251 1892h1v32h-1zM2253 1892h1v32h-1zM2285 1892h1v32h-1z"/>
<path d="M178 1926h1v32h-1zM340 1926h1v32h-1zM698 1926h1v32h-1zM719 1926h1v32h-1zM804 1926h1v32h-1zM816 1926h1v32h-1zM1478 1926h1v32h-1zM1503 1926h1v32h-1zM1720 1926h1v32h-1zM2336 1926h1v32h-1zM2251 1926h1v32h-1zM2253 1926h1v32h-1zM2285 1926h1v32h-1z"/>
</g>
<path d="M112 310V1960M282.1 310V1960M452.1 310V1960M622.2 310V1960M792.2 310V1960M962.2 310V1960M1132.3 310V1960M1302.4 310V1960M1472.4 310V1960M1642.5 310V1960M1812.5 310V1960M1982.6 310V1960M2152.6 310V1960M2322.7 310V1960M2492.7 310V1960M2662.8 310V1960M2832.8 310V1960M3002.9 310V1960M3172.9 310V1960M3343 310V1960" stroke="rgba(160,175,210,0.10)" stroke-width="1.4" fill="none"/>
<g font-family="Liberation Sans, sans-serif" font-size="17" fill="#e6eaf2">
<text x="120.3" y="330.7" textLength="32" lengthAdjust="spacingAndGlyphs">0ms</text>
<text x="290.4" y="330.7" textLength="55.7" lengthAdjust="spacingAndGlyphs">3177ms</text>
<text x="460.4" y="330.7" textLength="62" lengthAdjust="spacingAndGlyphs">6353ms</text>
<text x="630.5" y="330.7" textLength="62" lengthAdjust="spacingAndGlyphs">9530ms</text>
<text x="800.5" y="330.7" textLength="66.3" lengthAdjust="spacingAndGlyphs">12706ms</text>
<text x="970.5" y="330.7" textLength="66.9" lengthAdjust="spacingAndGlyphs">15883ms</text>
<text x="1140.6" y="330.7" textLength="66.9" lengthAdjust="spacingAndGlyphs">19059ms</text>
<text x="1310.7" y="330.7" textLength="72" lengthAdjust="spacingAndGlyphs">22236ms</text>
<text x="1480.7" y="330.7" textLength="66.9" lengthAdjust="spacingAndGlyphs">25412ms</text>
<text x="1650.8" y="330.7" textLength="72" lengthAdjust="spacingAndGlyphs">28589ms</text>
<text x="1820.8" y="330.7" textLength="66.3" lengthAdjust="spacingAndGlyphs">31765ms</text>
<text x="1990.9" y="330.7" textLength="72" lengthAdjust="spacingAndGlyphs">34942ms</text>
<text x="2160.9" y="330.7" textLength="61.8" lengthAdjust="spacingAndGlyphs">38118ms</text>
<text x="2331" y="330.7" textLength="66.9" lengthAdjust="spacingAndGlyphs">41295ms</text>
<text x="2501" y="330.7" textLength="66.3" lengthAdjust="spacingAndGlyphs">44471ms</text>
<text x="2671.1" y="330.7" textLength="71.4" lengthAdjust="spacingAndGlyphs">47648ms</text>
<text x="2841.1" y="330.7" textLength="72" lengthAdjust="spacingAndGlyphs">50824ms</text>
<text x="3011.2" y="330.7" textLength="66.9" lengthAdjust="spacingAndGlyphs">54001ms</text>
<text x="3181.2" y="330.7" textLength="65.1" lengthAdjust="spacingAndGlyphs">57177ms</text>
<text x="3351.3" y="330.7" textLength="72" lengthAdjust="spacingAndGlyphs">60354ms</text>
</g>
<path d="M112 310h7v40h-7z" fill="#1c2743"/><path d="M112 311h6.5v39h-6.5" fill="none" stroke="#1fbe83" stroke-width="2"/>
<path d="M3433 310h7v40h-7z" fill="#1c2743"/><path d="M3440 311h-6.5v39h6.5" fill="none" stroke="#1fbe83" stroke-width="2"/>
<g font-family="Liberation Sans, sans-serif" font-size="20" fill="#e9edf5">
<text x="120" y="453.5">apiserver</text>
<text x="137" y="487.5">e…</text>
<text x="206" y="487.5">r…</text>
<text x="276" y="487.5">runtime.goexit</text>
<text x="2414.7" y="487.5">runtime.mcall</text>
<text x="2779" y="487.5">runtime.systemstack</text>
<text x="206" y="521.5">r…</text>
<text x="206" y="555.5">r…</text>
<text x="206" y="589.5">r…</text>
<text x="206" y="623.5">r…</text>
<text x="289.5" y="521.5">gi…c1</text>
<text x="289.5" y="555.5">gi…pl</text>
<text x="315" y="589.5">g…</text>
<text x="462.7" y="521.5">go.temp…l.func1</text>
<text x="466.7" y="555.5">g…m</text>
<text x="534.3" y="555.5">go….-fm</text>
<text x="466.7" y="589.5">g…l</text>
<text x="534.3" y="589.5">go….oll</text>
<text x="466.7" y="623.5">g…e</text>
<text x="536.7" y="623.5">go….ue</text>
<text x="466.7" y="657.5">g…e</text>
<text x="536.7" y="657.5">go….ue</text>
<text x="466.7" y="691.5">g…</text>
<text x="536.7" y="691.5">goo…ke</text>
<text x="466.7" y="725.5">g…</text>
<text x="536.7" y="725.5">goo…c1</text>
<text x="466.7" y="759.5">g…</text>
<text x="536.7" y="759.5">go….or</text>
<text x="466.7" y="793.5">g…</text>
<text x="536.7" y="793.5">goo…c1</text>
<text x="466.7" y="827.5">g…</text>
<text x="536.7" y="827.5">go….c1</text>
<text x="469.3" y="861.5">g…</text>
<text x="539" y="861.5">go….1</text>
<text x="469.3" y="895.5">g…</text>
<text x="539" y="895.5">go…c2</text>
<text x="470" y="929.5">g…</text>
<text x="540" y="929.5">go…c1</text>
<text x="470" y="963.5">g…</text>
<text x="540" y="963.5">gi…c1</text>
<text x="540.7" y="997.5">go….1</text>
<text x="540.7" y="1031.5">go…c3</text>
<text x="541.7" y="1065.5">go…e</text>
<text x="675" y="521.5">go.temporal.io/sdk/internal.(*baseWorker).processTaskAsync.func1</text>
<text x="675" y="555.5">go.temporal.io/sdk/internal.(*baseWorker).processTask</text>
<text x="675" y="589.5">go.temporal.io/sdk/internal.(*activityTaskPoller).ProcessTask</text>
<text x="675" y="623.5">go.temporal.io/sdk/internal.(*activityTaskHandlerImpl).Execute</text>
<text x="680" y="657.5">go.temporal.io/sdk/internal.(*activityExecutor).Execute</text>
<text x="680" y="691.5">go.temporal.io/sdk/internal.(*activityExecutor).ExecuteWithActualArgs</text>
<text x="685.7" y="725.5">go.temporal.io/sdk/internal.(*activityEnvironmentInterceptor).ExecuteActivity</text>
<text x="685.7" y="759.5">go.temporal.io/sdk/internal.executeFunctionWithContext</text>
<text x="685.7" y="793.5">go.temporal.io/sdk/internal.executeFunction</text>
<text x="685.7" y="827.5">reflect.Value.Call</text>
<text x="685.7" y="861.5">reflect.Value.call</text>
<text x="685.7" y="895.5">runtime.reflectcall</text>
<text x="692.7" y="929.5">runtime.call64</text>
<text x="693.3" y="963.5">gi…fm</text>
<text x="780.7" y="963.5">github.com/metoro-io/metoro-observability/src/pkg/…ent_rollout.(*Workflow).activityDetectRollouts-fm</text>
<text x="693.3" y="997.5">gi…or</text>
<text x="780.7" y="997.5">github.com/metoro-io/metoro-observability/src/pkg/…oyment_rollout.(*Workflow).activityDetectRollouts</text>
<text x="781.7" y="1031.5">enc…hal</text>
<text x="895.7" y="1031.5">github.com/metoro-io/metoro-obser….(*Workflow).getLastTrackedState</text>
<text x="1545.3" y="1031.5">github….khouse</text>
<text x="781.7" y="1065.5">en…l</text>
<text x="895.7" y="1065.5">github.com/metoro-io/metoro-observ…gres.(*PostgresClient).ListEvents</text>
<text x="1550.3" y="1065.5">github….mplate</text>
<text x="782.3" y="1099.5">en…e</text>
<text x="895.7" y="1099.5">github.com/metoro-io/metoro….(*Event).ConvertToInternal</text>
<text x="1426" y="1099.5">gorm…ind</text>
<text x="1553.7" y="1099.5">e…l</text>
<text x="1621" y="1099.5">en…al</text>
<text x="782.3" y="1133.5">en…t</text>
<text x="895.7" y="1133.5">github.com/metoro-io/metoro…utEvent).ConvertToInternal</text>
<text x="1426" y="1133.5">gorm…ute</text>
<text x="1553.7" y="1133.5">e…l</text>
<text x="1621" y="1133.5">e…l</text>
<text x="782.3" y="1167.5">en…e</text>
<text x="895.7" y="1167.5">encoding/json.Unmarshal</text>
<text x="1426" y="1167.5">gorm…ery</text>
<text x="1553.7" y="1167.5">e…e</text>
<text x="1621" y="1167.5">e…e</text>
<text x="782.3" y="1201.5">en…t</text>
<text x="895.7" y="1201.5">encoding/json.…te).unmarshal</text>
<text x="1204.3" y="1201.5">encodin…kValid</text>
<text x="1428.2" y="1201.5">gor…can</text>
<text x="1554.3" y="1201.5">e…</text>
<text x="1621" y="1201.5">e…t</text>
<text x="782.3" y="1235.5">en…e</text>
<text x="895.7" y="1235.5">encoding/json.…deState).value</text>
<text x="1206" y="1235.5">e…</text>
<text x="1428.2" y="1235.5">da…t</text>
<text x="1554.3" y="1235.5">e…</text>
<text x="1621" y="1235.5">e…e</text>
<text x="784" y="1269.5">en…e</text>
<text x="895.7" y="1269.5">encoding/json.…eState).object</text>
<text x="1428.2" y="1269.5">da…k</text>
<text x="1554.3" y="1269.5">e…</text>
<text x="1621" y="1269.5">e…t</text>
<text x="790.7" y="1303.5">e…e</text>
<text x="895.7" y="1303.5">encoding/json…eState).value</text>
<text x="1428.2" y="1303.5">da…1</text>
<text x="1554.3" y="1303.5">e…e</text>
<text x="1621" y="1303.5">e…e</text>
<text x="791.7" y="1337.5">e…</text>
<text x="895.7" y="1337.5">encoding/j…teralStore</text>
<text x="1126" y="1337.5">e…l</text>
<text x="1428.2" y="1337.5">da…d</text>
<text x="1554.3" y="1337.5">e…</text>
<text x="1622.7" y="1337.5">e…</text>
<text x="797.7" y="1371.5">e…</text>
<text x="895.7" y="1371.5">encoding/…oteBytes</text>
<text x="1429.3" y="1371.5">gi…t</text>
<text x="1554.3" y="1371.5">e…</text>
<text x="1628.7" y="1371.5">e…</text>
<text x="1554.3" y="1405.5">e…</text>
<text x="1554.3" y="1439.5">e…</text>
<text x="1554.3" y="1473.5">e…</text>
<text x="1554.3" y="1507.5">e…</text>
<text x="1844.7" y="521.5">google….t.func6</text>
<text x="1844.7" y="555.5">google.g…er).run</text>
<text x="1844.7" y="589.5">googl…lush</text>
<text x="1844.7" y="623.5">googl…ffer</text>
<text x="1844.7" y="657.5">net.(…rite</text>
<text x="1844.7" y="691.5">net….rite</text>
<text x="1844.7" y="725.5">inter…rite</text>
<text x="1846.3" y="759.5">sysca…rite</text>
<text x="1847" y="793.5">sysc…call</text>
<text x="1847" y="827.5">inte…all6</text>
<text x="1847" y="861.5">el0…ler</text>
<text x="1847" y="895.5">el0_svc</text>
<text x="1847" y="929.5">do_…svc</text>
<text x="1847" y="963.5">el0…p.0</text>
<text x="1847" y="997.5">invo…all</text>
<text x="1847" y="1031.5">__a…ite</text>
<text x="1847" y="1065.5">ksys_write</text>
<text x="1849" y="1099.5">vfs_write</text>
<text x="1851.3" y="1133.5">soc…ter</text>
<text x="1851.3" y="1167.5">__…sg</text>
<text x="1852" y="1201.5">in…sg</text>
<text x="1852" y="1235.5">tc…sg</text>
<text x="1853.7" y="1269.5">tc…ed</text>
<text x="1857" y="1303.5">tc…h</text>
<text x="1857" y="1337.5">__…s</text>
<text x="1858" y="1371.5">tc…it</text>
<text x="1857" y="1405.5">__…b</text>
<text x="1859" y="1439.5">i…t</text>
<text x="1860.3" y="1473.5">_…t</text>
<text x="1860.3" y="1507.5">i…t</text>
<text x="1861.3" y="1541.5">i…t</text>
<text x="1861.3" y="1575.5">_…t</text>
<text x="1861.3" y="1609.5">i…2</text>
<text x="1861.3" y="1643.5">n…t</text>
<text x="1861.3" y="1677.5">_…</text>
<text x="1862" y="1711.5">_…</text>
<text x="1862" y="1745.5">d…</text>
<text x="1862" y="1779.5">d…</text>
<text x="1862" y="1813.5">c…</text>
<text x="1862" y="1847.5">_…</text>
<text x="1862" y="1881.5">_…</text>
<text x="1862" y="1915.5">h…</text>
<text x="1862" y="1949.5">n…</text>
<text x="2024.7" y="521.5">google…wrap4</text>
<text x="2025.3" y="555.5">google…reader</text>
<text x="2025.3" y="589.5">gol…ame</text>
<text x="2053" y="623.5">go…r</text>
<text x="2053" y="657.5">i…t</text>
<text x="2053" y="691.5">b…d</text>
<text x="2053" y="725.5">n…d</text>
<text x="2053" y="759.5">n…d</text>
<text x="2053" y="793.5">i…d</text>
<text x="2062.3" y="827.5">s…</text>
<text x="2062.3" y="861.5">s…</text>
<text x="2215.3" y="521.5">net/…rap3</text>
<text x="2215.3" y="555.5">net/h…erve</text>
<text x="2226.3" y="589.5">net…TTP</text>
<text x="2226.3" y="623.5">gol…TTP</text>
<text x="2226.3" y="657.5">gol…TTP</text>
<text x="2226.3" y="691.5">git…TTP</text>
<text x="2226.3" y="725.5">git…est</text>
<text x="2226.3" y="759.5">git…nc1</text>
<text x="2227.3" y="793.5">mai…nc2</text>
<text x="2238.7" y="827.5">git…xt</text>
<text x="2238.7" y="861.5">gi…fm</text>
<text x="2238.7" y="895.5">gi…er</text>
<text x="2247.3" y="929.5">ma…c3</text>
<text x="2247.3" y="963.5">gi…t</text>
<text x="2247.3" y="997.5">ma…4</text>
<text x="2247.3" y="1031.5">gi…t</text>
<text x="2247.3" y="1065.5">ma…5</text>
<text x="2247.3" y="1099.5">gi…t</text>
<text x="2491.3" y="521.5">runtime.park_m</text>
<text x="2493" y="555.5">runtime.schedule</text>
<text x="2498" y="589.5">runtime…unnable</text>
<text x="2516.3" y="623.5">r…l</text>
<text x="2515.3" y="657.5">i…</text>
<text x="2935.7" y="521.5">runtime.gcBgMarkWorker.func2</text>
<text x="2935.7" y="555.5">runtime.gcDrain</text>
<text x="2939.7" y="589.5">run…ot</text>
<text x="3039.7" y="589.5">runtime.scanobject</text>
<text x="2939.7" y="623.5">ru…1</text>
<text x="3158.7" y="623.5">ru…xt</text>
<text x="2939.7" y="657.5">ru…k</text>
</g>
</svg>
<div id="sb">
<svg class="ic" style="left:26px;top:10px;width:44px;height:70px" viewBox="0 0 44 70">
<defs><linearGradient id="lg" x1="0" y1="1" x2="1" y2="0"><stop offset="0" stop-color="#3b8cff"/><stop offset="0.55" stop-color="#2fa5d8"/><stop offset="1" stop-color="#1fc27f"/></linearGradient></defs>
<rect x="5" y="11" width="2.200" height="25" fill="#3b8fff"/><rect x="20.500" y="3" width="2.200" height="25" fill="#2aa8b8"/><rect x="37" y="11" width="2.200" height="25" fill="#22b98a"/>
<path d="M22 32a17 17 0 1 1-9.500 31.100C8 60 4.500 54 5 48.500 5.500 39 13 32 22 32z" fill="url(#lg)"/>
<circle cx="17" cy="42.500" r="3.400" fill="#14171c"/><circle cx="17" cy="42.500" r="1.300" fill="#2f9ee0"/>
<circle cx="34" cy="49" r="3.400" fill="#14171c"/><circle cx="34" cy="49" r="1.300" fill="#27b0a8"/>
<circle cx="20.500" cy="55" r="2.300" fill="#14171c"/><circle cx="26.500" cy="40" r="1.600" fill="#14171c"/>
</svg>
<div class="sbb" style="top:118px"></div>
<svg class="ic" style="left:32px;top:134px;width:32px;height:32px" viewBox="0 0 24 24" fill="none" stroke="#3b95fb" stroke-width="2" stroke-linecap="round" stroke-linejoin="round"><path d="M15 6v12a3 3 0 1 0 3-3H6a3 3 0 1 0 3 3V6a3 3 0 1 0-3 3h12a3 3 0 1 0-3-3"/></svg>
<div class="sbb" style="top:198px"></div>
<svg class="ic" style="left:32px;top:214px;width:32px;height:32px" viewBox="0 0 24 24" fill="none" stroke="#3b95fb" stroke-width="2" stroke-linecap="round" stroke-linejoin="round"><path d="M15 21v-8a1 1 0 0 0-1-1h-4a1 1 0 0 0-1 1v8"/><path d="M3 10a2 2 0 0 1 .709-1.528l7-5.999a2 2 0 0 1 2.582 0l7 5.999A2 2 0 0 1 21 10v9a2 2 0 0 1-2 2H5a2 2 0 0 1-2-2z"/></svg>
<div class="sbb" style="top:278px"></div>
<svg class="ic" style="left:33.5px;top:295.5px;width:29px;height:29px" viewBox="0 0 24 24" fill="none" stroke="#3b95fb" stroke-width="2.200" stroke-linecap="round" stroke-linejoin="round"><rect width="7" height="9" x="3" y="3" rx="1.600"/><rect width="7" height="5" x="14" y="3" rx="1.600"/><rect width="7" height="9" x="14" y="12" rx="1.600"/><rect width="7" height="5" x="3" y="16" rx="1.600"/></svg>
<div class="sbb" style="top:358px"></div>
<svg class="ic" style="left:32px;top:374px;width:32px;height:32px" viewBox="0 0 24 24" fill="none" stroke="#3b95fb" stroke-width="2" stroke-linecap="round" stroke-linejoin="round"><path d="M6 8a6 6 0 0 1 12 0c0 7 3 9 3 9H3s3-2 3-9"/><path d="M10.3 21a1.94 1.94 0 0 0 3.4 0"/></svg>
<div class="sbb" style="top:438px"></div>
<svg class="ic" style="left:32px;top:454px;width:32px;height:32px" viewBox="0 0 24 24" fill="none" stroke="#3b95fb" stroke-width="2" stroke-linecap="round" stroke-linejoin="round"><polyline points="22 12 16 12 14 15 10 15 8 12 2 12"/><path d="M5.45 5.11 2 12v6a2 2 0 0 0 2 2h16a2 2 0 0 0 2-2v-6l-3.45-6.89A2 2 0 0 0 16.76 4H7.24a2 2 0 0 0-1.79 1.11z"/></svg>
<div class="sbb" style="top:518px"></div>
<svg class="ic" style="left:32px;top:534px;width:32px;height:32px" viewBox="0 0 24 24" fill="none" stroke="#3b95fb" stroke-width="2" stroke-linecap="round" stroke-linejoin="round"><path d="M14 2v4a2 2 0 0 0 2 2h4"/><path d="M4.268 21a2 2 0 0 0 1.727 1H18a2 2 0 0 0 2-2V7l-5-5H6a2 2 0 0 0-2 2v3"/><path d="m9 18-1.500-1.500"/><circle cx="5" cy="14" r="3"/></svg>
<div class="sbb" style="top:598px"></div>
<svg class="ic" style="left:32px;top:614px;width:32px;height:32px" viewBox="0 0 24 24" fill="none" stroke="#3b95fb" stroke-width="2" stroke-linecap="round" stroke-linejoin="round"><path d="M19.07 4.93A10 10 0 0 0 6.99 3.34"/><path d="M4 6h.01"/><path d="M2.29 9.62A10 10 0 1 0 21.31 8.35"/><path d="M16.24 7.76A6 6 0 1 0 8.23 16.67"/><path d="M12 18h.01"/><path d="M17.99 11.66A6 6 0 0 1 15.77 16.67"/><circle cx="12" cy="12" r="2"/><path d="m13.41 10.59 5.66-5.66"/></svg>
<div class="sbb" style="top:678px"></div>
<svg class="ic" style="left:32px;top:694px;width:32px;height:32px" viewBox="0 0 24 24" fill="none" stroke="#3b95fb" stroke-width="2" stroke-linecap="round" stroke-linejoin="round"><path d="M4 19.5v-15A2.500 2.500 0 0 1 6.500 2H20v20H6.500a2.500 2.500 0 0 1 0-5H20"/></svg>
<div class="sbb" style="top:758px"></div>
<svg class="ic" style="left:32px;top:774px;width:32px;height:32px" viewBox="0 0 24 24" fill="none" stroke="#3b95fb" stroke-width="2" stroke-linecap="round" stroke-linejoin="round"><path d="M2 10v3"/><path d="M6 6v11"/><path d="M10 3v18"/><path d="M14 8v7"/><path d="M18 5v13"/><path d="M22 10v3"/></svg>
<div class="sbb act" style="top:838px"></div>
<svg class="ic" style="left:32px;top:854px;width:32px;height:32px" viewBox="0 0 24 24" fill="none" stroke="#1fbe83" stroke-width="2" stroke-linecap="round" stroke-linejoin="round"><circle cx="12" cy="12" r="10"/><path d="M12 2a14.500 14.500 0 0 0 0 20 14.500 14.500 0 0 0 0-20"/><path d="M2 12h20"/></svg>
<div class="sbb" style="top:918px"></div>
<svg class="ic" style="left:32px;top:934px;width:32px;height:32px" viewBox="0 0 24 24" fill="#3b95fb" stroke="none"><path d="M0 10.300 6.500 8.600V20.500L0 22.400z"/><path d="M7.900 8.800 16.100 10.500V22.100L7.900 20.500z"/><path d="M17.100 10.300 24 8V20.700L17.100 22.400z"/><path d="M12 16.300 7.600 10.200A5.460 5.460 0 1 1 16.400 10.200z" stroke="#15181d" stroke-width="1.400"/><path d="M12 15.500 8.300 10.400A5.460 5.460 0 1 1 15.700 10.400z"/></svg>
<div class="sbb" style="top:998px"></div>
<svg class="ic" style="left:32px;top:1014px;width:32px;height:32px" viewBox="0 0 24 24" fill="none" stroke="#3b95fb" stroke-width="2" stroke-linecap="round" stroke-linejoin="round"><path d="M2.970 12.920A2 2 0 0 0 2 14.630v3.240a2 2 0 0 0 .970 1.710l3 1.800a2 2 0 0 0 2.060 0L12 19v-5.500l-5-3-4.030 2.420Z"/><path d="m7 16.500-4.740-2.850"/><path d="m7 16.500 5-3"/><path d="M7 16.500v5.170"/><path d="M12 13.500V19l3.970 2.380a2 2 0 0 0 2.060 0l3-1.800a2 2 0 0 0 .970-1.710v-3.240a2 2 0 0 0-.970-1.710L17 10.500l-5 3Z"/><path d="m17 16.500-5-3"/><path d="m17 16.500 4.740-2.850"/><path d="M17 16.500v5.170"/><path d="M7.970 4.420A2 2 0 0 0 7 6.130v4.370l5 3 5-3V6.130a2 2 0 0 0-.970-1.710l-3-1.800a2 2 0 0 0-2.060 0l-3 1.800Z"/><path d="M12 8 7.260 5.150"/><path d="m12 8 4.740-2.850"/><path d="M12 13.500V8"/></svg>
<div class="sbb" style="top:1078px"></div>
<svg class="ic" style="left:28.5px;top:1090.5px;width:39px;height:39px" viewBox="0 0 24 24" fill="none" stroke="#3b95fb" stroke-width="1.650" stroke-linecap="round" stroke-linejoin="round"><path d="M20 13c0 5-3.500 7.500-7.660 8.950a1 1 0 0 1-.670-.010C7.500 20.500 4 18 4 13V6a1 1 0 0 1 1-1c2 0 4.500-1.200 6.240-2.720a1.170 1.170 0 0 1 1.520 0C14.510 3.810 17 5 19 5a1 1 0 0 1 1 1z"/><path d="M12 8v4"/><path d="M12 16h.01"/></svg>
<div class="sbb" style="top:1158px"></div>
<svg class="ic" style="left:32px;top:1174px;width:32px;height:32px" viewBox="0 0 24 24" fill="none" stroke="#3b95fb" stroke-width="2" stroke-linecap="round" stroke-linejoin="round"><path d="m10.065 12.493-6.180 1.318a.934.934 0 0 1-1.108-.702l-.537-2.150a1.070 1.070 0 0 1 .691-1.265l13.504-4.440"/><path d="m13.560 11.747 4.332-.924"/><path d="m16 21-3.105-6.210"/><path d="M16.485 5.940a2 2 0 0 1 1.455-2.425l1.090-.272a1 1 0 0 1 1.212.727l1.515 6.060a1 1 0 0 1-.727 1.213l-1.090.272a2 2 0 0 1-2.425-1.455z"/><path d="m6.158 8.633 1.114 4.456"/><path d="m8 21 3.105-6.210"/><circle cx="12" cy="13" r="2"/></svg>
<div class="sbb" style="top:1238px"></div>
<svg class="ic" style="left:32px;top:1254px;width:32px;height:32px" viewBox="0 0 24 24" fill="none" stroke="#3b95fb" stroke-width="2" stroke-linecap="round" stroke-linejoin="round"><path d="M21 15a2 2 0 0 1-2 2H7l-4 4V5a2 2 0 0 1 2-2h14a2 2 0 0 1 2 2z"/></svg>
<div class="sbb" style="top:1318px"></div>
<svg class="ic" style="left:32px;top:1334px;width:32px;height:32px" viewBox="0 0 24 24" fill="none" stroke="#3b95fb" stroke-width="2" stroke-linecap="round" stroke-linejoin="round"><line x1="12" x2="12" y1="2" y2="22"/><path d="M17 5H9.500a3.500 3.500 0 0 0 0 7h5a3.500 3.500 0 0 1 0 7H6"/></svg>
<div class="sbb" style="top:1398px"></div>
<svg class="ic" style="left:32px;top:1414px;width:32px;height:32px" viewBox="0 0 24 24" fill="#3b95fb" stroke="none"><path d="M19.14 12.94c.04-.3.06-.61.06-.94 0-.32-.02-.64-.07-.94l2.030-1.580a.490.490 0 0 0 .12-.61l-1.920-3.320a.488.488 0 0 0-.59-.22l-2.390.96c-.5-.38-1.030-.7-1.620-.94l-.36-2.540a.484.484 0 0 0-.48-.41h-3.840c-.24 0-.43.17-.47.41l-.36 2.540c-.59.24-1.130.57-1.620.94l-2.390-.96c-.22-.08-.47 0-.59.22L2.740 8.870c-.12.21-.08.47.12.61l2.030 1.580c-.05.3-.09.63-.09.94s.02.64.07.94l-2.030 1.580a.490.490 0 0 0-.12.61l1.920 3.320c.12.22.37.29.59.22l2.390-.96c.5.38 1.030.7 1.620.94l.36 2.540c.05.24.24.41.48.41h3.840c.24 0 .44-.17.47-.41l.36-2.540c.59-.24 1.130-.56 1.620-.94l2.390.96c.22.08.47 0 .59-.22l1.920-3.320c.12-.22.07-.47-.12-.61l-2.010-1.580zM12 15.600c-1.980 0-3.600-1.620-3.600-3.600s1.620-3.600 3.600-3.600 3.600 1.620 3.600 3.600-1.620 3.600-3.600 3.600z"/></svg>
<div class="sbb" style="top:1478px"></div>
<svg class="ic" style="left:32px;top:1494px;width:32px;height:32px" viewBox="0 0 24 24" fill="none" stroke="#3b95fb" stroke-width="2" stroke-linecap="round" stroke-linejoin="round"><path d="M9 21H5a2 2 0 0 1-2-2V5a2 2 0 0 1 2-2h4"/><polyline points="16 17 21 12 16 7"/><line x1="21" x2="9" y1="12" y2="12"/></svg>
<div style="position:absolute;left:4px;top:1778px;width:90px;height:0;border-top:1px dashed #24282e"></div>
<svg class="ic" style="left:32px;top:1819px;width:32px;height:32px" viewBox="0 0 24 24" fill="none" stroke="#3b95fb" stroke-width="2" stroke-linecap="round" stroke-linejoin="round"><path d="M12 3a6 6 0 0 0 9 9 9 9 0 1 1-9-9Z"/></svg>
<div class="sbb" style="top:1884px"></div>
<svg class="ic" style="left:32px;top:1899px;width:32px;height:32px" viewBox="0 0 24 24" fill="none" stroke="#3b95fb" stroke-width="2" stroke-linecap="round" stroke-linejoin="round"><path d="m9 18 6-6-6-6"/></svg>
<div style="position:absolute;left:2px;top:92px;width:94px;height:2px;background:#22252a"></div>
</div>
<div id="sbl"></div>
<div id="tb"></div>
<div class="box" style="left:128px;top:13px;width:306px;height:64px"></div>
<div class="box" style="left:130px;top:15px;width:123px;height:60px;border-color:#1fbe83;background:#1a1e23;border-radius:8px 0 0 8px"></div>
<div class="t" style="left:148px;top:32px;font-size:25.300px;color:#e4e7ec">Service</div>
<div class="t" style="left:270px;top:32px;font-size:25.500px;color:#a7aebb">apiserver</div>
<svg class="ic" style="left:392px;top:33px;width:24px;height:24px" viewBox="0 0 24 24" fill="none" stroke="#a7aebb" stroke-width="2" stroke-linecap="round" stroke-linejoin="round"><path d="m7 15 5 5 5-5"/><path d="m7 9 5-5 5 5"/></svg>
<div class="box" style="left:2472px;top:17px;width:425px;height:56px"></div>
<div class="box" style="left:2472px;top:17px;width:178px;height:56px;border-color:#2b66b8;background:#192340;border-radius:8px 0 0 8px"></div>
<div class="t" style="left:2490px;top:32px;font-size:25.100px;color:#cdd5e4">Environment</div>
<div class="t" style="left:2665px;top:32px;font-size:25.100px;color:#9da1a8">All Environments</div>
<svg class="ic" style="left:2864px;top:34px;width:22px;height:22px" viewBox="0 0 24 24" fill="none" stroke="#7d8188" stroke-width="1.800" stroke-linecap="round" stroke-linejoin="round"><path d="m7 15 5 5 5-5"/><path d="m7 9 5-5 5 5"/></svg>
<div class="box" style="left:2929px;top:15px;width:343px;height:60px"></div>
<div class="box" style="left:2929px;top:15px;width:84px;height:60px;border-color:#2b66b8;background:#192340;border-radius:8px 0 0 8px"></div>
<div class="t" style="left:2948px;top:32px;font-size:24px;color:#cdd5e4;letter-spacing:-0.500px">15m</div>
<div class="t" style="left:3029px;top:32px;font-size:24.500px;color:#9da1a8">Past 15 Minutes</div>
<svg class="ic" style="left:3225px;top:34px;width:26px;height:26px" viewBox="0 0 24 24" fill="none" stroke="#9da1a8" stroke-width="2" stroke-linecap="round" stroke-linejoin="round"><path d="m6 9 6 6 6-6"/></svg>
<div class="box" style="left:3288px;top:15px;width:60px;height:60px"></div>
<div class="ab" style="left:3311px;top:36px;width:6px;height:19px;background:#a2a5aa;border-radius:1px"></div><div class="ab" style="left:3320px;top:36px;width:6px;height:19px;background:#a2a5aa;border-radius:1px"></div>
<div class="box" style="left:3364px;top:15px;width:60px;height:60px"></div>
<svg class="ic" style="left:3364px;top:15px;width:60px;height:60px" viewBox="0 0 60 60" fill="none" stroke="#9da0a6" stroke-width="2.300" stroke-linecap="round" stroke-linejoin="round"><path d="M39.700 30.800A10 10 0 1 1 29.900 22.500H35"/><path d="M29.800 16.800 35.700 22.500 29.800 28.200"/></svg>
<div class="box" style="left:1220px;top:110px;width:1112px;height:71px;background:#171b20;border-color:#23272d"></div>
<div class="box" style="left:2108px;top:112px;width:222px;height:68px;background:#1a1f24;border-color:#1fbe83;border-radius:8px"></div>
<div class="t" style="left:1183px;width:300px;text-align:center;top:129px;font-size:33.300px;color:#8a8f96">APM</div>
<div class="t" style="left:1404.5px;width:300px;text-align:center;top:129px;font-size:33.300px;color:#8a8f96">Kubernetes</div>
<div class="t" style="left:1626px;width:300px;text-align:center;top:129px;font-size:33.300px;color:#8a8f96">Logs</div>
<div class="t" style="left:1847.5px;width:300px;text-align:center;top:129px;font-size:33.300px;color:#8a8f96">Events</div>
<div class="t" style="left:2068.5px;width:300px;text-align:center;top:129px;font-size:33.300px;color:#e6e9ee">Profiling</div>
<svg class="ic" style="left:3236px;top:130px;width:32px;height:32px" viewBox="0 0 16 16" fill="#8d9096"><path d="M8 0C3.580 0 0 3.580 0 8c0 3.540 2.290 6.530 5.470 7.590.4.070.55-.17.55-.38 0-.19-.010-.82-.010-1.490-2.010.37-2.530-.49-2.690-.94-.09-.23-.48-.94-.82-1.130-.28-.15-.68-.52-.010-.53.63-.010 1.080.58 1.230.82.720 1.210 1.870.87 2.330.66.070-.52.280-.87.510-1.070-1.780-.2-3.640-.89-3.640-3.950 0-.87.310-1.590.82-2.150-.08-.2-.36-1.020.08-2.120 0 0 .67-.21 2.200.82.640-.18 1.320-.27 2-.27.680 0 1.360.09 2 .27 1.530-1.040 2.200-.82 2.200-.82.440 1.100.160 1.920.08 2.120.51.560.82 1.270.82 2.150 0 3.070-1.870 3.750-3.650 3.950.29.250.54.730.54 1.480 0 1.070-.010 1.930-.010 2.200 0 .21.150.46.550.38A8.013 8.013 0 0 0 16 8c0-4.420-3.580-8-8-8z"/></svg>
<div class="t" style="left:3277px;top:133px;font-size:25.100px;color:#979ba1">Source Code</div>
<div class="box" style="left:2555px;top:198px;width:357px;height:79px;border-color:#22262c"></div>
<div class="box" style="left:2557px;top:200px;width:163px;height:75px;border-color:#1fbe83;background:#11161b;border-radius:8px 0 0 8px"></div>
<div class="t" style="left:2583px;top:225px;font-size:25.300px;color:#e6e9ee">Container</div>
<div class="t" style="left:2736px;top:227px;font-size:25.200px;color:#979ba1">All Containers</div>
<div class="box" style="left:2928px;top:198px;width:512px;height:79px;background:#15191e;border-color:#23272d"></div>
<div class="t" style="left:2946px;top:223px;font-size:28.900px;color:#868a91">Search function...</div>
<div class="ab" style="left:3453px;top:0;width:3px;height:1960px;background:#2b2e33"></div>
</div></body></html>
